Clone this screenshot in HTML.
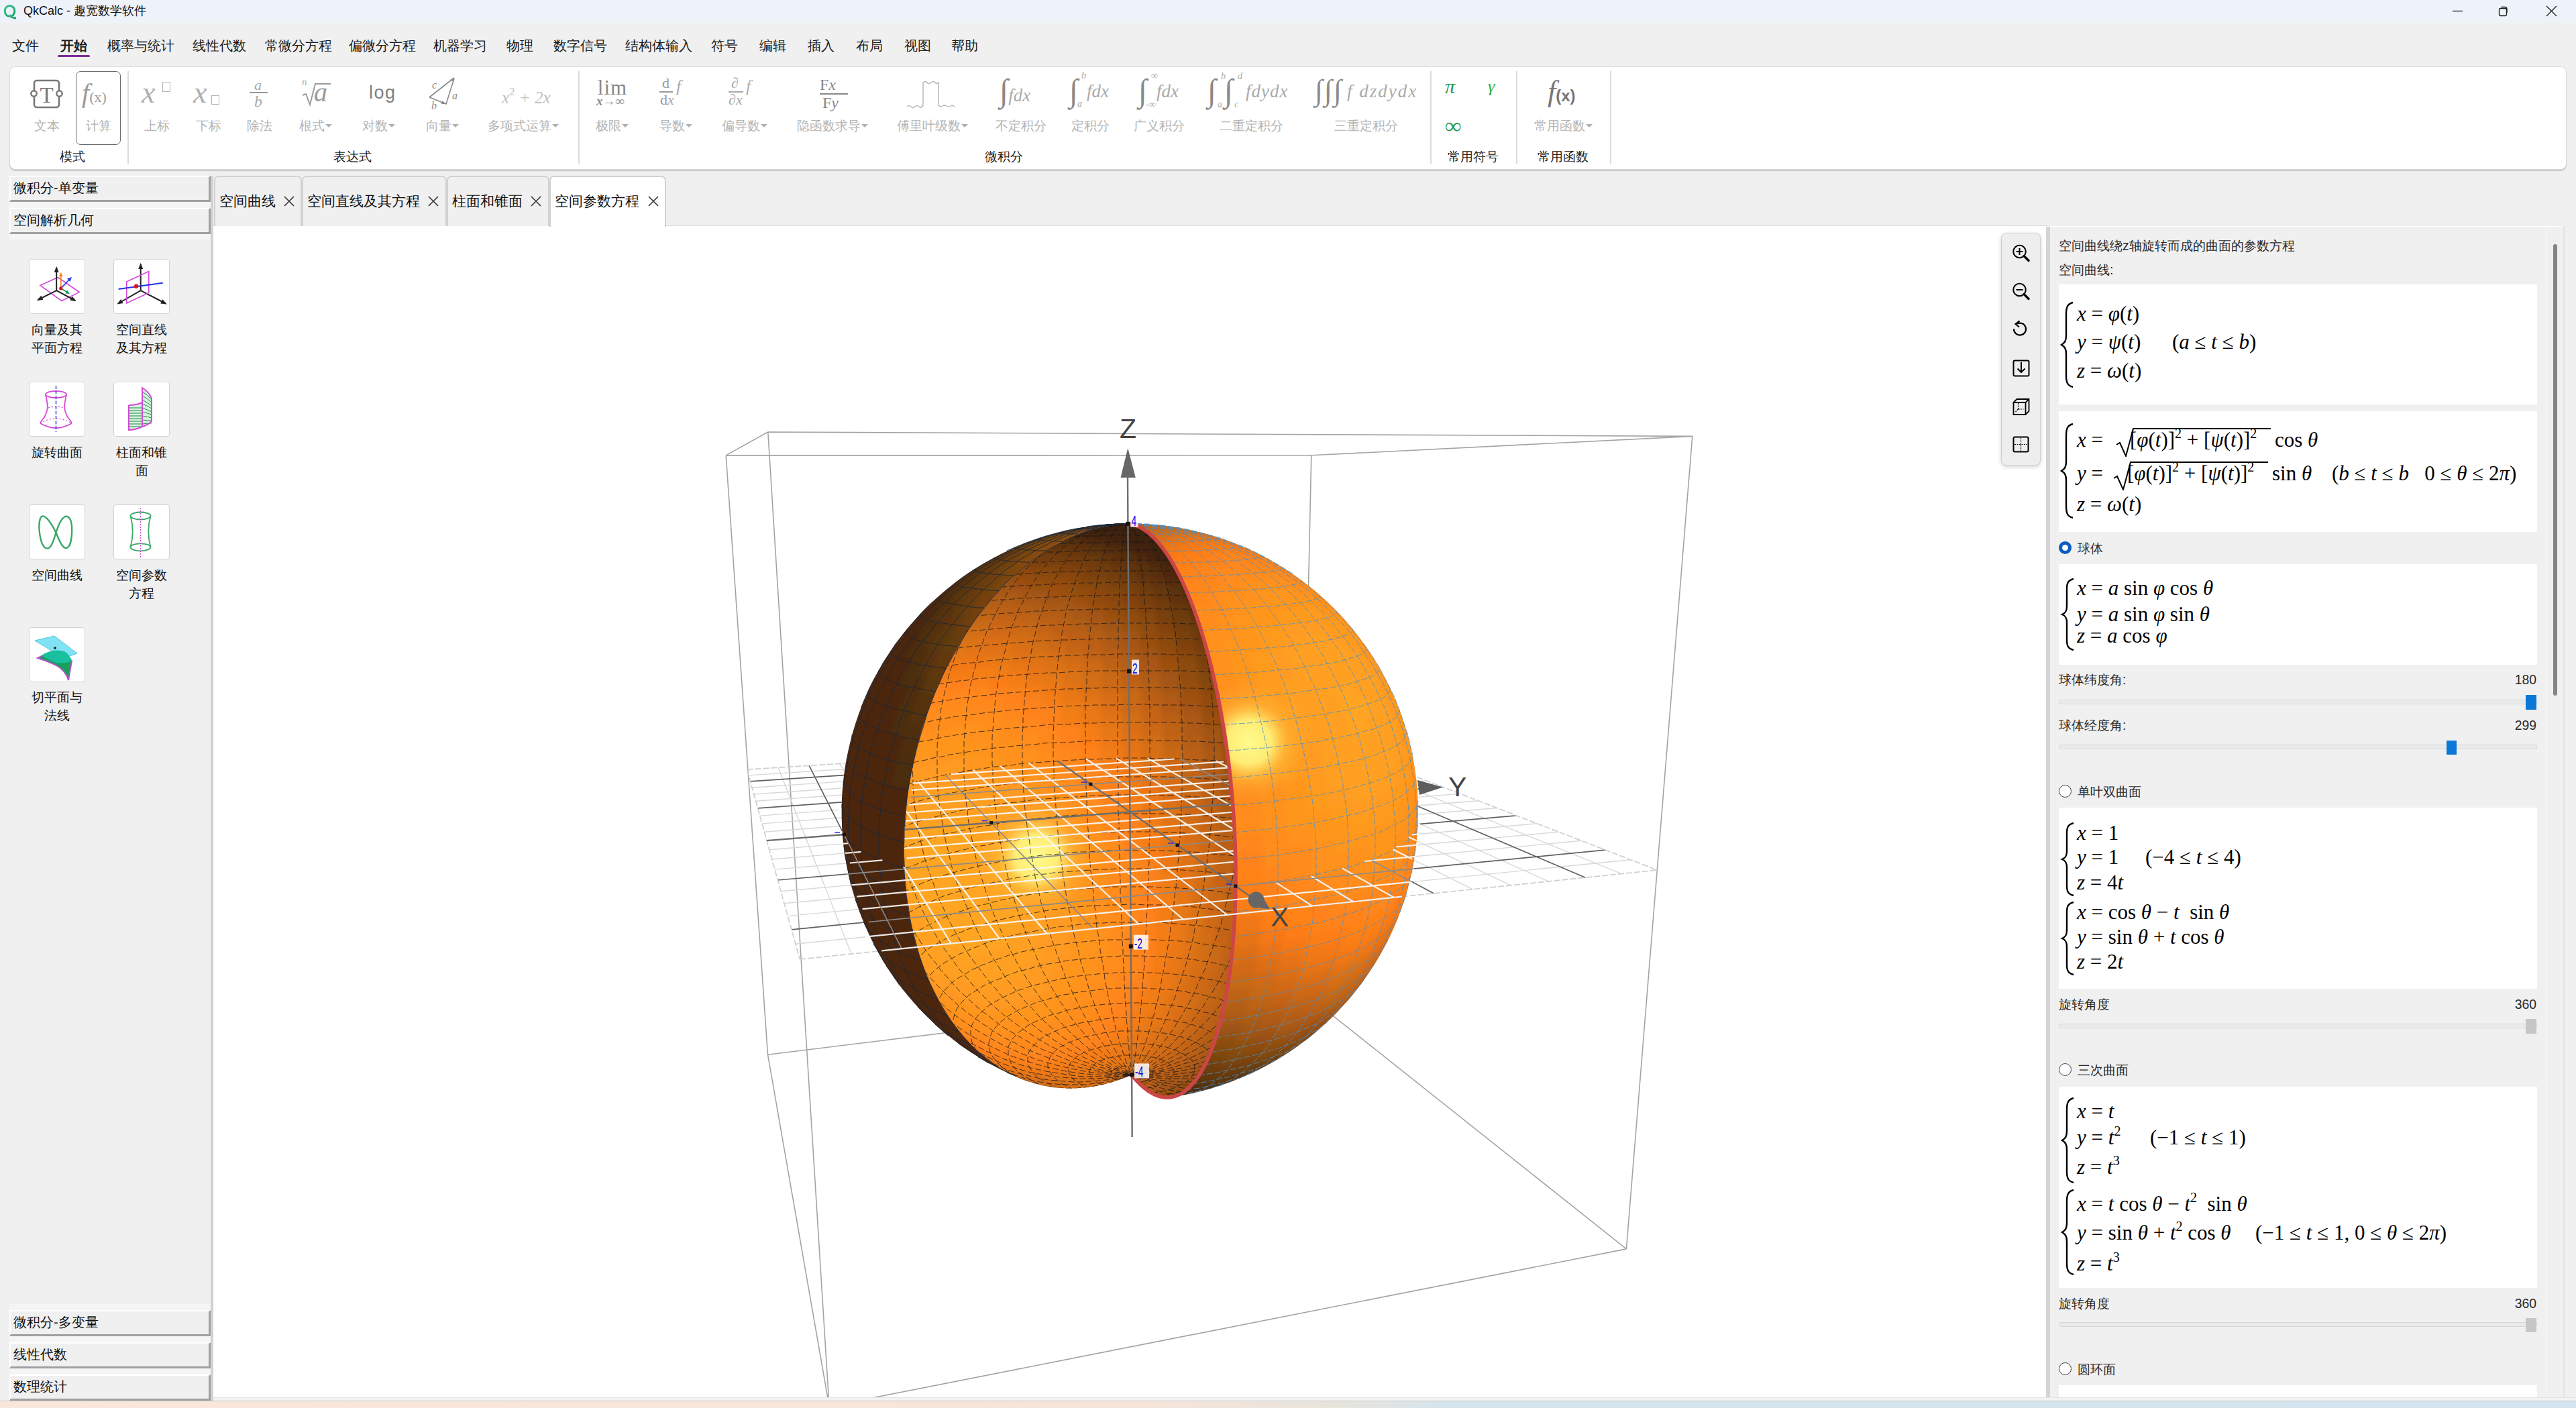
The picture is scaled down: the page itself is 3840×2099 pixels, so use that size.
<!DOCTYPE html>
<html><head><meta charset="utf-8"><title>QkCalc</title>
<style>
*{box-sizing:border-box}
html,body{margin:0;padding:0}
body{width:3840px;height:2099px;position:relative;overflow:hidden;background:#f0f0f0;font-family:"Liberation Sans",sans-serif;color:#1a1a1a}
.a{position:absolute;white-space:nowrap}
#title{left:0;top:0;width:3840px;height:34px;background:#eef3f9}
.menu{top:55px;font-size:20px;line-height:26px;color:#1a1a1a}
#ribbon{left:14px;top:99px;width:3812px;height:154px;background:#fff;border:1px solid #dadada;border-radius:9px;box-shadow:0 2px 1px #c8c8c8}
.sep{top:106px;width:2px;height:139px;background:#dcdcdc}
.rl{top:175px;font-size:19px;line-height:26px;color:#b4b4b4;text-align:center}
.gl{top:221px;font-size:19px;line-height:26px;color:#1e1e1e;text-align:center}
.ic{color:#a8a8a8;font-family:"Liberation Serif",serif;font-style:italic;text-align:center}
.dd{display:inline-block;width:0;height:0;border-left:5px solid transparent;border-right:5px solid transparent;border-top:5px solid #b0b0b0;vertical-align:middle;margin-left:1px;position:relative;top:-1px}
.shdr{left:14px;width:300px;height:39px;background:#f0f0f0;border-top:2px solid #fff;border-left:2px solid #fff;border-bottom:3px solid #a0a0a0;border-right:3px solid #a0a0a0;font-size:20px;line-height:33px;padding-left:4px;color:#111}
.tile{width:84px;height:82px;background:#fff;border:1px solid #d4d4d4;border-radius:4px}
.tl{font-size:19px;line-height:27px;color:#111;text-align:center;width:120px}
.tab{top:262px;height:75px;background:#f0f0f0;border:2px solid #d2d2d2;border-bottom:none;border-radius:7px 7px 0 0;font-size:21px;line-height:72px;color:#111;padding-left:6px}
.tx{position:absolute;top:27px;width:18px;height:18px}
.rp{font-size:19.4px;line-height:24px;color:#2a2a2a}
.mb{background:#fff}
.m{font-family:"Liberation Serif",serif;font-size:31px;color:#000;line-height:34px}
.m i{font-style:italic}
.m sup{line-height:0;vertical-align:0;position:relative;top:-13px}
.m .sp{letter-spacing:2px;word-spacing:1px}
.sl{height:7px;background:#e8eaec;border:1px solid #d6d8da;border-radius:3px}
.radio{width:19px;height:19px;border-radius:50%;border:1.6px solid #444;background:#fff}
</style></head><body>
<!-- TITLE BAR -->
<div id="title" class="a"></div>
<svg class="a" style="left:4px;top:6px" width="22" height="24" viewBox="0 0 22 24"><defs><linearGradient id="qg" x1="0" y1="0" x2="1" y2="1"><stop offset="0" stop-color="#38c38a"/><stop offset="1" stop-color="#17a06a"/></linearGradient></defs><ellipse cx="10.5" cy="10.5" rx="7.3" ry="8" fill="none" stroke="url(#qg)" stroke-width="3"/><path d="M10 16 Q13 21 20 21" stroke="url(#qg)" stroke-width="3" fill="none"/></svg>
<div class="a" style="left:35px;top:4px;font-size:18px;line-height:25px;color:#111">QkCalc - 趣宽数学软件</div>
<svg class="a" style="left:3650px;top:4px" width="180" height="26"><path d="M6 12.5h15" stroke="#1a1a1a" stroke-width="1.3"/><rect x="75.5" y="8.5" width="11" height="11" rx="1.8" fill="none" stroke="#1a1a1a" stroke-width="1.3"/><path d="M78.5 6.5h5.5a3 3 0 0 1 3 3v5.5" fill="none" stroke="#1a1a1a" stroke-width="1.3"/><path d="M146 5l15 15M161 5l-15 15" stroke="#1a1a1a" stroke-width="1.3"/></svg>
<!-- MENU -->
<div class="a menu" style="left:18px">文件</div>
<div class="a menu" style="left:90px;font-weight:bold">开始</div>
<div class="a" style="left:86px;top:82px;width:48px;height:3px;background:#7b2c9b;border-radius:2px"></div>
<div class="a menu" style="left:160px">概率与统计</div>
<div class="a menu" style="left:287px">线性代数</div>
<div class="a menu" style="left:395px">常微分方程</div>
<div class="a menu" style="left:520px">偏微分方程</div>
<div class="a menu" style="left:646px">机器学习</div>
<div class="a menu" style="left:755px">物理</div>
<div class="a menu" style="left:825px">数字信号</div>
<div class="a menu" style="left:932px">结构体输入</div>
<div class="a menu" style="left:1060px">符号</div>
<div class="a menu" style="left:1132px">编辑</div>
<div class="a menu" style="left:1204px">插入</div>
<div class="a menu" style="left:1276px">布局</div>
<div class="a menu" style="left:1348px">视图</div>
<div class="a menu" style="left:1418px">帮助</div>
<!-- RIBBON -->
<div id="ribbon" class="a"></div>
<div class="a sep" style="left:190px"></div>
<div class="a sep" style="left:862px"></div>
<div class="a sep" style="left:2132px"></div>
<div class="a sep" style="left:2260px"></div>
<div class="a sep" style="left:2400px"></div>
<!-- group labels -->
<div class="a gl" style="left:58px;width:100px">模式</div>
<div class="a gl" style="left:475px;width:100px">表达式</div>
<div class="a gl" style="left:1446px;width:100px">微积分</div>
<div class="a gl" style="left:2146px;width:100px">常用符号</div>
<div class="a gl" style="left:2280px;width:100px">常用函数</div>
<!-- mode -->
<svg class="a" style="left:44px;top:115px" width="52" height="50"><rect x="7" y="5" width="37" height="40" rx="4" fill="none" stroke="#787878" stroke-width="2.6"/><circle cx="6.5" cy="24.5" r="4.2" fill="#fff" stroke="#787878" stroke-width="2.4"/><circle cx="44.5" cy="24.5" r="4.2" fill="#fff" stroke="#787878" stroke-width="2.4"/><text x="25.5" y="38" text-anchor="middle" font-family="Liberation Serif" font-size="33" fill="#787878">T</text></svg>
<div class="a" style="left:113px;top:106px;width:67px;height:110px;border:1.6px solid #6a6a6a;border-radius:7px"></div>
<div class="a ic" style="left:122px;top:114px;font-size:40px;line-height:50px;color:#9a9a9a">f<span style="font-style:normal;font-size:22px">(x)</span></div>
<div class="a rl" style="left:30px;width:80px">文本</div>
<div class="a rl" style="left:107px;width:80px">计算</div>
<!-- expression -->
<div class="a ic" style="left:211px;top:108px;font-size:46px;line-height:60px;color:#b0b0b0">x</div>
<div class="a" style="left:242px;top:122px;width:12px;height:15px;border:1.5px solid #b4b4b4"></div>
<div class="a ic" style="left:288px;top:108px;font-size:46px;line-height:60px;color:#b0b0b0">x</div>
<div class="a" style="left:315px;top:142px;width:12px;height:14px;border:1.5px solid #b4b4b4"></div>
<div class="a ic" style="left:379px;top:116px;font-size:22px;line-height:22px;color:#aaa">a</div>
<div class="a" style="left:372px;top:137px;width:27px;height:2px;background:#999"></div>
<div class="a ic" style="left:379px;top:139px;font-size:24px;line-height:24px;color:#aaa">b</div>
<div class="a ic" style="left:450px;top:115px;font-size:15px;line-height:15px;color:#aaa">n</div>
<svg class="a" style="left:449px;top:124px" width="46" height="36"><path d="M2 18l5 -2l6 16l8 -31h23" fill="none" stroke="#9a9a9a" stroke-width="2"/></svg>
<div class="a ic" style="left:468px;top:117px;font-size:40px;line-height:42px;color:#9a9a9a">a</div>
<div class="a" style="left:550px;top:122px;font-size:27px;line-height:32px;color:#808080;letter-spacing:1.5px">log</div>
<svg class="a" style="left:632px;top:108px" width="56" height="56"><path d="M8 37L45 8M8 37l25 10l12 -38" fill="none" stroke="#8a8a8a" stroke-width="1.6"/><path d="M45 8l-6 3l5 3z M33 47l-6 -5l-1 5z" fill="#8a8a8a"/><text x="12" y="24" font-family="Liberation Serif" font-style="italic" font-size="16" fill="#8a8a8a">c</text><text x="42" y="40" font-family="Liberation Serif" font-style="italic" font-size="16" fill="#8a8a8a">a</text><text x="11" y="55" font-family="Liberation Serif" font-style="italic" font-size="16" fill="#8a8a8a">b</text></svg>
<div class="a ic" style="left:748px;top:121px;font-size:25px;line-height:32px;color:#c0c0c0">x<sup style="font-size:17px;font-style:normal;vertical-align:12px">2</sup> + 2x</div>
<div class="a rl" style="left:194px;width:80px">上标</div>
<div class="a rl" style="left:271px;width:80px">下标</div>
<div class="a rl" style="left:347px;width:80px">除法</div>
<div class="a rl" style="left:420px;width:100px">根式<i class="dd"></i></div>
<div class="a rl" style="left:514px;width:100px">对数<i class="dd"></i></div>
<div class="a rl" style="left:609px;width:100px">向量<i class="dd"></i></div>
<div class="a rl" style="left:710px;width:140px">多项式运算<i class="dd"></i></div>
<!-- calculus -->
<div class="a" style="left:888px;top:118px;width:50px;text-align:center;font-family:'Liberation Serif',serif;font-size:31px;line-height:26px;color:#888;letter-spacing:1px">lim</div>
<div class="a ic" style="left:889px;top:142px;font-size:19px;line-height:18px;color:#888;font-weight:bold">x<span style="font-style:normal">→∞</span></div>
<div class="a" style="left:987px;top:114px;font-family:'Liberation Serif',serif;font-size:22px;line-height:20px;color:#999">d</div>
<div class="a" style="left:983px;top:136px;width:20px;height:2px;background:#999"></div>
<div class="a" style="left:984px;top:138px;font-family:'Liberation Serif',serif;font-size:22px;line-height:22px;color:#999">d<i style="color:#aaa">x</i></div>
<div class="a ic" style="left:1008px;top:114px;font-size:26px;line-height:30px;color:#aaa">f</div>
<div class="a" style="left:1090px;top:114px;font-family:'Liberation Serif',serif;font-size:22px;line-height:20px;color:#aaa">∂</div>
<div class="a" style="left:1086px;top:136px;width:22px;height:2px;background:#aaa"></div>
<div class="a" style="left:1086px;top:138px;font-family:'Liberation Serif',serif;font-size:22px;line-height:22px;color:#aaa">∂<i>x</i></div>
<div class="a ic" style="left:1112px;top:114px;font-size:26px;line-height:30px;color:#b0b0b0">f</div>
<div class="a" style="left:1222px;top:115px;font-family:'Liberation Serif',serif;font-size:24px;line-height:22px;color:#888">F<i>x</i></div>
<div class="a" style="left:1222px;top:139px;width:42px;height:2px;background:#888"></div>
<div class="a" style="left:1226px;top:141px;font-family:'Liberation Serif',serif;font-size:24px;line-height:24px;color:#888">F<i>y</i></div>
<svg class="a" style="left:1350px;top:115px" width="82" height="50"><path d="M2 44q3 -3 6 0t6 0t6 0t6 -2v-34q4 -3 6 0t6 0t6 0t5 0v34q3 3 6 1t6 0t6 0t6 1" fill="none" stroke="#b8b8b8" stroke-width="1.5"/></svg>
<div class="a ic" style="left:1490px;top:107px;font-size:48px;line-height:56px;color:#8a8a8a">∫<span style="font-size:27px;color:#aaa">fdx</span></div>
<div class="a ic" style="left:1594px;top:107px;font-size:48px;line-height:56px;color:#8a8a8a">∫</div>
<div class="a ic" style="left:1612px;top:106px;font-size:14px;line-height:14px;color:#aaa">b</div>
<div class="a ic" style="left:1606px;top:148px;font-size:14px;line-height:14px;color:#aaa">a</div>
<div class="a ic" style="left:1620px;top:119px;font-size:27px;line-height:34px;color:#aaa">fdx</div>
<div class="a ic" style="left:1697px;top:107px;font-size:48px;line-height:56px;color:#8a8a8a">∫</div>
<div class="a ic" style="left:1716px;top:106px;font-size:14px;line-height:14px;color:#aaa">∞</div>
<div class="a ic" style="left:1708px;top:149px;font-size:14px;line-height:14px;color:#aaa">-∞</div>
<div class="a ic" style="left:1724px;top:119px;font-size:27px;line-height:34px;color:#aaa">fdx</div>
<div class="a ic" style="left:1800px;top:107px;font-size:48px;line-height:56px;color:#8a8a8a">∫</div>
<div class="a ic" style="left:1820px;top:107px;font-size:14px;line-height:14px;color:#aaa">b</div>
<div class="a ic" style="left:1815px;top:149px;font-size:14px;line-height:14px;color:#aaa">a</div>
<div class="a ic" style="left:1825px;top:107px;font-size:48px;line-height:56px;color:#8a8a8a">∫</div>
<div class="a ic" style="left:1845px;top:107px;font-size:14px;line-height:14px;color:#aaa">d</div>
<div class="a ic" style="left:1840px;top:149px;font-size:14px;line-height:14px;color:#aaa">c</div>
<div class="a ic" style="left:1857px;top:119px;font-size:27px;line-height:34px;color:#aaa;letter-spacing:1px">fdydx</div>
<div class="a ic" style="left:1960px;top:107px;font-size:44px;line-height:56px;color:#8a8a8a">∫</div><div class="a ic" style="left:1974px;top:107px;font-size:44px;line-height:56px;color:#8a8a8a">∫</div><div class="a ic" style="left:1988px;top:107px;font-size:44px;line-height:56px;color:#8a8a8a">∫</div>
<div class="a ic" style="left:2008px;top:119px;font-size:27px;line-height:34px;color:#aaa;letter-spacing:2px">f dzdydx</div>
<div class="a rl" style="left:872px;width:80px">极限<i class="dd"></i></div>
<div class="a rl" style="left:957px;width:100px">导数<i class="dd"></i></div>
<div class="a rl" style="left:1050px;width:120px">偏导数<i class="dd"></i></div>
<div class="a rl" style="left:1171px;width:140px">隐函数求导<i class="dd"></i></div>
<div class="a rl" style="left:1320px;width:140px">傅里叶级数<i class="dd"></i></div>
<div class="a rl" style="left:1472px;width:100px">不定积分</div>
<div class="a rl" style="left:1585px;width:80px">定积分</div>
<div class="a rl" style="left:1678px;width:100px">广义积分</div>
<div class="a rl" style="left:1805px;width:120px">二重定积分</div>
<div class="a rl" style="left:1976px;width:120px">三重定积分</div>
<!-- symbols -->
<div class="a ic" style="left:2154px;top:112px;font-size:30px;line-height:34px;color:#1f9b52">π</div>
<div class="a ic" style="left:2218px;top:112px;font-size:26px;line-height:34px;color:#27b427">γ</div>
<div class="a" style="left:2154px;top:170px;font-family:'Liberation Serif',serif;font-size:34px;line-height:36px;color:#1f9b52;font-weight:bold">∞</div>
<div class="a ic" style="left:2307px;top:112px;font-size:44px;line-height:50px;color:#777">f<span style="font-style:normal;font-family:'Liberation Sans';font-size:24px;font-weight:bold;color:#777">(x)</span></div>
<div class="a rl" style="left:2270px;width:120px">常用函数<i class="dd"></i></div>

<!-- SIDEBAR -->
<div class="a" style="left:314px;top:262px;width:4px;height:1826px;background:#d2d2d2"></div>
<div class="a" style="left:14px;top:301px;width:300px;height:9px;background:#f5f5f5"></div>
<div class="a" style="left:14px;top:349px;width:300px;height:9px;background:#f5f5f5"></div>
<div class="a shdr" style="top:262px">微积分-单变量</div>
<div class="a shdr" style="top:310px">空间解析几何</div>
<div class="a" style="left:14px;top:1944px;width:300px;height:144px;background:#f5f5f5"></div>
<div class="a shdr" style="top:1953px">微积分-多变量</div>
<div class="a shdr" style="top:2001px">线性代数</div>
<div class="a shdr" style="top:2049px">数理统计</div>
<!-- tiles -->
<div class="a tile" style="left:43px;top:386px"><svg width="84" height="82" style="position:absolute;left:0;top:0">
<defs><marker id="ak" markerUnits="userSpaceOnUse" markerWidth="9" markerHeight="8" refX="7" refY="4" orient="auto"><path d="M0 0.5L9 4L0 7.5z" fill="#222"/></marker></defs>
<path d="M15.9 38.5L42.4 26.5L74.3 48.5L47.9 61.5Z" fill="none" stroke="#d24bd8" stroke-width="1.6"/>
<path d="M40.2 46.2V12" stroke="#222" stroke-width="2" fill="none" marker-end="url(#ak)"/><path d="M40.2 46.2L12.5 60" stroke="#222" stroke-width="2" fill="none" marker-end="url(#ak)"/><path d="M40.2 46.2L68 61" stroke="#222" stroke-width="2" fill="none" marker-end="url(#ak)"/>
<path d="M46.8 42.9V22" stroke="#f08a1c" stroke-width="1.8"/><path d="M46.8 19l-3 6h6z" fill="#f08a1c"/>
<path d="M46.8 42.9L61 28" stroke="#2a3ae0" stroke-width="1.8"/><path d="M63 26l-7 2.5 4.5 4.5z" fill="#2a3ae0"/>
<path d="M46.8 42.9L57 49" stroke="#1a9b5a" stroke-width="1.8"/><path d="M60 51l-6.5-0.5 2.5-5z" fill="#1a9b5a"/>
<circle cx="46.8" cy="42.9" r="2.6" fill="#e01010"/></svg></div>
<div class="a tile" style="left:169px;top:386px"><svg width="84" height="82" style="position:absolute;left:0;top:0">
<path d="M39.7 46.2V7" stroke="#222" stroke-width="2" fill="none" marker-end="url(#ak)"/><path d="M39.7 46.2L6 65.5" stroke="#222" stroke-width="2" fill="none" marker-end="url(#ak)"/><path d="M39.7 46.2L77 65.5" stroke="#222" stroke-width="2" fill="none" marker-end="url(#ak)"/>
<path d="M18.7 33L51.8 17.5V49.5L18.7 65Z" fill="none" stroke="#d24bd8" stroke-width="1.6"/>
<path d="M6.6 44L72.7 34.8" stroke="#2330e8" stroke-width="2"/>
<circle cx="33.1" cy="39.8" r="3.2" fill="#e81010"/></svg></div>
<div class="a tile" style="left:43px;top:569px"><svg width="84" height="82" style="position:absolute;left:0;top:0">
<ellipse cx="39.5" cy="18" rx="15.5" ry="5" fill="none" stroke="#d64ad6" stroke-width="1.8"/>
<path d="M24 18C26 30 30 38 22 52Q17 58 16 61M55 18C53 30 49 38 57 52Q62 58 63 61" fill="none" stroke="#d64ad6" stroke-width="1.8"/>
<path d="M16 61Q39.5 75 63 61" fill="none" stroke="#d64ad6" stroke-width="1.8"/>
<path d="M16 61Q39.5 47 63 61M28 38Q39.5 34 51 38" fill="none" stroke="#d64ad6" stroke-width="1.2" stroke-dasharray="2 3"/>
<path d="M39.5 5V74" stroke="#3a4ee0" stroke-width="1.6" stroke-dasharray="5 2.5"/></svg></div>
<div class="a tile" style="left:169px;top:569px"><svg width="84" height="82" style="position:absolute;left:0;top:0">
<path d="M22 34Q34 34 42 30V66Q32 71 22 71Z" fill="#d6f0de"/>
<path d="M42 8Q52 14 56 24V58Q50 64 42 66Z" fill="#d6f0de"/>
<path d="M22 38h20M22 42h20M22 46h20M22 50h20M22 54h20M22 58h20M22 62h20M22 66h20M42 14q8 4 14 12M42 20q8 4 14 10M42 26q8 4 14 9M42 32q8 3 14 7M42 38q8 3 14 6M42 44q8 2 14 4M42 50q8 1 14 3M42 56q8 1 14 1M42 62q8 -1 14 -1" stroke="#1f8f4a" stroke-width="1" fill="none"/>
<path d="M22 34Q34 34 42 30M22 34V71Q32 71 42 66Q50 64 56 58V24Q52 14 42 8V66" fill="none" stroke="#d64ad6" stroke-width="2"/></svg></div>
<div class="a tile" style="left:43px;top:752px"><svg width="84" height="82" style="position:absolute;left:0;top:0">
<path d="M39.5 41C30 22 20 10 16 20C12 32 16 60 24 64C32 68 36 52 39.5 41C43 30 50 12 58 18C66 24 64 58 57 63C50 68 44 52 39.5 41Z" fill="none" stroke="#3aa86a" stroke-width="2.4"/></svg></div>
<div class="a tile" style="left:169px;top:752px"><svg width="84" height="82" style="position:absolute;left:0;top:0">
<ellipse cx="39.5" cy="16" rx="15" ry="5.5" fill="none" stroke="#3aa86a" stroke-width="1.8"/>
<ellipse cx="39.5" cy="62.8" rx="15" ry="5.5" fill="none" stroke="#3aa86a" stroke-width="1.8"/>
<path d="M24.5 16Q31 39 24.5 62.8M54.5 16Q48 39 54.5 62.8" fill="none" stroke="#3aa86a" stroke-width="1.8"/>
<path d="M39.5 4V78" stroke="#d64ad6" stroke-width="1.4" stroke-dasharray="2 2"/></svg></div>
<div class="a tile" style="left:43px;top:935px"><svg width="84" height="82" style="position:absolute;left:0;top:0">
<path d="M12 45Q22 40 32 36Q52 38 63 49L58 78Q54 64 40 56Q28 50 12 45Z" fill="#16a058" stroke="#b355c8" stroke-width="2"/>
<path d="M8 19L37 12L71 38L51 45Z" fill="#72e0f2" opacity="0.9" stroke="#3cc0e0" stroke-width="1"/>
<path d="M18 41Q34 30 52 35Q60 40 63 49Q54 54 40 52Q28 48 18 41Z" fill="#18c0a0"/>
<circle cx="38" cy="30" r="1.8" fill="#111"/></svg></div>
<!-- tile labels -->
<div class="a tl" style="left:25px;top:478px">向量及其</div>
<div class="a tl" style="left:25px;top:505px">平面方程</div>
<div class="a tl" style="left:151px;top:478px">空间直线</div>
<div class="a tl" style="left:151px;top:505px">及其方程</div>
<div class="a tl" style="left:25px;top:661px">旋转曲面</div>
<div class="a tl" style="left:151px;top:661px">柱面和锥</div>
<div class="a tl" style="left:151px;top:688px">面</div>
<div class="a tl" style="left:25px;top:844px">空间曲线</div>
<div class="a tl" style="left:151px;top:844px">空间参数</div>
<div class="a tl" style="left:151px;top:871px">方程</div>
<div class="a tl" style="left:25px;top:1026px">切平面与</div>
<div class="a tl" style="left:25px;top:1053px">法线</div>

<!-- MAIN VIEW BG -->
<div class="a" style="left:318px;top:336px;width:2734px;height:1749px;background:#fff;border-top:1px solid #dcdcdc"></div>
<div class="a tab" style="left:319px;width:131px">空间曲线<svg class="tx" style="left:101px"><path d="M2 2l14 14M16 2L2 16" stroke="#3a3a3a" stroke-width="1.7"/></svg></div>
<div class="a tab" style="left:450px;width:216px">空间直线及其方程<svg class="tx" style="left:185px"><path d="M2 2l14 14M16 2L2 16" stroke="#3a3a3a" stroke-width="1.7"/></svg></div>
<div class="a tab" style="left:666px;width:153px">柱面和锥面<svg class="tx" style="left:122px"><path d="M2 2l14 14M16 2L2 16" stroke="#3a3a3a" stroke-width="1.7"/></svg></div>
<div class="a tab" style="left:819px;width:174px;background:#fff;height:76px">空间参数方程<svg class="tx" style="left:144px"><path d="M2 2l14 14M16 2L2 16" stroke="#3a3a3a" stroke-width="1.7"/></svg></div>
<!-- window bottom -->
<div class="a" style="left:318px;top:2083px;width:3522px;height:5px;background:#f3f3f3;border-top:1px solid #e4e4e4"></div>
<div class="a" style="left:0;top:2088px;width:3840px;height:11px;background:linear-gradient(90deg,#fbe6dc 0%,#f6e4da 45%,#e7e4dc 52%,#d6e4ee 56%,#d4e3ee 100%);border-top:1px solid #c4c4c4"></div>

<svg width="2731" height="1746" viewBox="319 337 2731 1746" style="position:absolute;left:319px;top:337px"><defs><clipPath id="cw"><path d="M1681.4 780.8L1683.2 780.9L1685.0 781.2L1686.8 781.5L1688.6 781.9L1690.3 782.4L1692.2 783.0L1694.0 783.7L1695.8 784.4L1697.6 785.2L1699.5 786.2L1701.3 787.1L1703.1 788.2L1705.0 789.4L1706.9 790.6L1708.7 792.0L1710.6 793.4L1712.5 794.9L1714.3 796.5L1716.2 798.1L1718.1 799.9L1720.0 801.7L1721.9 803.7L1723.8 805.7L1725.7 807.8L1727.6 810.0L1729.4 812.3L1731.3 814.7L1733.2 817.1L1735.1 819.7L1737.0 822.3L1738.9 825.0L1740.8 827.8L1742.7 830.7L1744.6 833.7L1746.5 836.8L1748.3 840.0L1750.2 843.2L1752.1 846.6L1753.9 850.0L1755.8 853.5L1757.6 857.1L1759.5 860.8L1761.3 864.5L1763.1 868.4L1764.9 872.3L1766.8 876.3L1768.6 880.4L1770.3 884.6L1772.1 888.9L1773.9 893.2L1775.6 897.7L1777.4 902.2L1779.1 906.8L1780.8 911.4L1782.5 916.2L1784.2 921.0L1785.9 925.9L1787.6 930.9L1789.2 935.9L1790.8 941.0L1792.4 946.2L1794.0 951.5L1795.6 956.8L1797.2 962.2L1798.7 967.7L1800.2 973.2L1801.7 978.8L1803.2 984.5L1804.6 990.2L1806.1 996.0L1807.5 1001.8L1808.9 1007.7L1810.2 1013.7L1811.6 1019.7L1812.9 1025.7L1814.2 1031.8L1815.5 1038.0L1816.7 1044.2L1817.9 1050.5L1819.1 1056.8L1820.3 1063.1L1821.4 1069.5L1822.5 1076.0L1823.6 1082.4L1824.7 1088.9L1825.7 1095.5L1826.7 1102.0L1827.7 1108.6L1828.6 1115.3L1829.5 1121.9L1830.4 1128.6L1831.3 1135.3L1832.1 1142.0L1832.9 1148.8L1833.6 1155.5L1834.4 1162.3L1835.0 1169.1L1835.7 1175.9L1836.3 1182.7L1836.9 1189.5L1837.5 1196.4L1838.0 1203.2L1838.5 1210.0L1839.0 1216.8L1839.4 1223.7L1839.8 1230.5L1840.2 1237.3L1840.5 1244.1L1840.8 1250.9L1841.1 1257.7L1841.3 1264.4L1841.5 1271.2L1841.7 1277.9L1841.8 1284.6L1841.9 1291.3L1842.0 1297.9L1842.0 1304.6L1842.0 1311.2L1842.0 1317.8L1841.9 1324.3L1841.8 1330.8L1841.7 1337.3L1841.5 1343.7L1841.3 1350.1L1841.0 1356.5L1840.8 1362.8L1840.5 1369.0L1840.1 1375.3L1839.8 1381.4L1839.4 1387.5L1839.0 1393.6L1838.5 1399.6L1838.0 1405.6L1837.5 1411.5L1836.9 1417.4L1836.3 1423.2L1835.7 1428.9L1835.1 1434.6L1834.4 1440.2L1833.7 1445.7L1833.0 1451.2L1832.2 1456.6L1831.4 1462.0L1830.6 1467.2L1829.8 1472.4L1828.9 1477.6L1828.0 1482.6L1827.1 1487.6L1826.1 1492.6L1825.2 1497.4L1824.2 1502.2L1823.1 1506.9L1822.1 1511.5L1821.0 1516.0L1819.9 1520.5L1818.8 1524.8L1817.7 1529.1L1816.5 1533.3L1815.3 1537.5L1814.1 1541.5L1812.9 1545.5L1811.6 1549.4L1810.3 1553.2L1809.1 1556.9L1807.7 1560.5L1806.4 1564.1L1805.1 1567.6L1803.7 1570.9L1802.3 1574.2L1800.9 1577.4L1799.5 1580.5L1798.1 1583.6L1796.6 1586.5L1795.2 1589.4L1793.7 1592.2L1792.2 1594.9L1790.7 1597.5L1789.2 1600.0L1787.7 1602.4L1786.1 1604.7L1784.6 1607.0L1783.0 1609.2L1781.4 1611.2L1779.8 1613.2L1778.2 1615.1L1776.6 1617.0L1775.0 1618.7L1773.4 1620.3L1771.7 1621.9L1770.1 1623.4L1768.4 1624.8L1766.8 1626.1L1765.1 1627.3L1763.4 1628.5L1761.8 1629.5L1760.1 1630.5L1758.4 1631.4L1756.7 1632.2L1755.0 1633.0L1753.3 1633.6L1751.6 1634.2L1749.9 1634.7L1748.2 1635.1L1746.4 1635.5L1744.7 1635.7L1743.0 1635.9L1741.3 1636.0L1739.6 1636.0L1737.8 1636.0L1736.1 1635.8L1734.4 1635.6L1732.6 1635.4L1730.9 1635.0L1729.2 1634.6L1727.5 1634.1L1725.8 1633.6L1724.0 1632.9L1722.3 1632.2L1720.6 1631.4L1718.9 1630.6L1717.2 1629.7L1715.5 1628.7L1713.7 1627.7L1712.0 1626.6L1710.3 1625.4L1708.7 1624.1L1707.0 1622.8L1705.3 1621.5L1703.6 1620.0L1701.9 1618.5L1700.2 1617.0L1698.6 1615.3L1696.9 1613.7L1695.3 1611.9L1693.6 1610.1L1692.0 1608.3L1690.3 1606.4L1688.7 1604.4L1687.1 1602.4L1687.1 1602.4L1683.5 1603.9L1679.8 1605.5L1676.2 1606.9L1672.5 1608.3L1668.8 1609.6L1665.1 1610.9L1661.4 1612.1L1657.7 1613.2L1654.0 1614.3L1650.3 1615.3L1646.5 1616.3L1642.8 1617.2L1639.1 1618.0L1635.3 1618.7L1631.5 1619.4L1627.8 1620.0L1624.0 1620.6L1620.2 1621.1L1616.4 1621.5L1612.6 1621.8L1608.9 1622.1L1605.1 1622.3L1601.3 1622.5L1597.5 1622.5L1593.7 1622.5L1589.9 1622.4L1586.1 1622.3L1582.3 1622.1L1578.5 1621.8L1574.8 1621.4L1571.0 1621.0L1567.2 1620.5L1563.4 1619.9L1559.7 1619.2L1555.9 1618.5L1552.2 1617.7L1548.5 1616.8L1544.7 1615.8L1541.0 1614.8L1537.3 1613.6L1533.6 1612.4L1529.9 1611.2L1526.3 1609.8L1522.6 1608.4L1519.0 1606.9L1515.3 1605.3L1511.7 1603.7L1508.1 1601.9L1504.6 1600.1L1501.0 1598.2L1497.5 1596.2L1494.0 1594.2L1490.5 1592.1L1487.0 1589.9L1483.6 1587.6L1480.1 1585.2L1476.7 1582.8L1473.4 1580.3L1470.0 1577.7L1466.7 1575.0L1463.4 1572.3L1460.1 1569.4L1456.9 1566.5L1453.7 1563.5L1450.5 1560.5L1447.4 1557.3L1444.3 1554.1L1441.2 1550.8L1438.2 1547.5L1435.2 1544.0L1432.2 1540.5L1429.3 1536.9L1426.4 1533.2L1423.5 1529.5L1420.7 1525.7L1418.0 1521.8L1415.2 1517.8L1412.5 1513.8L1409.9 1509.7L1407.3 1505.5L1404.7 1501.3L1402.2 1497.0L1399.8 1492.6L1397.4 1488.1L1395.0 1483.6L1392.7 1479.0L1390.4 1474.4L1388.2 1469.6L1386.0 1464.9L1383.9 1460.0L1381.9 1455.1L1379.9 1450.1L1377.9 1445.1L1376.0 1440.0L1374.2 1434.9L1372.4 1429.7L1370.6 1424.4L1369.0 1419.1L1367.4 1413.7L1365.8 1408.3L1364.3 1402.8L1362.9 1397.3L1361.5 1391.7L1360.2 1386.0L1358.9 1380.4L1357.7 1374.6L1356.6 1368.9L1355.5 1363.1L1354.5 1357.2L1353.6 1351.3L1352.7 1345.4L1351.9 1339.4L1351.2 1333.4L1350.5 1327.4L1349.9 1321.3L1349.3 1315.2L1348.9 1309.0L1348.5 1302.8L1348.1 1296.6L1347.8 1290.4L1347.6 1284.2L1347.5 1277.9L1347.4 1271.6L1347.4 1265.3L1347.5 1259.0L1347.6 1252.6L1347.8 1246.2L1348.0 1239.9L1348.4 1233.5L1348.8 1227.1L1349.3 1220.7L1349.8 1214.3L1350.4 1207.8L1351.1 1201.4L1351.8 1195.0L1352.6 1188.6L1353.5 1182.1L1354.5 1175.7L1355.5 1169.3L1356.6 1162.9L1357.7 1156.5L1358.9 1150.1L1360.2 1143.7L1361.5 1137.4L1363.0 1131.0L1364.4 1124.7L1366.0 1118.4L1367.6 1112.1L1369.2 1105.8L1371.0 1099.5L1372.8 1093.3L1374.6 1087.1L1376.6 1081.0L1378.5 1074.8L1380.6 1068.7L1382.7 1062.6L1384.8 1056.6L1387.1 1050.6L1389.3 1044.6L1391.7 1038.7L1394.1 1032.8L1396.5 1027.0L1399.0 1021.2L1401.6 1015.4L1404.2 1009.7L1406.9 1004.0L1409.6 998.4L1412.4 992.9L1415.2 987.4L1418.1 981.9L1421.0 976.5L1423.9 971.2L1427.0 965.9L1430.0 960.6L1433.1 955.5L1436.3 950.4L1439.5 945.3L1442.7 940.3L1446.0 935.4L1449.3 930.6L1452.7 925.8L1456.1 921.0L1459.5 916.4L1463.0 911.8L1466.5 907.3L1470.0 902.8L1473.6 898.5L1477.2 894.2L1480.8 889.9L1484.5 885.8L1488.2 881.7L1492.0 877.7L1495.7 873.7L1499.5 869.9L1503.3 866.1L1507.1 862.4L1511.0 858.8L1514.9 855.2L1518.8 851.8L1522.7 848.4L1526.7 845.1L1530.6 841.9L1534.6 838.7L1538.6 835.7L1542.6 832.7L1546.6 829.8L1550.7 827.0L1554.7 824.3L1558.8 821.6L1562.9 819.0L1566.9 816.6L1571.0 814.2L1575.1 811.8L1579.2 809.6L1583.4 807.5L1587.5 805.4L1591.6 803.4L1595.7 801.5L1599.8 799.7L1604.0 798.0L1608.1 796.3L1612.2 794.8L1616.4 793.3L1620.5 791.9L1624.6 790.6L1628.7 789.3L1632.8 788.2L1636.9 787.1L1641.0 786.1L1645.1 785.2L1649.2 784.4L1653.3 783.7L1657.3 783.0L1661.4 782.4L1665.4 781.9L1669.4 781.5L1673.5 781.2L1677.5 780.9L1681.4 780.8Z"/></clipPath><clipPath id="co"><path clip-rule="evenodd" d="M1254.6 1213.2L1254.7 1220.7L1255.0 1228.2L1255.3 1235.7L1255.9 1243.2L1256.5 1250.7L1257.3 1258.1L1258.2 1265.6L1259.2 1273.0L1260.4 1280.4L1261.6 1287.8L1263.1 1295.2L1264.6 1302.5L1266.3 1309.8L1268.1 1317.1L1270.0 1324.4L1272.1 1331.6L1274.3 1338.8L1276.6 1345.9L1279.0 1353.0L1281.5 1360.1L1284.2 1367.1L1287.0 1374.0L1289.9 1380.9L1293.0 1387.8L1296.1 1394.6L1299.4 1401.3L1302.8 1408.0L1306.3 1414.7L1309.9 1421.2L1313.7 1427.7L1317.5 1434.2L1321.5 1440.5L1325.6 1446.8L1329.7 1453.1L1334.0 1459.2L1338.4 1465.3L1342.9 1471.3L1347.6 1477.2L1352.3 1483.0L1357.1 1488.8L1362.0 1494.5L1367.0 1500.0L1372.1 1505.5L1377.3 1510.9L1382.6 1516.3L1388.0 1521.5L1393.5 1526.6L1399.0 1531.6L1404.7 1536.6L1410.4 1541.4L1416.2 1546.1L1422.1 1550.8L1428.1 1555.3L1434.2 1559.7L1440.3 1564.0L1446.5 1568.2L1452.8 1572.3L1459.2 1576.3L1465.6 1580.2L1472.1 1583.9L1478.6 1587.6L1485.3 1591.1L1491.9 1594.5L1498.7 1597.8L1505.5 1601.0L1512.3 1604.1L1519.2 1607.0L1526.2 1609.8L1533.2 1612.5L1540.2 1615.1L1547.3 1617.6L1554.4 1619.9L1561.6 1622.1L1568.8 1624.2L1576.0 1626.1L1583.3 1627.9L1590.6 1629.6L1597.9 1631.2L1605.3 1632.7L1612.7 1634.0L1620.1 1635.2L1627.5 1636.2L1635.0 1637.1L1642.4 1637.9L1649.9 1638.6L1657.4 1639.1L1664.9 1639.5L1672.4 1639.8L1679.9 1640.0L1687.4 1640.0L1694.9 1639.9L1702.3 1639.6L1709.8 1639.2L1717.3 1638.7L1724.8 1638.1L1732.3 1637.3L1739.7 1636.4L1747.1 1635.4L1754.5 1634.2L1761.9 1632.9L1769.3 1631.5L1776.6 1629.9L1783.9 1628.3L1791.2 1626.5L1798.5 1624.5L1805.7 1622.5L1812.8 1620.3L1820.0 1618.0L1827.1 1615.6L1834.1 1613.0L1841.1 1610.3L1848.1 1607.5L1855.0 1604.6L1861.9 1601.6L1868.7 1598.4L1875.4 1595.1L1882.1 1591.8L1888.7 1588.2L1895.3 1584.6L1901.8 1580.9L1908.2 1577.0L1914.6 1573.1L1920.9 1569.0L1927.1 1564.8L1933.2 1560.5L1939.3 1556.1L1945.3 1551.6L1951.2 1547.0L1957.1 1542.3L1962.8 1537.5L1968.5 1532.6L1974.1 1527.6L1979.6 1522.5L1985.0 1517.3L1990.3 1512.0L1995.5 1506.6L2000.6 1501.1L2005.6 1495.6L2010.6 1489.9L2015.4 1484.2L2020.1 1478.3L2024.8 1472.4L2029.3 1466.5L2033.7 1460.4L2038.0 1454.3L2042.2 1448.1L2046.3 1441.8L2050.3 1435.4L2054.2 1429.0L2057.9 1422.5L2061.6 1416.0L2065.1 1409.4L2068.5 1402.7L2071.8 1395.9L2075.0 1389.2L2078.1 1382.3L2081.0 1375.4L2083.8 1368.5L2086.5 1361.5L2089.1 1354.4L2091.5 1347.3L2093.9 1340.2L2096.1 1333.1L2098.2 1325.9L2100.1 1318.6L2101.9 1311.3L2103.6 1304.0L2105.2 1296.7L2106.7 1289.3L2108.0 1282.0L2109.2 1274.6L2110.2 1267.1L2111.1 1259.7L2111.9 1252.2L2112.6 1244.8L2113.1 1237.3L2113.5 1229.8L2113.8 1222.3L2114.0 1214.8L2114.0 1207.3L2113.9 1199.8L2113.6 1192.3L2113.2 1184.8L2112.7 1177.4L2112.1 1169.9L2111.3 1162.4L2110.4 1155.0L2109.4 1147.6L2108.2 1140.2L2106.9 1132.8L2105.5 1125.4L2104.0 1118.1L2102.3 1110.8L2100.5 1103.5L2098.6 1096.2L2096.5 1089.0L2094.4 1081.9L2092.0 1074.7L2089.6 1067.6L2087.1 1060.6L2084.4 1053.6L2081.6 1046.6L2078.7 1039.7L2075.6 1032.9L2072.5 1026.0L2069.2 1019.3L2065.8 1012.6L2062.3 1006.0L2058.7 999.4L2055.0 992.9L2051.1 986.5L2047.2 980.1L2043.1 973.8L2038.9 967.6L2034.6 961.5L2030.2 955.4L2025.7 949.4L2021.1 943.5L2016.4 937.6L2011.6 931.9L2006.7 926.2L2001.7 920.6L1996.6 915.1L1991.4 909.7L1986.1 904.4L1980.7 899.2L1975.2 894.1L1969.7 889.0L1964.0 884.1L1958.3 879.3L1952.5 874.5L1946.6 869.9L1940.6 865.4L1934.5 861.0L1928.4 856.7L1922.2 852.5L1915.9 848.4L1909.6 844.4L1903.1 840.5L1896.7 836.7L1890.1 833.1L1883.5 829.5L1876.8 826.1L1870.1 822.8L1863.3 819.6L1856.5 816.6L1849.6 813.6L1842.6 810.8L1835.6 808.1L1828.6 805.5L1821.5 803.1L1814.4 800.7L1807.2 798.5L1800.0 796.5L1792.7 794.5L1785.5 792.7L1778.2 791.0L1770.8 789.4L1763.5 787.9L1756.1 786.6L1748.7 785.4L1741.3 784.4L1733.8 783.4L1726.4 782.6L1718.9 782.0L1711.4 781.4L1703.9 781.0L1696.4 780.8L1688.9 780.6L1681.4 780.6L1673.9 780.7L1666.5 781.0L1659.0 781.3L1651.5 781.8L1644.0 782.5L1636.5 783.2L1629.1 784.1L1621.7 785.2L1614.3 786.3L1606.9 787.6L1599.5 789.0L1592.2 790.6L1584.9 792.2L1577.6 794.0L1570.3 796.0L1563.1 798.0L1555.9 800.2L1548.8 802.5L1541.7 804.9L1534.6 807.5L1527.6 810.2L1520.7 813.0L1513.8 815.9L1506.9 818.9L1500.1 822.1L1493.4 825.3L1486.7 828.7L1480.0 832.2L1473.5 835.9L1467.0 839.6L1460.5 843.4L1454.2 847.4L1447.9 851.5L1441.6 855.7L1435.5 859.9L1429.4 864.3L1423.4 868.8L1417.5 873.4L1411.6 878.2L1405.9 883.0L1400.2 887.9L1394.6 892.9L1389.1 898.0L1383.7 903.2L1378.4 908.5L1373.2 913.9L1368.1 919.3L1363.0 924.9L1358.1 930.6L1353.3 936.3L1348.5 942.1L1343.9 948.0L1339.4 954.0L1335.0 960.1L1330.7 966.2L1326.4 972.4L1322.3 978.7L1318.4 985.0L1314.5 991.5L1310.7 997.9L1307.1 1004.5L1303.5 1011.1L1300.1 1017.8L1296.8 1024.5L1293.6 1031.3L1290.6 1038.2L1287.6 1045.1L1284.8 1052.0L1282.1 1059.0L1279.5 1066.1L1277.1 1073.1L1274.7 1080.3L1272.5 1087.4L1270.4 1094.7L1268.5 1101.9L1266.7 1109.2L1265.0 1116.5L1263.4 1123.8L1261.9 1131.2L1260.6 1138.6L1259.4 1146.0L1258.4 1153.4L1257.4 1160.8L1256.6 1168.3L1256.0 1175.8L1255.4 1183.2L1255.0 1190.7L1254.8 1198.2L1254.6 1205.7ZM1681.4 780.8L1683.2 780.9L1685.0 781.2L1686.8 781.5L1688.6 781.9L1690.3 782.4L1692.2 783.0L1694.0 783.7L1695.8 784.4L1697.6 785.2L1699.5 786.2L1701.3 787.1L1703.1 788.2L1705.0 789.4L1706.9 790.6L1708.7 792.0L1710.6 793.4L1712.5 794.9L1714.3 796.5L1716.2 798.1L1718.1 799.9L1720.0 801.7L1721.9 803.7L1723.8 805.7L1725.7 807.8L1727.6 810.0L1729.4 812.3L1731.3 814.7L1733.2 817.1L1735.1 819.7L1737.0 822.3L1738.9 825.0L1740.8 827.8L1742.7 830.7L1744.6 833.7L1746.5 836.8L1748.3 840.0L1750.2 843.2L1752.1 846.6L1753.9 850.0L1755.8 853.5L1757.6 857.1L1759.5 860.8L1761.3 864.5L1763.1 868.4L1764.9 872.3L1766.8 876.3L1768.6 880.4L1770.3 884.6L1772.1 888.9L1773.9 893.2L1775.6 897.7L1777.4 902.2L1779.1 906.8L1780.8 911.4L1782.5 916.2L1784.2 921.0L1785.9 925.9L1787.6 930.9L1789.2 935.9L1790.8 941.0L1792.4 946.2L1794.0 951.5L1795.6 956.8L1797.2 962.2L1798.7 967.7L1800.2 973.2L1801.7 978.8L1803.2 984.5L1804.6 990.2L1806.1 996.0L1807.5 1001.8L1808.9 1007.7L1810.2 1013.7L1811.6 1019.7L1812.9 1025.7L1814.2 1031.8L1815.5 1038.0L1816.7 1044.2L1817.9 1050.5L1819.1 1056.8L1820.3 1063.1L1821.4 1069.5L1822.5 1076.0L1823.6 1082.4L1824.7 1088.9L1825.7 1095.5L1826.7 1102.0L1827.7 1108.6L1828.6 1115.3L1829.5 1121.9L1830.4 1128.6L1831.3 1135.3L1832.1 1142.0L1832.9 1148.8L1833.6 1155.5L1834.4 1162.3L1835.0 1169.1L1835.7 1175.9L1836.3 1182.7L1836.9 1189.5L1837.5 1196.4L1838.0 1203.2L1838.5 1210.0L1839.0 1216.8L1839.4 1223.7L1839.8 1230.5L1840.2 1237.3L1840.5 1244.1L1840.8 1250.9L1841.1 1257.7L1841.3 1264.4L1841.5 1271.2L1841.7 1277.9L1841.8 1284.6L1841.9 1291.3L1842.0 1297.9L1842.0 1304.6L1842.0 1311.2L1842.0 1317.8L1841.9 1324.3L1841.8 1330.8L1841.7 1337.3L1841.5 1343.7L1841.3 1350.1L1841.0 1356.5L1840.8 1362.8L1840.5 1369.0L1840.1 1375.3L1839.8 1381.4L1839.4 1387.5L1839.0 1393.6L1838.5 1399.6L1838.0 1405.6L1837.5 1411.5L1836.9 1417.4L1836.3 1423.2L1835.7 1428.9L1835.1 1434.6L1834.4 1440.2L1833.7 1445.7L1833.0 1451.2L1832.2 1456.6L1831.4 1462.0L1830.6 1467.2L1829.8 1472.4L1828.9 1477.6L1828.0 1482.6L1827.1 1487.6L1826.1 1492.6L1825.2 1497.4L1824.2 1502.2L1823.1 1506.9L1822.1 1511.5L1821.0 1516.0L1819.9 1520.5L1818.8 1524.8L1817.7 1529.1L1816.5 1533.3L1815.3 1537.5L1814.1 1541.5L1812.9 1545.5L1811.6 1549.4L1810.3 1553.2L1809.1 1556.9L1807.7 1560.5L1806.4 1564.1L1805.1 1567.6L1803.7 1570.9L1802.3 1574.2L1800.9 1577.4L1799.5 1580.5L1798.1 1583.6L1796.6 1586.5L1795.2 1589.4L1793.7 1592.2L1792.2 1594.9L1790.7 1597.5L1789.2 1600.0L1787.7 1602.4L1786.1 1604.7L1784.6 1607.0L1783.0 1609.2L1781.4 1611.2L1779.8 1613.2L1778.2 1615.1L1776.6 1617.0L1775.0 1618.7L1773.4 1620.3L1771.7 1621.9L1770.1 1623.4L1768.4 1624.8L1766.8 1626.1L1765.1 1627.3L1763.4 1628.5L1761.8 1629.5L1760.1 1630.5L1758.4 1631.4L1756.7 1632.2L1755.0 1633.0L1753.3 1633.6L1751.6 1634.2L1749.9 1634.7L1748.2 1635.1L1746.4 1635.5L1744.7 1635.7L1743.0 1635.9L1741.3 1636.0L1739.6 1636.0L1737.8 1636.0L1736.1 1635.8L1734.4 1635.6L1732.6 1635.4L1730.9 1635.0L1729.2 1634.6L1727.5 1634.1L1725.8 1633.6L1724.0 1632.9L1722.3 1632.2L1720.6 1631.4L1718.9 1630.6L1717.2 1629.7L1715.5 1628.7L1713.7 1627.7L1712.0 1626.6L1710.3 1625.4L1708.7 1624.1L1707.0 1622.8L1705.3 1621.5L1703.6 1620.0L1701.9 1618.5L1700.2 1617.0L1698.6 1615.3L1696.9 1613.7L1695.3 1611.9L1693.6 1610.1L1692.0 1608.3L1690.3 1606.4L1688.7 1604.4L1687.1 1602.4L1687.1 1602.4L1683.5 1603.9L1679.8 1605.5L1676.2 1606.9L1672.5 1608.3L1668.8 1609.6L1665.1 1610.9L1661.4 1612.1L1657.7 1613.2L1654.0 1614.3L1650.3 1615.3L1646.5 1616.3L1642.8 1617.2L1639.1 1618.0L1635.3 1618.7L1631.5 1619.4L1627.8 1620.0L1624.0 1620.6L1620.2 1621.1L1616.4 1621.5L1612.6 1621.8L1608.9 1622.1L1605.1 1622.3L1601.3 1622.5L1597.5 1622.5L1593.7 1622.5L1589.9 1622.4L1586.1 1622.3L1582.3 1622.1L1578.5 1621.8L1574.8 1621.4L1571.0 1621.0L1567.2 1620.5L1563.4 1619.9L1559.7 1619.2L1555.9 1618.5L1552.2 1617.7L1548.5 1616.8L1544.7 1615.8L1541.0 1614.8L1537.3 1613.6L1533.6 1612.4L1529.9 1611.2L1526.3 1609.8L1522.6 1608.4L1519.0 1606.9L1515.3 1605.3L1511.7 1603.7L1508.1 1601.9L1504.6 1600.1L1501.0 1598.2L1497.5 1596.2L1494.0 1594.2L1490.5 1592.1L1487.0 1589.9L1483.6 1587.6L1480.1 1585.2L1476.7 1582.8L1473.4 1580.3L1470.0 1577.7L1466.7 1575.0L1463.4 1572.3L1460.1 1569.4L1456.9 1566.5L1453.7 1563.5L1450.5 1560.5L1447.4 1557.3L1444.3 1554.1L1441.2 1550.8L1438.2 1547.5L1435.2 1544.0L1432.2 1540.5L1429.3 1536.9L1426.4 1533.2L1423.5 1529.5L1420.7 1525.7L1418.0 1521.8L1415.2 1517.8L1412.5 1513.8L1409.9 1509.7L1407.3 1505.5L1404.7 1501.3L1402.2 1497.0L1399.8 1492.6L1397.4 1488.1L1395.0 1483.6L1392.7 1479.0L1390.4 1474.4L1388.2 1469.6L1386.0 1464.9L1383.9 1460.0L1381.9 1455.1L1379.9 1450.1L1377.9 1445.1L1376.0 1440.0L1374.2 1434.9L1372.4 1429.7L1370.6 1424.4L1369.0 1419.1L1367.4 1413.7L1365.8 1408.3L1364.3 1402.8L1362.9 1397.3L1361.5 1391.7L1360.2 1386.0L1358.9 1380.4L1357.7 1374.6L1356.6 1368.9L1355.5 1363.1L1354.5 1357.2L1353.6 1351.3L1352.7 1345.4L1351.9 1339.4L1351.2 1333.4L1350.5 1327.4L1349.9 1321.3L1349.3 1315.2L1348.9 1309.0L1348.5 1302.8L1348.1 1296.6L1347.8 1290.4L1347.6 1284.2L1347.5 1277.9L1347.4 1271.6L1347.4 1265.3L1347.5 1259.0L1347.6 1252.6L1347.8 1246.2L1348.0 1239.9L1348.4 1233.5L1348.8 1227.1L1349.3 1220.7L1349.8 1214.3L1350.4 1207.8L1351.1 1201.4L1351.8 1195.0L1352.6 1188.6L1353.5 1182.1L1354.5 1175.7L1355.5 1169.3L1356.6 1162.9L1357.7 1156.5L1358.9 1150.1L1360.2 1143.7L1361.5 1137.4L1363.0 1131.0L1364.4 1124.7L1366.0 1118.4L1367.6 1112.1L1369.2 1105.8L1371.0 1099.5L1372.8 1093.3L1374.6 1087.1L1376.6 1081.0L1378.5 1074.8L1380.6 1068.7L1382.7 1062.6L1384.8 1056.6L1387.1 1050.6L1389.3 1044.6L1391.7 1038.7L1394.1 1032.8L1396.5 1027.0L1399.0 1021.2L1401.6 1015.4L1404.2 1009.7L1406.9 1004.0L1409.6 998.4L1412.4 992.9L1415.2 987.4L1418.1 981.9L1421.0 976.5L1423.9 971.2L1427.0 965.9L1430.0 960.6L1433.1 955.5L1436.3 950.4L1439.5 945.3L1442.7 940.3L1446.0 935.4L1449.3 930.6L1452.7 925.8L1456.1 921.0L1459.5 916.4L1463.0 911.8L1466.5 907.3L1470.0 902.8L1473.6 898.5L1477.2 894.2L1480.8 889.9L1484.5 885.8L1488.2 881.7L1492.0 877.7L1495.7 873.7L1499.5 869.9L1503.3 866.1L1507.1 862.4L1511.0 858.8L1514.9 855.2L1518.8 851.8L1522.7 848.4L1526.7 845.1L1530.6 841.9L1534.6 838.7L1538.6 835.7L1542.6 832.7L1546.6 829.8L1550.7 827.0L1554.7 824.3L1558.8 821.6L1562.9 819.0L1566.9 816.6L1571.0 814.2L1575.1 811.8L1579.2 809.6L1583.4 807.5L1587.5 805.4L1591.6 803.4L1595.7 801.5L1599.8 799.7L1604.0 798.0L1608.1 796.3L1612.2 794.8L1616.4 793.3L1620.5 791.9L1624.6 790.6L1628.7 789.3L1632.8 788.2L1636.9 787.1L1641.0 786.1L1645.1 785.2L1649.2 784.4L1653.3 783.7L1657.3 783.0L1661.4 782.4L1665.4 781.9L1669.4 781.5L1673.5 781.2L1677.5 780.9L1681.4 780.8Z"/></clipPath><radialGradient id="hl"><stop offset="0" stop-color="#fffb8c"/><stop offset="0.35" stop-color="#fff27a" stop-opacity="0.94"/><stop offset="0.62" stop-color="#ffc445" stop-opacity="0.42"/><stop offset="1" stop-color="#ffa030" stop-opacity="0"/></radialGradient><filter id="bl" x="-3%" y="-3%" width="106%" height="106%"><feGaussianBlur stdDeviation="4"/><feComponentTransfer><feFuncA type="linear" slope="30"/></feComponentTransfer></filter></defs><path d="M1144.5 1572.2L1082.2 678.9M1144.5 1572.2L1937.4 1474.8M1144.5 1572.2L1236.1 2096.6M1082.2 678.9L1954.8 678.8M1082.2 678.9L1144.8 644.0M1937.4 1474.8L1954.8 678.8M1937.4 1474.8L2424.4 1861.9M1954.8 678.8L2522.8 650.4M1236.1 2096.6L1144.8 644.0M1236.1 2096.6L2424.4 1861.9M1144.8 644.0L2522.8 650.4M2424.4 1861.9L2522.8 650.4" stroke="#a4a4a4" stroke-width="1.6" fill="none"/><path d="M1115.9 1155.9L1256.8 1146.7M1160.1 1144.3L1269.0 1422.1M1121.0 1174.2L1258.1 1164.9M1408.5 1154.7L1417.7 1154.1M1750.1 1131.5L1758.4 1130.9M1251.6 1138.4L1258.9 1150.1M1123.7 1184.0L1253.9 1175.0M1824.0 1135.5L1832.3 1134.9M1126.6 1194.2L1259.5 1184.8M1132.7 1216.1L1250.6 1207.4M1135.9 1227.9L1256.5 1218.7M1139.3 1240.2L1251.8 1231.5M2109.3 1165.3L2126.4 1163.9M1146.7 1266.7L1253.1 1258.1M2114.0 1188.4L2176.5 1183.3M1150.7 1281.0L1259.8 1271.9M2111.9 1201.2L2203.2 1193.7M1154.9 1296.1L1266.8 1286.5M2109.6 1214.8L2231.2 1204.5M1164.0 1328.8L1269.2 1319.4M2114.9 1243.5L2291.2 1227.7M1809.2 1132.8L1812.4 1134.4M2105.3 1280.8L2195.2 1325.7M1169.0 1346.7L1277.2 1336.7M2112.6 1259.7L2323.5 1240.2M2111.5 1253.3L2252.3 1319.8M1174.2 1365.6L1285.6 1355.1M2110.1 1276.8L2357.4 1253.3M2111.7 1225.9L2308.3 1313.9M1185.8 1407.2L1289.5 1396.7M2104.7 1314.6L2430.7 1281.7M2112.0 1178.8L2417.3 1302.6" stroke="#d8d8d8" stroke-width="1.4" fill="none"/><path d="M1118.4 1164.9L1262.1 1155.3M1541.8 1136.6L1610.5 1132.0M1206.2 1141.3L1255.5 1238.9M1129.6 1204.9L1255.1 1195.9M1159.3 1312.0L1261.7 1303.1M2117.1 1228.4L2260.5 1215.8M2104.7 1314.6L2137.1 1331.8M1179.8 1385.8L1294.6 1374.5M2107.5 1295.1L2393.1 1267.1M2111.9 1201.2L2363.3 1308.2" stroke="#606060" stroke-width="1.7" fill="none"/><path d="M1113.5 1147.2L1260.7 1137.8M1113.5 1147.2L1192.2 1430.1M1192.2 1430.1L1314.3 1417.4M2089.8 1336.7L2470.4 1297.1M2112.2 1158.4L2470.4 1297.1" stroke="#cfcfcf" stroke-width="1.7" fill="none" stroke-dasharray="9 3"/><path d="M1575.8 1133.9L1576.5 1134.4M1142.9 1253.1L1255.8 1244.2M2113.4 1176.4L2133.5 1174.8M1687.7 1695.1L1687.1 1603.0M1681.4 780.6L1681.0 711.6" stroke="#6e6e6e" stroke-width="2.4" fill="none"/><g clip-path="url(#cw)"><g filter="url(#bl)"><path fill="#3c230a" stroke="#3c230a" stroke-width="1" d="M1701 781l0 0 19 1 1 0zM1701 781l-1 0 18 1 2 0zM1700 781l-1 0 16 1 3 0zM1699 781l-2 0 16 1 2 0zM1697 781l-1 0 14 1 3 0zM1696 781l-1 0 13 1 2 0zM1695 781l-2 0 11 1 4 0zM1693 781l-2 0 10 1 3 0zM1691 781l-1 0 8 1 3 0zM1690 781l-2 0 6 1 4 0zM1688 781l-2 0 5 1 3 0zM1686 781l-2 0 3 1 4 0zM1684 781l-1 0 1 1 3 0zM1683 781l-2 0 -1 1 4 0zM1681 781l-2 0 -3 1 4 0zM1679 781l-2 0 -4 1 3 0zM1677 781l-2 0 -6 1 4 0zM1675 781l-2 0 -7 1 3 0zM1673 781l-1 0 -10 1 4 0zM1672 781l-2 0 -11 1 3 0zM1670 781l-1 0 -13 1 3 0zM1669 781l-2 0 -14 1 3 0zM1667 781l-1 0 -16 1 3 0zM1666 781l-1 0 -17 1 2 0zM1665 781l-2 0 -17 1 2 0zM1663 781l-1 0 -18 2 2 -1zM1662 781l0 0 -20 2 2 0zM1713 782l-3 0 14 2 4 0zM1710 782l-2 0 12 2 4 0zM1708 782l-4 0 12 2 4 0zM1704 782l-3 0 10 2 5 0zM1701 782l-3 0 8 2 5 0zM1698 782l-4 0 7 2 5 0zM1694 782l-3 0 4 2 6 0zM1691 782l-4 0 3 2 5 0zM1687 782l-3 0 1 2 5 0zM1684 782l-4 0 -1 2 6 0zM1680 782l-4 0 -2 2 5 0zM1676 782l-3 0 -5 2 6 0zM1673 782l-4 0 -6 2 5 0zM1669 782l-3 0 -8 2 5 0zM1666 782l-4 0 -9 2 5 0zM1662 782l-3 0 -11 2 5 0zM1659 782l-3 0 -13 2 5 0zM1656 782l-3 0 -14 3 4 -1zM1653 782l-3 0 -15 3 4 0zM1650 782l-2 0 -17 3 4 0zM1648 782l-2 0 -18 3 3 0zM1646 782l-2 1 -19 2 3 0zM1644 783l-2 0 -19 2 2 0zM1642 783l-1 0 -20 2 2 0zM1641 783l-1 0 -21 3 2 -1zM1720 784l-4 0 11 3 6 0zM1716 784l-5 0 9 3 7 0zM1711 784l-5 0 8 3 6 0zM1706 784l-5 0 6 3 7 0zM1701 784l-6 0 5 3 7 0zM1695 784l-5 0 3 3 7 0zM1690 784l-5 0 1 3 7 0zM1685 784l-6 0 -1 3 8 0zM1679 784l-5 0 -3 3 7 0zM1674 784l-6 0 -4 3 7 0zM1668 784l-5 0 -6 3 7 0zM1663 784l-5 0 -8 3 7 0zM1658 784l-5 0 -9 3 6 0zM1653 784l-5 0 -11 3 7 0zM1648 784l-5 0 -12 4 6 -1zM1643 784l-4 1 -13 3 5 0zM1639 785l-4 0 -15 3 6 0zM1635 785l-4 0 -16 3 5 0zM1631 785l-3 0 -17 3 4 0zM1628 785l-3 0 -18 4 4 -1zM1625 785l-2 0 -19 4 3 0zM1623 785l-2 0 -20 4 3 0zM1621 785l-2 1 -20 3 2 0zM1619 786l-1 0 -21 4 2 -1zM1720 787l-6 0 7 4 8 0zM1714 787l-7 0 6 4 8 0zM1707 787l-7 0 4 4 9 0zM1700 787l-7 0 2 4 9 0zM1693 787l-7 0 1 4 8 0zM1686 787l-8 0 0 4 9 0zM1678 787l-7 0 -2 4 9 0zM1671 787l-7 0 -4 4 9 0zM1664 787l-7 0 -5 4 8 0zM1657 787l-7 0 -7 4 9 0zM1650 787l-6 0 -9 4 8 0zM1644 787l-7 0 -10 5 8 -1zM1637 787l-6 1 -11 4 7 0zM1631 788l-5 0 -13 4 7 0zM1626 788l-6 0 -14 4 7 0zM1620 788l-5 0 -15 5 6 -1zM1615 788l-4 0 -17 5 6 0zM1611 788l-4 1 -18 4 5 0zM1607 789l-3 0 -19 4 4 0zM1604 789l-3 0 -20 5 4 -1zM1601 789l-2 0 -21 5 3 0zM1599 789l-2 1 -21 4 2 0zM1597 790l-1 0 -21 5 1 -1zM1729 791l-8 0 8 5 9 0zM1721 791l-8 0 6 5 10 0zM1713 791l-9 0 4 5 11 0zM1704 791l-9 0 3 5 10 0zM1695 791l-8 0 1 5 10 0zM1687 791l-9 0 -1 5 11 0zM1678 791l-9 0 -2 5 10 0zM1669 791l-9 0 -4 5 11 0zM1660 791l-8 0 -6 5 10 0zM1652 791l-9 0 -7 5 10 0zM1643 791l-8 0 -9 6 10 -1zM1635 791l-8 1 -10 5 9 0zM1585 793l-4 1 -19 5 5 0zM1738 796l-9 0 7 6 11 0zM1729 796l-10 0 5 5 12 1zM1719 796l-11 0 4 5 12 0zM1708 796l-10 0 3 5 11 0zM1698 796l-10 0 1 5 12 0zM1688 796l-11 0 0 6 12 -1zM1677 796l-10 0 -2 6 12 0zM1667 796l-11 0 -3 6 12 0zM1736 802l-12 -1 6 7 12 0zM1724 801l-12 0 4 7 14 0zM1712 801l-11 0 2 7 13 0zM1701 801l-12 0 1 7 13 0zM1689 801l-12 1 -1 6 14 0zM1742 808l-12 0 5 8 14 0zM1730 808l-14 0 4 8 15 0zM1716 808l-13 0 2 8 15 0zM1703 808l-13 0 0 8 15 0zM1749 816l-14 0 5 8 15 0zM1735 816l-15 0 4 8 16 0zM1720 816l-15 0 3 8 16 0zM1755 824l-15 0 5 9 16 0zM1740 824l-16 0 3 9 18 0zM1761 833l-16 0 4 10 18 0z"/><path fill="#41230a" stroke="#41230a" stroke-width="1" d="M1627 792l-7 0 -12 5 9 0zM1620 792l-7 0 -13 5 8 0zM1613 792l-7 0 -14 6 8 -1zM1606 792l-6 1 -15 5 7 0zM1600 793l-6 0 -16 5 7 0zM1594 793l-5 0 -17 6 6 -1zM1589 793l-4 0 -18 6 5 0zM1656 796l-10 0 -5 6 12 0zM1646 796l-10 0 -7 6 12 0zM1677 802l-12 0 -3 6 14 0zM1690 808l-14 0 -1 8 15 0zM1745 833l-18 0 4 9 18 1zM1767 843l-18 0 4 10 20 0z"/><path fill="#46280a" stroke="#46280a" stroke-width="1" d="M1636 796l-10 1 -8 6 11 -1zM1626 797l-9 0 -10 6 11 0zM1676 808l-14 0 -2 8 15 0z"/><path fill="#4b280a" stroke="#4b280a" stroke-width="1" d="M1617 797l-9 0 -11 6 10 0zM1608 797l-8 0 -13 6 10 0zM1600 797l-8 1 -14 6 9 -1zM1592 798l-7 0 -15 6 8 0zM1585 798l-7 0 -16 7 8 -1zM1578 798l-6 1 -17 6 7 0zM1653 802l-12 0 -5 7 13 0zM1641 802l-12 0 -6 7 13 0zM1662 808l-13 1 -3 7 14 0zM1690 816l-15 0 0 8 16 0zM1708 824l-17 0 1 9 18 0zM1727 833l-17 0 2 9 19 0zM1749 843l-18 -1 3 11 19 0zM1778 864l-20 0 3 11 22 1z"/><path fill="#46230a" stroke="#46230a" stroke-width="1" d="M1665 802l-12 0 -4 7 13 -1zM1705 816l-15 0 1 8 17 0zM1724 824l-16 0 2 9 17 0zM1773 853l-20 0 5 11 20 0z"/><path fill="#50280a" stroke="#50280a" stroke-width="1" d="M1629 802l-11 1 -8 6 13 0zM1753 853l-19 0 3 11 21 0z"/><path fill="#502d0a" stroke="#502d0a" stroke-width="1" d="M1618 803l-11 0 -9 7 12 -1zM1649 809l-13 0 -5 7 15 0zM1675 816l-15 0 -1 8 16 0zM1691 824l-16 0 -1 9 18 0zM1731 842l-19 0 2 11 20 0zM1783 876l-22 -1 4 13 23 0z"/><path fill="#552d0a" stroke="#552d0a" stroke-width="1" d="M1607 803l-10 0 -11 7 12 0zM1597 803l-10 0 -12 8 11 -1zM1587 803l-9 1 -13 7 10 0zM1578 804l-8 0 -15 7 10 0zM1570 804l-8 1 -15 7 8 -1zM1636 809l-13 0 -6 8 14 -1zM1660 816l-14 0 -4 8 17 0zM1710 833l-18 0 1 9 19 0zM1758 864l-21 0 3 11 21 0zM1788 888l-23 0 4 12 23 1z"/><path fill="#5a2d0a" stroke="#5a2d0a" stroke-width="1" d="M1623 809l-13 0 -7 8 14 0zM1675 824l-16 0 -2 9 17 0zM1734 853l-20 0 2 11 21 0z"/><path fill="#5a320a" stroke="#5a320a" stroke-width="1" d="M1610 809l-12 1 -9 7 14 0zM1646 816l-15 0 -5 9 16 -1zM1692 833l-18 0 0 9 19 0zM1712 842l-19 0 1 11 20 0zM1761 875l-21 0 2 12 23 1zM1792 901l-23 -1 3 13 24 1z"/><path fill="#5f320a" stroke="#5f320a" stroke-width="1" d="M1598 810l-12 0 -10 8 13 -1zM1586 810l-11 1 -11 7 12 0zM1575 811l-10 0 -13 8 12 -1zM1565 811l-10 0 -14 9 11 -1zM1555 811l-8 1 -15 8 9 0zM1631 816l-14 1 -6 8 15 0zM1659 824l-17 0 -3 9 18 0zM1674 833l-17 0 -2 10 19 -1zM1714 853l-20 0 0 11 22 0zM1737 864l-21 0 1 11 23 0zM1765 888l-23 -1 3 13 24 0zM1796 914l-24 -1 3 14 25 1z"/><path fill="#64320a" stroke="#64320a" stroke-width="1" d="M1617 817l-14 0 -8 8 16 0zM1693 842l-19 0 -1 11 21 0z"/><path fill="#64370a" stroke="#64370a" stroke-width="1" d="M1603 817l-14 0 -9 9 15 -1zM1642 824l-16 1 -4 9 17 -1zM1740 875l-23 0 2 12 23 0z"/><path fill="#69370a" stroke="#69370a" stroke-width="1" d="M1589 817l-13 1 -10 8 14 0zM1576 818l-12 0 -11 9 13 -1zM1564 818l-12 1 -12 9 13 -1zM1626 825l-15 0 -6 9 17 0zM1657 833l-18 0 -3 10 19 0zM1674 842l-19 1 -2 10 20 0zM1694 853l-21 0 0 11 21 0zM1716 864l-22 0 1 11 22 0zM1769 900l-24 0 2 13 25 0zM1800 928l-25 -1 2 14 26 1z"/><path fill="#6e370a" stroke="#6e370a" stroke-width="1" d="M1552 819l-11 1 -13 8 12 0zM1541 820l-9 0 -15 9 11 -1zM1611 825l-16 0 -7 10 17 -1zM1742 887l-23 0 2 13 24 0zM1803 942l-26 -1 3 15 26 0z"/><path fill="#6e3c0a" stroke="#6e3c0a" stroke-width="1" d="M1595 825l-15 1 -8 9 16 0zM1639 833l-17 1 -4 9 18 0zM1655 843l-19 0 -3 10 20 0zM1717 875l-22 0 1 12 23 0zM1772 913l-25 0 2 14 26 0z"/><path fill="#733c0f" stroke="#733c0f" stroke-width="1" d="M1580 826l-14 0 -9 10 15 -1zM1566 826l-13 1 -11 9 15 0zM1622 834l-17 0 -6 10 19 -1zM1673 853l-20 0 -1 11 21 0zM1694 864l-21 0 0 11 22 0zM1745 900l-24 0 1 13 25 0zM1775 927l-26 0 2 14 26 0zM1806 956l-26 0 2 14 27 1zM1767 1632l16 -4 -9 2 -15 3zM1783 1628l15 -3 -11 2 -13 3z"/><path fill="#783c0f" stroke="#783c0f" stroke-width="1" d="M1553 827l-13 1 -12 9 14 -1zM1540 828l-12 0 -13 10 13 -1zM1605 834l-17 1 -6 9 17 0zM1636 843l-18 0 -4 11 19 -1zM1719 887l-23 0 0 13 25 0z"/><path fill="#78410f" stroke="#78410f" stroke-width="1" d="M1588 835l-16 0 -8 10 18 -1zM1653 853l-20 0 -2 11 21 0zM1673 864l-21 0 -2 11 23 0zM1695 875l-22 0 -1 12 24 0zM1747 913l-25 0 2 13 25 1zM1777 941l-26 0 2 14 27 1zM1809 971l-27 -1 2 16 28 1zM1787 1627l13 -4 -13 1 -11 4z"/><path fill="#7d410f" stroke="#7d410f" stroke-width="1" d="M1572 835l-15 1 -9 10 16 -1zM1557 836l-15 0 -10 11 16 -1zM1618 843l-19 1 -5 10 20 0zM1633 853l-19 1 -4 11 21 -1zM1721 900l-25 0 1 13 25 0zM1812 987l-28 -1 2 15 28 1zM1759 1633l15 -3 -10 1 -13 3zM1774 1630l13 -3 -11 1 -12 3z"/><path fill="#82410f" stroke="#82410f" stroke-width="1" d="M1542 836l-14 1 -11 11 15 -1zM1599 844l-17 0 -7 11 19 -1zM1696 887l-24 0 0 13 24 0zM1749 927l-25 -1 1 14 26 1zM1780 956l-27 -1 2 15 27 0z"/><path fill="#82460f" stroke="#82460f" stroke-width="1" d="M1528 837l-13 1 -12 10 14 0zM1582 844l-18 1 -7 11 18 -1zM1652 864l-21 0 -3 12 22 -1zM1673 875l-23 0 -1 13 23 -1zM1814 1002l-28 -1 2 16 28 1zM1848 1052l-29 -2 2 17 28 2zM1744 1636l15 -3 -8 1 -13 2zM1776 1628l11 -4 -12 1 -10 3zM1787 1624l11 -3 -14 1 -9 3z"/><path fill="#87460f" stroke="#87460f" stroke-width="1" d="M1564 845l-16 1 -9 11 18 -1zM1614 854l-20 0 -5 11 21 0zM1631 864l-21 1 -4 11 22 0zM1696 900l-24 0 0 13 25 0zM1722 913l-25 0 1 13 26 0zM1751 941l-26 -1 1 15 27 0zM1782 970l-27 0 1 15 28 1zM1816 1018l-28 -1 1 16 29 1zM1751 1634l13 -3 -10 0 -11 2zM1764 1631l12 -3 -11 0 -11 3z"/><path fill="#8c460f" stroke="#8c460f" stroke-width="1" d="M1548 846l-16 1 -10 10 17 0zM1594 854l-19 1 -6 11 20 -1zM1650 875l-22 1 -2 12 23 0zM1672 887l-23 1 -1 12 24 0zM1849 1069l-28 -2 0 17 29 2z"/><path fill="#8c4b0f" stroke="#8c4b0f" stroke-width="1" d="M1532 847l-15 1 -11 11 16 -2zM1517 848l-14 0 -12 12 15 -1zM1575 855l-18 1 -7 11 19 -1zM1724 926l-26 0 0 14 27 0zM1753 955l-27 0 1 14 28 1zM1784 986l-28 -1 2 15 28 1zM1738 1636l13 -2 -8 -1 -12 2zM1775 1625l9 -3 -14 0 -8 3zM1784 1622l8 -4 -15 1 -7 3zM1792 1618l7 -4 -16 1 -6 4zM1799 1614l7 -4 -17 1 -6 4zM1806 1610l5 -5 -17 3 -5 3z"/><path fill="#914b0f" stroke="#914b0f" stroke-width="1" d="M1557 856l-18 1 -8 11 19 -1zM1610 865l-21 0 -4 12 21 -1zM1628 876l-22 0 -3 13 23 -1zM1649 888l-23 0 -2 13 24 -1zM1672 900l-24 0 -1 13 25 0zM1697 913l-25 0 0 13 26 0zM1725 940l-27 0 1 14 27 1zM1786 1001l-28 -1 1 16 29 1zM1818 1034l-29 -1 1 16 29 1zM1850 1086l-29 -2 1 17 29 2zM1743 1633l11 -2 -10 -1 -9 2zM1754 1631l11 -3 -12 -1 -9 3zM1765 1628l10 -3 -13 0 -9 2z"/><path fill="#964b0f" stroke="#964b0f" stroke-width="1" d="M1539 857l-17 0 -9 12 18 -1zM1589 865l-20 1 -5 12 21 -1zM1755 970l-28 -1 1 15 28 1zM1819 1050l-29 -1 1 16 30 2zM1851 1103l-29 -2 0 17 29 2z"/><path fill="#96500f" stroke="#96500f" stroke-width="1" d="M1522 857l-16 2 -10 11 17 -1zM1506 859l-15 1 -11 11 16 -1zM1569 866l-19 1 -7 12 21 -1zM1606 876l-21 1 -5 12 23 0zM1698 926l-26 0 -1 14 27 0zM1788 1017l-29 -1 1 16 29 1zM1731 1635l12 -2 -8 -1 -10 1zM1762 1625l8 -3 -14 -1 -7 2zM1770 1622l7 -3 -15 -1 -6 3zM1777 1619l6 -4 -16 0 -5 3zM1783 1615l6 -4 -17 1 -5 3zM1789 1611l5 -3 -18 1 -4 3z"/><path fill="#9b500f" stroke="#9b500f" stroke-width="1" d="M1550 867l-19 1 -8 12 20 -1zM1626 888l-23 1 -3 12 24 0zM1648 900l-24 1 -2 13 25 -1zM1672 913l-25 0 -1 14 26 -1zM1726 955l-27 -1 0 15 28 0zM1756 985l-28 -1 1 16 29 0zM1821 1067l-30 -2 1 17 29 2zM1851 1120l-29 -2 0 17 29 2zM1823 1582l-1 -5 -18 6 0 5zM1735 1632l9 -2 -9 -3 -8 2zM1744 1630l9 -3 -11 -2 -7 2zM1753 1627l9 -2 -13 -2 -7 2zM1794 1608l4 -4 -19 2 -3 3zM1798 1604l3 -4 -19 3 -3 3zM1801 1600l2 -4 -19 3 -2 4z"/><path fill="#a05014" stroke="#a05014" stroke-width="1" d="M1531 868l-18 1 -9 12 19 -1zM1725 1633l10 -1 -8 -3 -9 1z"/><path fill="#a05514" stroke="#a05514" stroke-width="1" d="M1513 869l-17 1 -9 12 17 -1zM1496 870l-16 1 -10 13 17 -2zM1564 878l-21 1 -6 12 21 -1zM1603 889l-23 0 -4 13 24 -1zM1672 926l-26 1 -1 14 26 -1zM1698 940l-27 0 0 15 28 -1zM1727 969l-28 0 0 15 29 0zM1758 1000l-29 0 1 15 29 1zM1821 1084l-29 -2 0 17 30 2zM1851 1154l-29 -2 -1 17 29 3zM1821 1573l-3 -5 -18 7 2 4zM1804 1592l0 -4 -19 4 0 4zM1749 1623l7 -2 -14 -2 -5 2zM1756 1621l6 -3 -15 -1 -5 2zM1762 1618l5 -3 -16 0 -4 2zM1767 1615l5 -3 -17 0 -4 3zM1772 1612l4 -3 -18 1 -3 2z"/><path fill="#a0500f" stroke="#a0500f" stroke-width="1" d="M1585 877l-21 1 -6 12 22 -1zM1789 1033l-29 -1 1 16 29 1zM1851 1137l-29 -2 0 17 29 2zM1822 1577l-1 -4 -19 6 2 4zM1803 1596l1 -4 -19 4 -1 3z"/><path fill="#a55514" stroke="#a55514" stroke-width="1" d="M1543 879l-20 1 -7 13 21 -2zM1580 889l-22 1 -5 13 23 -1zM1624 901l-24 0 -3 13 25 0zM1647 913l-25 1 -2 13 26 0zM1699 954l-28 1 0 14 28 0zM1759 1016l-29 -1 0 16 30 1zM1790 1049l-29 -1 0 16 30 1zM1822 1101l-30 -2 1 17 29 2zM1850 1172l-29 -3 0 18 28 2zM1831 1555l-5 -5 -16 9 4 5zM1818 1568l-4 -4 -17 8 3 3zM1804 1588l0 -5 -19 6 0 3zM1804 1583l-2 -4 -18 6 1 4zM1727 1629l8 -2 -10 -3 -6 1zM1735 1627l7 -2 -11 -2 -6 1zM1742 1625l7 -2 -12 -2 -6 2zM1776 1609l3 -3 -18 1 -3 3zM1779 1606l3 -3 -19 1 -2 3zM1782 1603l2 -4 -20 3 -1 2zM1784 1599l1 -3 -20 3 -1 3z"/><path fill="#aa5a14" stroke="#aa5a14" stroke-width="1" d="M1523 880l-19 1 -8 13 20 -1zM1504 881l-17 1 -10 13 19 -1zM1487 882l-17 2 -10 13 17 -2zM1558 890l-21 1 -6 13 22 -1zM1600 901l-24 1 -3 13 24 -1zM1622 914l-25 0 -3 14 26 -1zM1646 927l-26 0 -2 14 27 0zM1671 940l-26 1 -1 14 27 0zM1791 1065l-30 -1 1 17 30 1zM1822 1118l-29 -2 0 17 29 2zM1849 1189l-28 -2 -2 17 29 3zM1868 1262l-26 -3 -3 17 26 4zM1840 1519l-9 -5 -13 12 9 5zM1835 1535l-8 -4 -14 10 7 5zM1826 1550l-6 -4 -16 9 6 4zM1814 1564l-4 -5 -17 9 4 4zM1802 1579l-2 -4 -18 7 2 3zM1785 1596l0 -4 -19 4 -1 3zM1785 1592l0 -3 -20 4 1 3zM1742 1619l5 -2 -15 -2 -4 1zM1747 1617l4 -2 -16 -2 -3 2zM1751 1615l4 -3 -17 -1 -3 2z"/><path fill="#af5a14" stroke="#af5a14" stroke-width="1" d="M1537 891l-21 2 -7 13 22 -2zM1576 902l-23 1 -4 14 24 -2zM1671 955l-27 0 -1 15 28 -1zM1699 969l-28 0 0 15 28 0zM1729 1000l-29 0 0 15 30 0zM1760 1032l-30 -1 1 16 30 1zM1792 1082l-30 -1 0 17 30 1zM1822 1135l-29 -2 -1 17 30 2zM1848 1207l-29 -3 -1 17 28 3zM1865 1280l-26 -4 -3 17 25 4zM1864 1421l-18 -5 -8 16 18 4zM1853 1470l-15 -5 -10 14 14 5zM1843 1502l-12 -5 -11 13 11 4zM1827 1531l-9 -5 -13 11 8 4zM1820 1546l-7 -5 -15 11 6 3zM1810 1559l-6 -4 -16 9 5 4zM1800 1575l-3 -3 -18 7 3 3zM1797 1572l-4 -4 -17 8 3 3zM1785 1589l-1 -4 -19 6 0 2zM1784 1585l-2 -3 -19 6 2 3zM1712 1626l7 -1 -8 -4 -5 1zM1719 1625l6 -1 -10 -4 -4 1zM1725 1624l6 -1 -11 -4 -5 1zM1731 1623l6 -2 -13 -3 -4 1zM1737 1621l5 -2 -14 -3 -4 2zM1755 1612l3 -2 -18 -1 -2 2zM1758 1610l3 -3 -19 0 -2 2zM1761 1607l2 -3 -19 1 -2 2zM1763 1604l1 -2 -19 1 -1 2zM1764 1602l1 -3 -19 2 -1 2z"/><path fill="#b45f14" stroke="#b45f14" stroke-width="1" d="M1516 893l-20 1 -7 13 20 -1zM1496 894l-19 1 -8 14 20 -2zM1477 895l-17 2 -10 14 19 -2zM1553 903l-22 1 -5 14 23 -1zM1597 914l-24 1 -4 14 25 -1zM1620 927l-26 1 -2 14 26 -1zM1645 941l-27 0 -1 15 27 -1zM1699 984l-28 0 0 16 29 0zM1730 1015l-30 0 0 16 30 0zM1792 1099l-30 -1 0 17 31 1zM1846 1224l-28 -3 -2 18 28 3zM1861 1297l-25 -4 -3 17 24 4zM1865 1368l-22 -4 -5 17 21 4zM1856 1436l-18 -4 -8 15 17 4zM1842 1484l-14 -5 -10 14 13 4zM1831 1514l-11 -4 -12 12 10 4zM1813 1541l-8 -4 -14 11 7 4zM1804 1555l-6 -3 -15 9 5 3zM1793 1568l-5 -4 -16 9 4 3zM1782 1582l-3 -3 -18 6 2 3zM1766 1596l-1 -3 -19 4 0 2zM1765 1593l0 -2 -20 4 1 2zM1728 1616l4 -1 -15 -4 -3 1zM1732 1615l3 -2 -16 -3 -2 1zM1735 1613l3 -2 -17 -2 -2 1z"/><path fill="#b95f14" stroke="#b95f14" stroke-width="1" d="M1531 904l-22 2 -6 13 23 -1zM1573 915l-24 2 -4 13 24 -1zM1671 969l-28 1 -1 15 29 -1zM1700 1000l-29 0 0 15 29 0zM1730 1031l-30 0 1 16 30 0zM1761 1064l-30 0 1 16 30 1zM1793 1116l-31 -1 1 17 30 1zM1821 1169l-29 -2 -1 18 30 2zM1844 1242l-28 -3 -2 17 28 3zM1857 1314l-24 -4 -4 17 24 4zM1853 1331l-24 -4 -4 17 23 4zM1859 1385l-21 -4 -6 16 21 4zM1853 1401l-21 -4 -6 15 20 4zM1847 1451l-17 -4 -8 14 16 4zM1838 1465l-16 -4 -8 14 14 4zM1831 1497l-13 -4 -10 13 12 4zM1820 1510l-12 -4 -11 12 11 4zM1818 1526l-10 -4 -12 12 9 3zM1805 1537l-9 -3 -13 11 8 3zM1798 1552l-7 -4 -14 10 6 3zM1788 1564l-5 -3 -15 9 4 3zM1779 1579l-3 -3 -17 7 2 2zM1776 1576l-4 -3 -16 7 3 3zM1765 1591l-2 -3 -19 5 1 2zM1763 1588l-2 -3 -18 6 1 2zM1706 1622l5 -1 -8 -5 -4 0zM1711 1621l4 -1 -9 -5 -3 1zM1715 1620l5 -1 -11 -5 -3 1zM1720 1619l4 -1 -12 -5 -3 1zM1724 1618l4 -2 -14 -4 -2 1zM1738 1611l2 -2 -18 -1 -1 1zM1740 1609l2 -2 -18 0 -2 1zM1742 1607l2 -2 -19 0 -1 2zM1744 1605l1 -2 -19 1 -1 1zM1745 1603l1 -2 -20 1 0 2zM1746 1601l0 -2 -19 2 -1 1z"/><path fill="#be6414" stroke="#be6414" stroke-width="1" d="M1509 906l-20 1 -7 14 21 -2zM1489 907l-20 2 -8 14 21 -2zM1469 909l-19 2 -8 14 19 -2zM1549 917l-23 1 -5 14 24 -2zM1671 984l-29 1 0 15 29 0zM1762 1081l-30 -1 0 17 30 1zM1793 1133l-30 -1 -1 17 30 1zM1819 1204l-28 -2 -2 17 29 2zM1839 1276l-27 -3 -2 17 26 3zM1848 1348l-23 -4 -4 17 22 3zM1846 1416l-20 -4 -6 16 18 4zM1838 1432l-18 -4 -7 15 17 4zM1828 1479l-14 -4 -9 14 13 4zM1808 1522l-11 -4 -11 12 10 4zM1791 1548l-8 -3 -13 10 7 3zM1783 1561l-6 -3 -14 9 5 3zM1772 1573l-4 -3 -16 8 4 2zM1759 1583l-3 -3 -17 7 2 2zM1746 1597l-1 -2 -19 3 0 2zM1745 1595l-1 -2 -19 4 1 1zM1744 1593l-1 -2 -18 5 0 1zM1714 1612l3 -1 -15 -4 -1 1zM1717 1611l2 -1 -16 -3 -1 0zM1719 1610l2 -1 -17 -3 -1 1z"/><path fill="#c36414" stroke="#c36414" stroke-width="1" d="M1526 918l-23 1 -6 14 24 -1zM1569 929l-24 1 -4 15 25 -2zM1592 942l-26 1 -3 15 27 -1zM1617 956l-27 1 -2 15 27 -1zM1643 970l-28 1 -1 15 28 -1zM1700 1015l-29 0 0 16 29 0zM1731 1047l-30 0 0 16 30 1zM1762 1098l-30 -1 0 17 30 1zM1792 1150l-30 -1 0 17 30 1zM1818 1221l-29 -2 -1 17 28 3zM1836 1293l-26 -3 -3 17 26 3zM1843 1364l-22 -3 -5 16 22 4zM1838 1381l-22 -4 -5 16 21 4zM1830 1447l-17 -4 -7 15 16 3zM1822 1461l-16 -3 -8 14 16 3zM1818 1493l-13 -4 -9 13 12 4zM1808 1506l-12 -4 -10 13 11 3zM1797 1518l-11 -3 -10 12 10 3zM1796 1534l-10 -4 -11 12 8 3zM1783 1545l-8 -3 -12 10 7 3zM1777 1558l-7 -3 -13 10 6 2zM1768 1570l-5 -3 -15 9 4 2zM1763 1567l-6 -2 -13 9 4 2zM1756 1580l-4 -2 -16 7 3 2zM1752 1578l-4 -2 -15 8 3 1zM1743 1591l-2 -2 -18 5 2 2zM1741 1589l-2 -2 -17 6 1 1zM1699 1616l4 0 -8 -7 -2 1zM1703 1616l3 -1 -10 -6 -1 0zM1706 1615l3 -1 -11 -5 -2 0zM1709 1614l3 -1 -13 -5 -1 1zM1712 1613l2 -1 -13 -4 -2 0zM1721 1609l1 -1 -17 -2 -1 0zM1722 1608l2 -1 -19 -2 0 1zM1724 1607l1 -2 -19 -1 -1 1zM1725 1605l1 -1 -20 0 0 0zM1726 1604l0 -2 -19 1 -1 1zM1726 1602l1 -1 -20 1 0 1zM1727 1601l-1 -1 -19 1 0 1zM1726 1600l0 -2 -19 3 0 0zM1726 1598l-1 -1 -19 3 1 1z"/><path fill="#c86414" stroke="#c86414" stroke-width="1" d="M1503 919l-21 2 -7 14 22 -2zM1731 1064l-30 -1 0 17 31 0zM1833 1310l-26 -3 -3 17 25 3zM1832 1397l-21 -4 -5 16 20 3zM1770 1555l-7 -3 -12 11 6 2zM1739 1587l-3 -2 -16 7 2 1zM1725 1597l0 -1 -19 3 0 1z"/><path fill="#c86914" stroke="#c86914" stroke-width="1" d="M1482 921l-21 2 -7 14 21 -2zM1461 923l-19 2 -8 14 20 -2zM1545 930l-24 2 -5 14 25 -1zM1671 1000l-29 0 -1 16 30 -1zM1700 1031l-29 0 0 16 30 0zM1762 1115l-30 -1 0 17 31 1zM1792 1167l-30 -1 0 17 29 2zM1816 1239l-28 -3 -1 18 27 2zM1829 1327l-25 -3 -3 17 24 3zM1826 1412l-20 -3 -5 15 19 4zM1814 1475l-16 -3 -7 14 14 3zM1805 1489l-14 -3 -8 13 13 3zM1786 1530l-10 -3 -10 12 9 3zM1775 1542l-9 -3 -10 11 7 2zM1757 1565l-6 -2 -12 9 5 2zM1748 1576l-4 -2 -14 8 3 2zM1744 1574l-5 -2 -13 9 4 1zM1736 1585l-3 -1 -15 7 2 1zM1733 1584l-3 -2 -14 8 2 1zM1725 1596l-2 -2 -18 5 1 0zM1723 1594l-1 -1 -17 5 0 1zM1722 1593l-2 -1 -16 6 1 0zM1698 1609l1 -1 -12 -6 0 0zM1699 1608l2 0 -14 -6 0 0zM1701 1608l1 -1 -15 -5 0 0zM1702 1607l1 0 -16 -5 0 0zM1703 1607l1 -1 -17 -4 0 0zM1704 1606l1 0 -18 -4 0 0zM1705 1606l0 -1 -18 -3 0 0z"/><path fill="#be5f14" stroke="#be5f14" stroke-width="1" d="M1594 928l-25 1 -3 14 26 -1zM1618 941l-26 1 -2 15 27 -1zM1644 955l-27 1 -2 15 28 -1zM1821 1187l-30 -2 0 17 28 2zM1842 1259l-28 -3 -2 17 27 3zM1761 1585l-2 -2 -18 6 2 2zM1746 1599l0 -2 -20 3 1 1z"/><path fill="#cd6919" stroke="#cd6919" stroke-width="1" d="M1521 932l-24 1 -5 15 24 -2zM1590 957l-27 1 -3 15 28 -1zM1615 971l-27 1 -2 15 28 -1zM1671 1015l-30 1 0 16 30 -1zM1701 1047l-30 0 0 17 30 -1zM1732 1080l-31 0 0 17 31 0zM1763 1132l-31 -1 0 17 30 1zM1791 1202l-30 -2 -1 18 29 1zM1812 1273l-27 -2 -2 17 27 2zM1821 1361l-24 -3 -3 16 22 3zM1813 1443l-18 -3 -6 14 17 4zM1806 1458l-17 -4 -7 15 16 3zM1521 1607l12 5 14 4 -11 -5zM1536 1611l11 5 14 3 -10 -4zM1776 1527l-10 -2 -9 12 9 2zM1766 1539l-9 -2 -10 11 9 2zM1756 1550l-9 -2 -9 11 7 2zM1739 1572l-5 -2 -12 9 4 2zM1726 1581l-4 -2 -11 9 2 1zM1716 1590l-3 -1 -13 7 2 0zM1713 1589l-2 -1 -12 8 1 0zM1706 1600l0 -1 -19 3 0 0zM1706 1599l-1 0 -18 3 0 0zM1705 1599l0 -1 -18 4 0 0zM1705 1598l-1 0 -17 4 0 0zM1704 1598l-1 -1 -16 5 0 0zM1703 1597l-1 -1 -15 6 0 0zM1702 1596l-2 0 -13 6 0 0zM1700 1596l-1 0 -12 6 0 0zM1699 1596l-1 -1 -11 7 0 0z"/><path fill="#d26919" stroke="#d26919" stroke-width="1" d="M1497 933l-22 2 -6 15 23 -2zM1816 1377l-22 -3 -4 16 21 3zM1798 1472l-16 -3 -6 14 15 3zM1551 1615l10 4 14 2 -9 -4zM1566 1617l9 4 14 1 -8 -3zM1745 1561l-7 -2 -10 10 6 1zM1734 1570l-6 -1 -10 9 4 1zM1722 1579l-4 -1 -10 9 3 1zM1711 1588l-3 -1 -10 8 1 1zM1657 1612l3 1 13 -5 -1 -1zM1698 1595l-2 0 -9 7 0 0zM1696 1595l-1 -1 -8 8 0 0zM1695 1594l-2 0 -6 8 0 0zM1669 1606l1 0 17 -4 0 0zM1670 1606l1 1 16 -5 0 0zM1671 1607l1 0 15 -5 0 0zM1672 1607l1 1 14 -6 0 0z"/><path fill="#d26e19" stroke="#d26e19" stroke-width="1" d="M1475 935l-21 2 -7 15 22 -2zM1454 937l-20 2 -8 16 21 -3zM1434 939l-19 3 -8 15 19 -2zM1541 945l-25 1 -4 15 25 -2zM1563 958l-26 1 -3 15 26 -1zM1642 1000l-29 1 -1 16 29 -1zM1701 1063l-30 1 0 16 30 0zM1732 1097l-31 0 1 16 30 1zM1762 1149l-30 -1 0 17 30 1zM1789 1219l-29 -1 0 17 28 1zM1810 1290l-27 -2 -2 17 26 2zM1807 1307l-26 -2 -2 17 25 2zM1811 1393l-21 -3 -5 16 21 3zM1806 1409l-21 -3 -4 15 20 3zM1464 1579l14 8 14 7 -13 -7zM1479 1587l13 7 14 7 -12 -6zM1791 1486l-15 -3 -7 14 14 2zM1783 1499l-14 -2 -7 13 12 2zM1774 1512l-12 -2 -8 12 12 3zM1766 1525l-12 -3 -7 13 10 2zM1757 1537l-10 -2 -8 11 8 2zM1581 1619l8 3 15 0 -8 -3zM1747 1548l-8 -2 -8 11 7 2zM1596 1619l8 3 14 -1 -6 -2zM1738 1559l-7 -2 -9 11 6 1zM1612 1619l6 2 14 -2 -5 -2zM1728 1569l-6 -1 -8 9 4 1zM1623 1615l4 2 15 -2 -3 -2zM1627 1617l5 2 14 -3 -4 -1zM1718 1578l-4 -1 -9 9 3 1zM1714 1577l-5 0 -7 9 3 0zM1639 1613l3 2 15 -3 -2 -1zM1642 1615l4 1 14 -3 -3 -1zM1708 1587l-3 -1 -9 9 2 0zM1705 1586l-3 0 -7 8 1 1zM1702 1586l-3 -1 -6 9 2 0zM1652 1608l1 1 17 -3 -1 0zM1653 1609l2 2 16 -4 -1 -1zM1655 1611l2 1 15 -5 -1 0zM1693 1594l-2 0 -4 8 0 0zM1691 1594l-1 0 -3 8 0 0zM1690 1594l-2 0 -1 8 0 0zM1688 1594l-2 0 1 8 0 0zM1686 1594l-1 0 2 8 0 0zM1685 1594l-2 0 4 8 0 0zM1683 1594l-2 0 6 8 0 0zM1681 1594l-1 1 7 7 0 0zM1680 1595l-2 0 9 7 0 0zM1678 1595l-1 0 10 7 0 0zM1677 1595l-2 1 12 6 0 0zM1675 1596l-1 0 13 6 0 0zM1674 1596l-1 1 14 5 0 0zM1673 1597l-1 0 15 5 0 0zM1672 1597l-1 1 16 4 0 0zM1671 1598l-1 0 17 4 0 0zM1670 1598l-1 1 18 3 0 0zM1669 1599l-1 1 19 2 0 0zM1668 1600l0 0 19 2 0 0zM1668 1600l0 1 19 1 0 0zM1668 1601l-1 1 20 0 0 0zM1667 1602l0 0 20 0 0 0zM1667 1602l0 1 20 -1 0 0zM1667 1603l1 1 19 -2 0 0zM1668 1604l0 0 19 -2 0 0zM1668 1604l1 1 18 -3 0 0zM1669 1605l0 1 18 -4 0 0z"/><path fill="#cd6914" stroke="#cd6914" stroke-width="1" d="M1566 943l-25 2 -4 14 26 -1zM1642 985l-28 1 -1 15 29 -1zM1791 1185l-29 -2 -1 17 30 2zM1814 1256l-27 -2 -2 17 27 2zM1825 1344l-24 -3 -4 17 24 3zM1820 1428l-19 -4 -6 16 18 3zM1506 1601l14 6 13 5 -12 -5zM1796 1502l-13 -3 -9 13 12 3zM1786 1515l-12 -3 -8 13 10 2zM1763 1552l-7 -2 -11 11 6 2zM1751 1563l-6 -2 -11 9 5 2zM1730 1582l-4 -1 -13 8 3 1zM1720 1592l-2 -1 -15 6 1 1zM1718 1591l-2 -1 -14 6 1 1zM1693 1610l2 -1 -8 -7 0 0zM1695 1609l1 0 -9 -7 0 0zM1696 1609l2 0 -11 -7 0 0zM1705 1605l1 -1 -19 -2 0 0zM1706 1604l0 0 -19 -2 0 0zM1706 1604l1 -1 -20 -1 0 0zM1707 1603l0 -1 -20 0 0 0zM1707 1602l0 -1 -20 1 0 0zM1707 1601l0 0 -20 1 0 0zM1707 1601l-1 -1 -19 2 0 0z"/><path fill="#d76e19" stroke="#d76e19" stroke-width="1" d="M1516 946l-24 2 -5 15 25 -2zM1588 972l-28 1 -2 15 28 -1zM1614 986l-28 1 -2 15 29 -1zM1641 1016l-29 1 -1 16 30 -1zM1671 1031l-30 1 0 16 30 -1zM1732 1114l-30 -1 0 17 30 1zM1762 1166l-30 -1 0 17 30 1zM1788 1236l-28 -1 -1 17 28 2zM1804 1324l-25 -2 -3 17 25 2zM1801 1341l-25 -2 -3 16 24 3zM1801 1424l-20 -3 -5 16 19 3zM1795 1440l-19 -3 -5 15 18 2zM1789 1454l-18 -2 -5 14 16 3zM1782 1469l-16 -3 -6 14 16 3zM1494 1595l12 6 15 6 -11 -6zM1510 1601l11 6 15 4 -10 -5zM1526 1606l10 5 15 4 -9 -5zM1542 1610l9 5 15 2 -8 -4zM1558 1613l8 4 15 2 -7 -4zM1747 1535l-11 -2 -6 12 9 1zM1574 1615l7 4 15 0 -6 -3zM1739 1546l-9 -1 -7 11 8 1zM1590 1616l6 3 16 0 -6 -3zM1731 1557l-8 -1 -7 11 6 1zM1602 1613l4 3 17 -1 -4 -2zM1606 1616l6 3 15 -2 -4 -2zM1722 1568l-6 -1 -7 10 5 0zM1716 1567l-6 -1 -5 10 4 1zM1619 1613l4 2 16 -2 -3 -1zM1709 1577l-4 -1 -6 9 3 1zM1705 1576l-5 -1 -4 10 3 0zM1632 1608l2 2 18 -2 -2 -1zM1634 1610l2 2 17 -3 -1 -1zM1636 1612l3 1 16 -2 -2 -2zM1699 1585l-3 0 -5 9 2 0zM1696 1585l-4 0 -2 9 1 0zM1692 1585l-3 0 -1 9 2 0zM1689 1585l-3 0 0 9 2 0zM1686 1585l-4 0 3 9 1 0zM1648 1601l0 2 19 0 0 -1zM1648 1603l0 1 20 0 -1 -1zM1648 1604l1 2 19 -2 0 0zM1649 1606l1 1 19 -2 -1 -1zM1650 1607l2 1 17 -2 0 -1z"/><path fill="#dc6e19" stroke="#dc6e19" stroke-width="1" d="M1492 948l-23 2 -5 15 23 -2zM1537 959l-25 2 -4 15 26 -2zM1671 1047l-30 1 -1 16 31 0zM1701 1080l-30 0 0 17 30 0zM1762 1183l-30 -1 0 17 29 1zM1787 1254l-28 -2 -2 17 28 2zM1776 1483l-16 -3 -5 14 14 3zM1769 1497l-14 -3 -6 14 13 2zM1762 1510l-13 -2 -6 12 11 2zM1754 1522l-11 -2 -7 13 11 2zM1585 1612l5 4 16 0 -4 -3zM1723 1556l-7 -1 -6 11 6 1zM1616 1610l3 3 17 -1 -2 -2zM1700 1575l-5 0 -3 10 4 0zM1630 1606l2 2 18 -1 -1 -1zM1682 1585l-3 0 4 9 2 0zM1679 1585l-3 1 5 8 2 0zM1648 1599l0 1 19 2 1 -1zM1648 1600l0 1 19 1 0 0z"/><path fill="#dc7319" stroke="#dc7319" stroke-width="1" d="M1469 950l-22 2 -6 16 23 -3zM1447 952l-21 3 -6 15 21 -2zM1426 955l-19 2 -7 16 20 -3zM1560 973l-26 1 -3 16 27 -2zM1586 987l-28 1 -2 16 28 -2zM1613 1001l-29 1 -1 16 29 -1zM1732 1131l-30 -1 0 17 30 1zM1761 1200l-29 -1 -1 18 29 1zM1785 1271l-28 -2 -1 17 27 2zM1797 1358l-24 -3 -2 17 23 2zM1794 1374l-23 -2 -4 16 23 2zM1790 1390l-23 -2 -3 16 21 2zM1437 1562l12 8 15 9 -11 -8zM1453 1571l11 8 15 8 -11 -7zM1468 1580l11 7 15 8 -10 -7zM1484 1588l10 7 16 6 -10 -7zM1500 1594l10 7 16 5 -9 -6zM1517 1600l9 6 16 4 -8 -6zM1534 1604l8 6 16 3 -8 -5zM1550 1608l8 5 16 2 -7 -4zM1736 1533l-10 -2 -5 12 9 2zM1567 1611l7 4 16 1 -5 -4zM1730 1545l-9 -2 -5 12 7 1zM1716 1555l-8 -1 -4 11 6 1zM1598 1610l4 3 17 0 -3 -3zM1710 1566l-6 -1 -4 10 5 1zM1704 1565l-7 0 -2 10 5 0zM1613 1608l3 2 18 0 -2 -2zM1695 1575l-5 0 -1 10 3 0zM1690 1575l-5 0 1 10 3 0zM1628 1602l1 2 19 0 0 -1zM1629 1604l1 2 19 0 -1 -2zM1676 1586l-4 0 8 9 1 -1zM1672 1586l-3 1 9 8 2 0zM1669 1587l-3 0 11 8 1 0zM1666 1587l-2 1 11 8 2 -1zM1664 1588l-3 1 13 7 1 0zM1661 1589l-2 1 14 7 1 -1zM1659 1590l-3 1 16 6 1 0zM1656 1591l-2 1 17 6 1 -1zM1654 1592l-1 1 17 5 1 0zM1653 1593l-2 2 18 4 1 -1zM1651 1595l-1 1 18 4 1 -1zM1650 1596l-1 1 19 3 0 0zM1649 1597l-1 2 20 2 0 -1z"/><path fill="#e17319" stroke="#e17319" stroke-width="1" d="M1512 961l-25 2 -4 15 25 -2zM1487 963l-23 2 -5 16 24 -3zM1534 974l-26 2 -3 16 26 -2zM1612 1017l-29 1 -1 16 29 -1zM1641 1032l-30 1 0 16 30 -1zM1671 1064l-31 0 0 17 31 -1zM1701 1097l-30 0 0 17 31 -1zM1732 1148l-30 -1 0 18 30 0zM1760 1218l-29 -1 0 17 29 1zM1783 1288l-27 -2 -2 17 27 2zM1781 1305l-27 -2 -1 17 26 2zM1785 1406l-21 -2 -3 15 20 2zM1781 1421l-20 -2 -4 16 19 2zM1776 1437l-19 -2 -4 15 18 2zM1771 1452l-18 -2 -4 14 17 2zM1766 1466l-17 -2 -4 15 15 1zM1760 1480l-15 -1 -5 13 15 2zM1755 1494l-15 -2 -4 14 13 2zM1749 1508l-13 -2 -5 13 12 1zM1743 1520l-12 -1 -5 12 10 2zM1544 1603l6 5 17 3 -5 -5zM1726 1531l-11 -1 -4 12 10 1zM1562 1606l5 5 18 1 -5 -3zM1721 1543l-10 -1 -3 12 8 1zM1576 1605l4 4 18 1 -3 -3zM1580 1609l5 3 17 1 -4 -3zM1708 1554l-8 0 -3 11 7 0zM1592 1603l3 4 18 1 -2 -3zM1595 1607l3 3 18 0 -3 -2zM1697 1565l-6 -1 -1 11 5 0zM1691 1564l-7 0 1 11 5 0zM1610 1602l1 3 19 1 -1 -2zM1611 1605l2 3 19 0 -2 -2zM1685 1575l-5 0 2 10 4 0zM1680 1575l-5 0 4 10 3 0zM1675 1575l-5 1 6 10 3 -1zM1670 1576l-5 1 7 9 4 0zM1629 1595l-1 2 20 3 0 -1zM1628 1597l0 2 20 2 0 -1zM1628 1599l0 3 20 1 0 -2z"/><path fill="#e67319" stroke="#e67319" stroke-width="1" d="M1464 965l-23 3 -6 15 24 -2zM1558 988l-27 2 -2 15 27 -1zM1702 1113l-31 1 0 17 31 -1zM1732 1165l-30 0 0 17 30 0zM1779 1322l-26 -2 -2 17 25 2zM1527 1599l7 5 16 4 -6 -5zM1711 1542l-9 0 -2 12 8 0zM1700 1554l-9 -1 0 11 6 1zM1684 1564l-7 1 3 10 5 0zM1609 1600l1 2 19 2 -1 -2zM1665 1577l-4 1 8 9 3 -1zM1661 1578l-5 1 10 8 3 0zM1631 1591l-1 2 19 4 1 -1zM1630 1593l-1 2 19 4 1 -2z"/><path fill="#e67819" stroke="#e67819" stroke-width="1" d="M1441 968l-21 2 -7 16 22 -3zM1420 970l-20 3 -7 16 20 -3zM1508 976l-25 2 -4 16 26 -2zM1584 1002l-28 2 -2 15 29 -1zM1641 1048l-30 1 -1 16 30 -1zM1671 1080l-31 1 0 16 31 0zM1760 1235l-29 -1 -1 17 29 1zM1759 1252l-29 -1 -1 17 28 1zM1776 1339l-25 -2 -2 16 24 2zM1773 1355l-24 -2 -2 17 24 2zM1413 1542l10 9 14 11 -9 -9zM1428 1553l9 9 16 9 -10 -8zM1443 1563l10 8 15 9 -9 -8zM1459 1572l9 8 16 8 -8 -7zM1476 1581l8 7 16 6 -8 -6zM1492 1588l8 6 17 6 -7 -6zM1740 1492l-15 -1 -3 14 14 1zM1510 1594l7 6 17 4 -7 -5zM1736 1506l-14 -1 -3 13 12 1zM1731 1519l-12 -1 -4 12 11 1zM1540 1598l4 5 18 3 -4 -4zM1715 1530l-11 0 -2 12 9 0zM1558 1602l4 4 18 3 -4 -4zM1573 1601l3 4 19 2 -3 -4zM1691 1553l-8 0 1 11 7 0zM1590 1600l2 3 19 2 -1 -3zM1677 1565l-6 0 4 10 5 0zM1609 1594l-1 3 20 2 0 -2zM1608 1597l1 3 19 2 0 -3zM1656 1579l-4 1 12 8 2 -1zM1652 1580l-4 1 13 8 3 -1zM1648 1581l-3 1 14 8 2 -1zM1645 1582l-4 2 15 7 3 -1zM1641 1584l-3 2 16 6 2 -1zM1638 1586l-2 1 17 6 1 -1zM1636 1587l-3 2 18 6 2 -2zM1633 1589l-2 2 19 5 1 -1z"/><path fill="#eb7819" stroke="#eb7819" stroke-width="1" d="M1483 978l-24 3 -5 15 25 -2zM1531 990l-26 2 -3 16 27 -3zM1556 1004l-27 1 -3 16 28 -2zM1583 1018l-29 1 -1 17 29 -2zM1611 1033l-29 1 -1 16 30 -1zM1640 1064l-30 1 0 17 30 -1zM1671 1097l-31 0 0 17 31 0zM1702 1130l-31 1 0 17 31 -1zM1732 1182l-30 0 0 17 30 0zM1732 1199l-30 0 0 17 29 1zM1757 1269l-28 -1 0 17 27 1zM1756 1286l-27 -1 -1 17 26 1zM1771 1372l-24 -2 -2 16 22 2zM1767 1388l-22 -2 -3 16 22 2zM1764 1404l-22 -2 -2 16 21 1zM1761 1419l-21 -1 -3 15 20 2zM1757 1435l-20 -2 -2 15 18 2zM1753 1450l-18 -2 -3 15 17 1zM1749 1464l-17 -1 -3 14 16 2zM1745 1479l-16 -2 -4 14 15 1zM1504 1588l6 6 17 5 -5 -6zM1722 1505l-14 -1 -2 13 13 1zM1522 1593l5 6 17 4 -4 -5zM1719 1518l-13 -1 -2 13 11 0zM1536 1593l4 5 18 4 -4 -5zM1704 1530l-11 -1 -1 13 10 0zM1554 1597l4 5 18 3 -3 -4zM1702 1542l-10 0 -1 11 9 1zM1692 1542l-9 0 0 11 8 0zM1571 1597l2 4 19 2 -2 -3zM1683 1553l-8 1 2 11 7 -1zM1675 1554l-8 0 4 11 6 0zM1589 1593l0 4 20 3 -1 -3zM1589 1597l1 3 20 2 -1 -2zM1671 1565l-6 1 5 10 5 -1zM1665 1566l-7 1 7 10 5 -1zM1658 1567l-6 1 9 10 4 -1zM1652 1568l-6 1 10 10 5 -1zM1616 1583l-3 3 18 5 2 -2zM1613 1586l-2 3 19 4 1 -2zM1611 1589l-1 2 19 4 1 -2zM1610 1591l-1 3 19 3 1 -2z"/><path fill="#f07819" stroke="#f07819" stroke-width="1" d="M1459 981l-24 2 -5 16 24 -3zM1435 983l-22 3 -5 16 22 -3zM1413 986l-20 3 -6 17 21 -4zM1702 1147l-31 1 0 17 31 0zM1469 1573l7 8 16 7 -6 -7zM1486 1581l6 7 18 6 -6 -6zM1552 1593l2 4 19 4 -2 -4zM1570 1593l1 4 19 3 -1 -3zM1589 1590l0 3 19 4 1 -3zM1646 1569l-5 2 11 9 4 -1zM1641 1571l-5 1 12 9 4 -1zM1622 1579l-3 2 17 6 2 -1zM1619 1581l-3 2 17 6 3 -2z"/><path fill="#aa5514" stroke="#aa5514" stroke-width="1" d="M1728 984l-29 0 1 16 29 0zM1718 1630l9 -1 -8 -4 -7 1z"/><path fill="#f07d19" stroke="#f07d19" stroke-width="1" d="M1505 992l-26 2 -4 16 27 -2zM1611 1049l-30 1 -1 17 30 -2zM1671 1114l-31 0 0 17 31 0zM1702 1165l-31 0 1 17 30 0zM1731 1217l-29 -1 0 17 29 1zM1754 1303l-26 -1 -1 17 26 1zM1753 1320l-26 -1 -1 17 25 1zM1405 1533l8 9 15 11 -8 -8zM1420 1545l8 8 15 10 -7 -8zM1436 1555l7 8 16 9 -7 -7zM1452 1565l7 7 17 9 -7 -8zM1732 1463l-18 -1 -2 14 17 1zM1729 1477l-17 -1 -2 14 15 1zM1725 1491l-15 -1 -2 14 14 1zM1518 1587l4 6 18 5 -4 -5zM1706 1517l-12 0 -1 12 11 1zM1693 1529l-11 0 1 13 9 0zM1683 1542l-10 0 2 12 8 -1zM1570 1589l0 4 19 4 0 -4zM1667 1554l-8 1 6 11 6 -1zM1659 1555l-7 1 6 11 7 -1zM1591 1586l-2 4 20 4 1 -3zM1636 1572l-5 2 14 8 3 -1zM1631 1574l-5 2 15 8 4 -2zM1626 1576l-4 3 16 7 3 -2z"/><path fill="#f57d19" stroke="#f57d19" stroke-width="1" d="M1479 994l-25 2 -4 17 25 -3zM1454 996l-24 3 -4 17 24 -3zM1430 999l-22 3 -5 17 23 -3zM1408 1002l-21 4 -5 17 21 -4zM1529 1005l-27 3 -3 16 27 -3zM1554 1019l-28 2 -1 17 28 -2zM1582 1034l-29 2 -1 16 29 -2zM1610 1065l-30 2 0 16 30 -1zM1640 1081l-30 1 0 17 30 -2zM1671 1131l-31 0 1 17 30 0zM1702 1182l-30 0 0 17 30 0zM1731 1234l-29 -1 -1 17 29 1zM1730 1251l-29 -1 0 18 28 0zM1751 1337l-25 -1 -1 16 24 1zM1749 1353l-24 -1 -2 17 24 1zM1747 1370l-24 -1 -1 16 23 1zM1745 1386l-23 -1 -1 16 21 1zM1742 1402l-21 -1 -2 15 21 2zM1740 1418l-21 -2 -1 16 19 1zM1737 1433l-19 -1 -2 15 19 1zM1735 1448l-19 -1 -2 15 18 1zM1464 1566l5 7 17 8 -4 -7zM1482 1574l4 7 18 7 -5 -7zM1710 1490l-15 0 -1 13 14 1zM1499 1581l5 7 18 5 -4 -6zM1708 1504l-14 -1 0 14 12 0zM1515 1581l3 6 18 6 -3 -6zM1694 1517l-13 0 1 12 11 0zM1532 1582l1 5 19 6 -1 -5zM1533 1587l3 6 18 4 -2 -4zM1682 1529l-11 1 2 12 10 0zM1551 1583l0 5 19 5 0 -4zM1551 1588l1 5 19 4 -1 -4zM1673 1542l-10 1 4 11 8 0zM1663 1543l-9 1 5 11 8 -1zM1572 1580l-2 4 19 6 2 -4zM1570 1584l0 5 19 4 0 -3zM1652 1556l-8 2 8 10 6 -1zM1644 1558l-7 1 9 10 6 -1zM1637 1559l-7 2 11 10 5 -2zM1630 1561l-7 2 13 9 5 -1zM1623 1563l-6 2 14 9 5 -2zM1607 1571l-5 2 17 8 3 -2zM1602 1573l-4 3 18 7 3 -2zM1598 1576l-3 4 18 6 3 -3zM1595 1580l-2 3 18 6 2 -3zM1593 1583l-2 3 19 5 1 -2z"/><path fill="#fa7d19" stroke="#fa7d19" stroke-width="1" d="M1502 1008l-27 2 -3 16 27 -2zM1640 1097l-30 2 0 16 30 -1zM1729 1268l-28 0 0 17 28 0zM1447 1557l5 8 17 8 -5 -7zM1712 1476l-16 0 -1 14 15 0zM1694 1503l-13 1 0 13 13 0zM1671 1530l-11 1 3 12 10 -1zM1654 1544l-9 1 7 11 7 -1zM1617 1565l-5 3 14 8 5 -2zM1612 1568l-5 3 15 8 4 -3z"/><path fill="#fa821e" stroke="#fa821e" stroke-width="1" d="M1475 1010l-25 3 -3 16 25 -3zM1526 1021l-27 3 -2 16 28 -2zM1553 1036l-28 2 -2 16 29 -2zM1581 1050l-29 2 -1 17 29 -2zM1671 1148l-30 0 0 17 30 0zM1729 1285l-28 0 0 17 27 0zM1728 1302l-27 0 -1 16 27 1zM1399 1524l6 9 15 12 -5 -9zM1415 1536l5 9 16 10 -5 -8zM1716 1447l-19 0 -1 14 18 1zM1714 1462l-18 -1 0 15 16 0zM1479 1567l3 7 17 7 -2 -6zM1695 1490l-15 0 1 14 13 -1zM1514 1576l1 5 18 6 -1 -5zM1532 1577l0 5 19 6 0 -5zM1660 1531l-11 1 5 12 9 -1zM1552 1578l-1 5 19 6 0 -5zM1645 1545l-9 2 8 11 8 -2zM1636 1547l-9 2 10 10 7 -1zM1577 1573l-3 3 19 7 2 -3z"/><path fill="#ff821e" stroke="#ff821e" stroke-width="1" d="M1450 1013l-24 3 -4 16 25 -3zM1426 1016l-23 3 -4 17 23 -4zM1403 1019l-21 4 -5 17 22 -4zM1499 1024l-27 2 -2 17 27 -3zM1525 1038l-28 2 -2 17 28 -3zM1552 1052l-29 2 -1 17 29 -2zM1580 1067l-29 2 -1 16 30 -2zM1610 1082l-30 1 0 17 30 -1zM1610 1099l-30 1 0 17 30 -2zM1640 1114l-30 1 0 17 30 -1zM1640 1131l-30 1 0 17 31 -1zM1671 1165l-30 0 0 18 31 -1zM1672 1182l-31 1 1 17 30 -1zM1702 1216l-30 0 0 17 30 0zM1702 1233l-30 0 1 18 28 -1zM1701 1250l-28 1 0 17 28 0zM1727 1319l-27 -1 0 17 26 1zM1726 1336l-26 -1 0 17 25 0zM1725 1352l-25 0 -1 16 24 1zM1723 1369l-24 -1 0 16 23 1zM1722 1385l-23 -1 0 16 22 1zM1721 1401l-22 -1 -1 16 21 0zM1719 1416l-21 0 0 15 20 1zM1718 1432l-20 -1 -1 16 19 0zM1428 1538l3 9 16 10 -3 -8zM1444 1549l3 8 17 9 -3 -8zM1696 1461l-17 0 0 15 17 0zM1461 1558l3 8 18 8 -3 -7zM1696 1476l-17 0 1 14 15 0zM1478 1560l1 7 18 8 -2 -7zM1680 1490l-15 0 2 14 14 0zM1495 1568l2 7 18 6 -1 -5zM1681 1504l-14 0 2 13 12 0zM1667 1504l-14 1 3 13 13 -1zM1514 1570l0 6 18 6 0 -5zM1669 1517l-13 1 4 13 11 -1zM1656 1518l-12 1 5 13 11 -1zM1533 1571l-1 6 19 6 1 -5zM1649 1532l-11 1 7 12 9 -1zM1638 1533l-10 2 8 12 9 -2zM1560 1565l-4 4 18 7 3 -3zM1556 1569l-3 5 19 6 2 -4zM1553 1574l-1 4 18 6 2 -4zM1627 1549l-8 2 11 10 7 -2zM1619 1551l-7 2 11 10 7 -2zM1612 1553l-8 3 13 9 6 -2zM1604 1556l-6 3 14 9 5 -3zM1598 1559l-6 3 15 9 5 -3zM1592 1562l-6 3 16 8 5 -2zM1586 1565l-5 4 17 7 4 -3zM1581 1569l-4 4 18 7 3 -4z"/><path fill="#ff871e" stroke="#ff871e" stroke-width="1" d="M1472 1026l-25 3 -3 17 26 -3zM1447 1029l-25 3 -3 17 25 -3zM1422 1032l-23 4 -3 17 23 -4zM1399 1036l-22 4 -4 17 23 -4zM1497 1040l-27 3 -2 17 27 -3zM1470 1043l-26 3 -2 17 26 -3zM1523 1054l-28 3 -1 16 28 -2zM1551 1069l-29 2 -1 17 29 -3zM1580 1083l-30 2 0 17 30 -2zM1580 1100l-30 2 0 17 30 -2zM1610 1115l-30 2 0 17 30 -2zM1610 1132l-30 2 0 17 30 -2zM1641 1148l-31 1 1 18 30 -2zM1641 1165l-30 2 0 17 30 -1zM1672 1199l-30 1 1 17 29 -1zM1672 1216l-29 1 0 17 29 -1zM1672 1233l-29 1 1 17 29 0zM1701 1268l-28 0 0 17 28 0zM1701 1285l-28 0 1 17 27 0zM1701 1302l-27 0 0 17 26 -1zM1700 1318l-26 1 1 16 25 0zM1700 1335l-25 0 0 17 25 0zM1700 1352l-25 0 0 16 24 0zM1699 1368l-24 0 1 16 23 0zM1699 1384l-23 0 0 16 23 0zM1699 1400l-23 0 1 16 21 0zM1396 1515l3 9 16 12 -3 -9zM1698 1416l-21 0 1 15 20 0zM1411 1518l1 9 16 11 -1 -8zM1412 1527l3 9 16 11 -3 -9zM1698 1431l-20 0 0 16 19 0zM1427 1530l1 8 16 11 -1 -9zM1697 1447l-19 0 1 14 17 0zM1678 1447l-19 0 2 15 18 -1zM1443 1540l1 9 17 9 -1 -7zM1679 1461l-18 1 2 14 16 0zM1461 1543l-1 8 18 9 0 -7zM1460 1551l1 7 18 9 -1 -7zM1679 1476l-16 0 2 14 15 0zM1663 1476l-17 2 4 13 15 -1zM1478 1553l0 7 17 8 1 -6zM1665 1490l-15 1 3 14 14 -1zM1650 1491l-15 2 4 13 14 -1zM1497 1555l-1 7 18 8 1 -6zM1496 1562l-1 6 19 8 0 -6zM1653 1505l-14 1 5 13 12 -1zM1639 1506l-13 2 6 13 12 -2zM1521 1552l-3 6 17 8 4 -5zM1518 1558l-3 6 18 7 2 -5zM1515 1564l-1 6 18 7 1 -6zM1644 1519l-12 2 6 12 11 -1zM1632 1521l-11 2 7 12 10 -2zM1621 1523l-12 2 9 12 10 -2zM1609 1525l-10 3 10 12 9 -3zM1548 1551l-5 5 17 9 5 -5zM1543 1556l-4 5 17 8 4 -4zM1539 1561l-4 5 18 8 3 -5zM1535 1566l-2 5 19 7 1 -4zM1628 1535l-10 2 9 12 9 -2zM1618 1537l-9 3 10 11 8 -2zM1609 1540l-9 2 12 11 7 -2zM1600 1542l-9 4 13 10 8 -3zM1591 1546l-7 3 14 10 6 -3zM1584 1549l-7 4 15 9 6 -3zM1577 1553l-7 3 16 9 6 -3zM1570 1556l-5 4 16 9 5 -4zM1565 1560l-5 5 17 8 4 -4z"/><path fill="#ff8c1e" stroke="#ff8c1e" stroke-width="1" d="M1444 1046l-25 3 -2 17 25 -3zM1419 1049l-23 4 -3 18 24 -5zM1396 1053l-23 4 -3 18 23 -4zM1495 1057l-27 3 -2 16 28 -3zM1468 1060l-26 3 -2 17 26 -4zM1442 1063l-25 3 -2 18 25 -4zM1417 1066l-24 5 -2 17 24 -4zM1393 1071l-23 4 -2 18 23 -5zM1522 1071l-28 2 -1 17 28 -2zM1494 1073l-28 3 -1 18 28 -4zM1550 1085l-29 3 0 17 29 -3zM1521 1088l-28 2 -1 18 29 -3zM1550 1102l-29 3 0 17 29 -3zM1580 1117l-30 2 0 17 30 -2zM1580 1134l-30 2 1 17 29 -2zM1610 1149l-30 2 1 17 30 -1zM1611 1167l-30 1 1 18 29 -2zM1641 1183l-30 1 1 17 30 -1zM1642 1200l-30 1 1 17 30 -1zM1643 1217l-30 1 1 18 29 -2zM1673 1251l-29 0 1 18 28 -1zM1673 1268l-28 1 1 17 27 -1zM1673 1285l-27 1 1 17 27 -1zM1674 1302l-27 1 1 16 26 0zM1674 1319l-26 0 1 17 26 -1zM1675 1335l-26 1 1 17 25 -1zM1675 1352l-25 1 2 16 23 -1zM1675 1368l-23 1 1 16 23 -1zM1676 1384l-23 1 1 16 22 -1zM1676 1400l-22 1 2 16 21 -1zM1397 1496l-2 10 16 12 1 -9zM1395 1506l1 9 16 12 -1 -9zM1677 1416l-21 1 2 15 20 -1zM1412 1509l-1 9 16 12 1 -9zM1678 1431l-20 1 1 15 19 0zM1658 1432l-20 1 3 15 18 -1zM1428 1521l-1 9 16 10 1 -8zM1659 1447l-18 1 2 15 18 -1zM1446 1525l-2 7 17 11 2 -7zM1444 1532l-1 8 17 11 1 -8zM1661 1462l-18 1 3 15 17 -2zM1643 1463l-17 2 4 14 16 -1zM1463 1536l-2 7 17 10 2 -7zM1646 1478l-16 1 5 14 15 -2zM1630 1479l-15 2 5 14 15 -2zM1483 1539l-3 7 17 9 3 -6zM1480 1546l-2 7 18 9 1 -7zM1635 1493l-15 2 6 13 13 -2zM1620 1495l-14 2 7 13 13 -2zM1606 1497l-14 3 9 13 12 -3zM1510 1537l-5 6 16 9 5 -5zM1505 1543l-5 6 18 9 3 -6zM1500 1549l-3 6 18 9 3 -6zM1626 1508l-13 2 8 13 11 -2zM1613 1510l-12 3 8 12 12 -2zM1601 1513l-12 3 10 12 10 -3zM1589 1516l-12 3 11 12 11 -3zM1577 1519l-10 4 12 12 9 -4zM1567 1523l-10 4 13 11 9 -3zM1557 1527l-9 5 14 10 8 -4zM1548 1532l-8 4 15 11 7 -5zM1540 1536l-7 5 15 10 7 -4zM1533 1541l-7 6 17 9 5 -5zM1526 1547l-5 5 18 9 4 -5zM1599 1528l-11 3 12 11 9 -2zM1588 1531l-9 4 12 11 9 -4zM1579 1535l-9 3 14 11 7 -3zM1570 1538l-8 4 15 11 7 -4zM1562 1542l-7 5 15 9 7 -3zM1555 1547l-7 4 17 9 5 -4z"/><path fill="#b45a14" stroke="#b45a14" stroke-width="1" d="M1761 1048l-30 -1 0 17 30 0zM1822 1152l-30 -2 0 17 29 2zM1765 1599l1 -3 -20 3 0 2z"/><path fill="#ff911e" stroke="#ff911e" stroke-width="1" d="M1466 1076l-26 4 -1 17 26 -3zM1440 1080l-25 4 -2 17 26 -4zM1415 1084l-24 4 -2 18 24 -5zM1391 1088l-23 5 -2 18 23 -5zM1368 1093l-21 5 -2 18 21 -5zM1493 1090l-28 4 0 17 27 -3zM1465 1094l-26 3 -1 18 27 -4zM1366 1111l-21 5 -1 18 21 -5zM1521 1105l-29 3 0 17 29 -3zM1492 1108l-27 3 0 17 27 -3zM1550 1119l-29 3 0 17 29 -3zM1521 1122l-29 3 1 17 28 -3zM1550 1136l-29 3 1 17 29 -3zM1580 1151l-29 2 1 18 29 -3zM1581 1168l-29 3 1 17 29 -2zM1611 1184l-29 2 1 17 29 -2zM1612 1201l-29 2 1 17 29 -2zM1613 1218l-29 2 2 18 28 -2zM1643 1234l-29 2 1 17 29 -2zM1644 1251l-29 2 2 17 28 -1zM1645 1269l-28 1 1 17 28 -1zM1646 1286l-28 1 2 17 27 -1zM1647 1303l-27 1 2 17 26 -2zM1648 1319l-26 2 2 16 25 -1zM1649 1336l-25 1 2 17 24 -1zM1650 1353l-24 1 2 16 24 -1zM1652 1369l-24 1 2 16 23 -1zM1653 1385l-23 1 2 16 22 -1zM1386 1474l-4 9 15 13 3 -9zM1382 1483l-1 9 14 14 2 -10zM1654 1401l-22 1 3 16 21 -1zM1400 1487l-3 9 15 13 3 -8zM1656 1417l-21 1 3 15 20 -1zM1635 1418l-21 2 4 15 20 -2zM1415 1501l-3 8 16 12 3 -8zM1638 1433l-20 2 4 15 19 -2zM1435 1505l-4 8 15 12 5 -8zM1431 1513l-3 8 16 11 2 -7zM1641 1448l-19 2 4 15 17 -2zM1622 1450l-18 2 5 15 17 -2zM1457 1509l-6 8 16 11 5 -7zM1451 1517l-5 8 17 11 4 -8zM1626 1465l-17 2 6 14 15 -2zM1609 1467l-16 3 6 14 16 -3zM1479 1514l-7 7 16 11 6 -6zM1472 1521l-5 7 16 11 5 -7zM1467 1528l-4 8 17 10 3 -7zM1615 1481l-16 3 7 13 14 -2zM1599 1484l-15 3 8 13 14 -3zM1584 1487l-14 3 9 13 13 -3zM1511 1514l-9 6 15 11 8 -6zM1502 1520l-8 6 16 11 7 -6zM1494 1526l-6 6 17 11 5 -6zM1488 1532l-5 7 17 10 5 -6zM1592 1500l-13 3 10 13 12 -3zM1579 1503l-12 4 10 12 12 -3zM1567 1507l-12 4 12 12 10 -4zM1555 1511l-11 5 13 11 10 -4zM1544 1516l-10 4 14 12 9 -5zM1534 1520l-9 5 15 11 8 -4zM1525 1525l-8 6 16 10 7 -5zM1517 1531l-7 6 16 10 7 -6z"/><path fill="#ff961e" stroke="#ff961e" stroke-width="1" d="M1439 1097l-26 4 -1 18 26 -4zM1413 1101l-24 5 -1 18 24 -5zM1389 1106l-23 5 -1 18 23 -5zM1465 1111l-27 4 0 17 27 -4zM1438 1115l-26 4 0 18 26 -5zM1365 1129l-21 5 0 19 21 -6zM1492 1125l-27 3 0 18 28 -4zM1521 1139l-28 3 0 18 29 -4zM1551 1153l-29 3 1 18 29 -3zM1552 1171l-29 3 1 17 29 -3zM1582 1186l-29 2 1 17 29 -2zM1583 1203l-29 2 1 18 29 -3zM1614 1236l-28 2 1 17 28 -2zM1615 1253l-28 2 2 17 28 -2zM1617 1270l-28 2 2 17 27 -2zM1618 1287l-27 2 2 17 27 -2zM1620 1304l-27 2 3 17 26 -2zM1622 1321l-26 2 2 16 26 -2zM1624 1337l-26 2 3 17 25 -2zM1626 1354l-25 2 3 16 24 -2zM1628 1370l-24 2 3 16 23 -2zM1373 1459l-4 10 13 14 4 -9zM1630 1386l-23 2 4 16 21 -2zM1392 1465l-6 9 14 13 6 -8zM1632 1402l-21 2 3 16 21 -2zM1611 1404l-21 3 4 15 20 -2zM1406 1479l-6 8 15 14 5 -9zM1614 1420l-20 2 5 16 19 -3zM1427 1484l-7 8 15 13 7 -8zM1420 1492l-5 9 16 12 4 -8zM1618 1435l-19 3 5 14 18 -2zM1599 1438l-19 3 6 14 18 -3zM1442 1497l-7 8 16 12 6 -8zM1604 1452l-18 3 7 15 16 -3zM1586 1455l-17 4 8 14 16 -3zM1464 1502l-7 7 15 12 7 -7zM1593 1470l-16 3 7 14 15 -3zM1577 1473l-16 4 9 13 14 -3zM1561 1477l-15 4 10 13 14 -4zM1508 1496l-11 6 14 12 10 -6zM1497 1502l-10 6 15 12 9 -6zM1487 1508l-8 6 15 12 8 -6zM1570 1490l-14 4 11 13 12 -4zM1556 1494l-12 4 11 13 12 -4zM1544 1498l-12 5 12 13 11 -5zM1532 1503l-11 5 13 12 10 -4zM1521 1508l-10 6 14 11 9 -5z"/><path fill="#ff9623" stroke="#ff9623" stroke-width="1" d="M1412 1119l-24 5 0 18 24 -5zM1388 1124l-23 5 0 18 23 -5zM1465 1128l-27 4 0 18 27 -4zM1493 1142l-28 4 1 17 27 -3zM1522 1156l-29 4 1 17 29 -3zM1553 1188l-29 3 1 17 29 -3zM1584 1220l-29 3 2 17 29 -2zM1586 1238l-29 2 2 17 28 -2zM1355 1419l-7 10 12 15 7 -9zM1367 1435l-7 9 13 15 6 -9zM1379 1450l-6 9 13 15 6 -9zM1607 1388l-22 3 5 16 21 -3zM1414 1470l-8 9 14 13 7 -8zM1594 1422l-20 3 6 16 19 -3zM1580 1441l-18 3 7 15 17 -4zM1450 1489l-8 8 15 12 7 -7zM1569 1459l-16 3 8 15 16 -4zM1484 1489l-11 6 14 13 10 -6zM1473 1495l-9 7 15 12 8 -6zM1546 1481l-13 4 11 13 12 -4zM1533 1485l-13 5 12 13 12 -5zM1520 1490l-12 6 13 12 11 -5z"/><path fill="#ff9b23" stroke="#ff9b23" stroke-width="1" d="M1438 1132l-26 5 1 18 25 -5zM1412 1137l-24 5 0 18 25 -5zM1388 1142l-23 5 0 18 23 -5zM1365 1147l-21 6 0 18 21 -6zM1465 1146l-27 4 1 18 27 -5zM1438 1150l-25 5 1 18 25 -5zM1413 1155l-25 5 1 18 25 -5zM1388 1160l-23 5 2 19 22 -6zM1365 1165l-21 6 1 19 22 -6zM1493 1160l-27 3 1 18 27 -4zM1466 1163l-27 5 1 17 27 -4zM1367 1184l-22 6 2 18 21 -6zM1345 1190l-19 7 2 18 19 -7zM1523 1174l-29 3 2 18 28 -4zM1494 1177l-27 4 2 18 27 -4zM1524 1191l-28 4 2 17 27 -4zM1554 1205l-29 3 2 18 28 -3zM1525 1208l-27 4 2 18 27 -4zM1555 1223l-28 3 3 17 27 -3zM1557 1240l-27 3 2 18 27 -4zM1587 1255l-28 2 3 18 27 -3zM1559 1257l-27 4 3 17 27 -3zM1589 1272l-27 3 2 17 27 -3zM1591 1289l-27 3 3 17 26 -3zM1593 1306l-26 3 3 16 26 -2zM1596 1323l-26 2 4 17 24 -3zM1354 1394l-10 9 11 16 10 -9zM1598 1339l-24 3 3 17 24 -3zM1365 1410l-10 9 12 16 9 -9zM1601 1356l-24 3 4 16 23 -3zM1577 1359l-23 3 5 16 22 -3zM1376 1426l-9 9 12 15 9 -9zM1604 1372l-23 3 4 16 22 -3zM1581 1375l-22 3 5 16 21 -3zM1388 1441l-9 9 13 15 8 -9zM1585 1391l-21 3 5 16 21 -3zM1564 1394l-22 4 7 16 20 -4zM1410 1448l-10 8 14 14 9 -8zM1400 1456l-8 9 14 14 8 -9zM1590 1407l-21 3 5 15 20 -3zM1569 1410l-20 4 6 15 19 -4zM1434 1454l-11 8 13 14 11 -7zM1423 1462l-9 8 13 14 9 -8zM1574 1425l-19 4 7 15 18 -3zM1555 1429l-18 4 7 15 18 -4zM1537 1433l-18 5 9 15 16 -5zM1459 1462l-12 7 13 13 11 -7zM1447 1469l-11 7 14 13 10 -7zM1436 1476l-9 8 15 13 8 -8zM1562 1444l-18 4 9 14 16 -3zM1544 1448l-16 5 9 14 16 -5zM1528 1453l-16 5 10 14 15 -5zM1512 1458l-15 5 11 14 14 -5zM1497 1463l-14 6 12 14 13 -6zM1483 1469l-12 6 13 14 11 -6zM1471 1475l-11 7 13 13 11 -6zM1460 1482l-10 7 14 13 9 -7zM1553 1462l-16 5 9 14 15 -4zM1537 1467l-15 5 11 13 13 -4zM1522 1472l-14 5 12 13 13 -5zM1508 1477l-13 6 13 13 12 -6zM1495 1483l-11 6 13 13 11 -6z"/><path fill="#ffa023" stroke="#ffa023" stroke-width="1" d="M1439 1168l-25 5 1 17 25 -5zM1414 1173l-25 5 2 18 24 -6zM1389 1178l-22 6 1 18 23 -6zM1467 1181l-27 4 2 18 27 -4zM1440 1185l-25 5 2 18 25 -5zM1415 1190l-24 6 2 18 24 -6zM1391 1196l-23 6 3 18 22 -6zM1368 1202l-21 6 3 19 21 -7zM1347 1208l-19 7 3 19 19 -7zM1496 1195l-27 4 2 17 27 -4zM1469 1199l-27 4 3 18 26 -5zM1442 1203l-25 5 3 18 25 -5zM1417 1208l-24 6 3 18 24 -6zM1393 1214l-22 6 3 18 22 -6zM1371 1220l-21 7 3 18 21 -7zM1350 1227l-19 7 3 19 19 -8zM1498 1212l-27 4 2 18 27 -4zM1471 1216l-26 5 3 18 25 -5zM1353 1245l-19 8 5 18 18 -8zM1527 1226l-27 4 3 17 27 -4zM1500 1230l-27 4 3 17 27 -4zM1357 1263l-18 8 5 18 18 -8zM1339 1271l-17 8 6 18 16 -8zM1530 1243l-27 4 3 17 26 -3zM1503 1247l-27 4 4 18 26 -5zM1344 1289l-16 8 6 18 16 -8zM1532 1261l-26 3 3 18 26 -4zM1350 1307l-16 8 7 18 16 -8zM1562 1275l-27 3 3 17 26 -3zM1535 1278l-26 4 4 17 25 -4zM1357 1325l-16 8 8 18 15 -9zM1341 1333l-14 9 9 18 13 -9zM1564 1292l-26 3 4 17 25 -3zM1538 1295l-25 4 4 17 25 -4zM1364 1342l-15 9 8 17 15 -8zM1349 1351l-13 9 9 17 12 -9zM1567 1309l-25 3 3 17 25 -4zM1542 1312l-25 4 4 17 24 -4zM1372 1360l-15 8 10 17 14 -9zM1357 1368l-12 9 9 17 13 -9zM1570 1325l-25 4 5 16 24 -3zM1545 1329l-24 4 5 16 24 -4zM1381 1376l-14 9 10 16 13 -8zM1367 1385l-13 9 11 16 12 -9zM1574 1342l-24 3 4 17 23 -3zM1550 1345l-24 4 5 17 23 -4zM1390 1393l-13 8 10 16 13 -8zM1377 1401l-12 9 11 16 11 -9zM1554 1362l-23 4 6 16 22 -4zM1531 1366l-22 4 6 16 22 -4zM1400 1409l-13 8 12 16 12 -8zM1387 1417l-11 9 12 15 11 -8zM1559 1378l-22 4 5 16 22 -4zM1537 1382l-22 4 7 16 20 -4zM1515 1386l-20 5 8 16 19 -5zM1425 1417l-14 8 11 15 14 -8zM1411 1425l-12 8 11 15 12 -8zM1399 1433l-11 8 12 15 10 -8zM1542 1398l-20 4 7 16 20 -4zM1522 1402l-19 5 8 16 18 -5zM1503 1407l-19 6 9 15 18 -5zM1484 1413l-17 6 9 15 17 -6zM1467 1419l-17 6 11 15 15 -6zM1450 1425l-14 7 11 15 14 -7zM1436 1432l-14 8 12 14 13 -7zM1422 1440l-12 8 13 14 11 -8zM1549 1414l-20 4 8 15 18 -4zM1529 1418l-18 5 8 15 18 -5zM1511 1423l-18 5 9 15 17 -5zM1493 1428l-17 6 10 15 16 -6zM1476 1434l-15 6 11 15 14 -6zM1461 1440l-14 7 12 15 13 -7zM1447 1447l-13 7 13 15 12 -7zM1519 1438l-17 5 10 15 16 -5zM1502 1443l-16 6 11 14 15 -5zM1486 1449l-14 6 11 14 14 -6zM1472 1455l-13 7 12 13 12 -6z"/><path fill="#fa8219" stroke="#fa8219" stroke-width="1" d="M1702 1199l-30 0 0 17 30 0zM1431 1547l5 8 16 10 -5 -8zM1497 1575l2 6 19 6 -3 -6zM1681 1517l-12 0 2 13 11 -1zM1574 1576l-2 4 19 6 2 -3z"/><path fill="#ffa523" stroke="#ffa523" stroke-width="1" d="M1445 1221l-25 5 3 18 25 -5zM1420 1226l-24 6 4 18 23 -6zM1396 1232l-22 6 4 18 22 -6zM1374 1238l-21 7 4 18 21 -7zM1473 1234l-25 5 3 17 25 -5zM1448 1239l-25 5 4 18 24 -6zM1423 1244l-23 6 4 18 23 -6zM1400 1250l-22 6 4 18 22 -6zM1378 1256l-21 7 5 18 20 -7zM1476 1251l-25 5 4 18 25 -5zM1451 1256l-24 6 4 17 24 -5zM1427 1262l-23 6 5 17 22 -6zM1404 1268l-22 6 5 18 22 -7zM1382 1274l-20 7 6 18 19 -7zM1362 1281l-18 8 6 18 18 -8zM1506 1264l-26 5 4 17 25 -4zM1480 1269l-25 5 4 17 25 -5zM1455 1274l-24 5 5 18 23 -6zM1431 1279l-22 6 5 18 22 -6zM1409 1285l-22 7 6 18 21 -7zM1387 1292l-19 7 6 18 19 -7zM1368 1299l-18 8 7 18 17 -8zM1509 1282l-25 4 4 17 25 -4zM1484 1286l-25 5 5 17 24 -5zM1459 1291l-23 6 5 17 23 -6zM1436 1297l-22 6 6 17 21 -6zM1414 1303l-21 7 7 17 20 -7zM1393 1310l-19 7 7 17 19 -7zM1374 1317l-17 8 7 17 17 -8zM1513 1299l-25 4 5 17 24 -4zM1488 1303l-24 5 5 17 24 -5zM1464 1308l-23 6 6 17 22 -6zM1441 1314l-21 6 6 17 21 -6zM1420 1320l-20 7 7 17 19 -7zM1400 1327l-19 7 7 18 19 -8zM1381 1334l-17 8 8 18 16 -8zM1517 1316l-24 4 5 17 23 -4zM1493 1320l-24 5 6 17 23 -5zM1469 1325l-22 6 7 17 21 -6zM1447 1331l-21 6 7 17 21 -6zM1426 1337l-19 7 7 17 19 -7zM1407 1344l-19 8 9 16 17 -7zM1388 1352l-16 8 9 16 16 -8zM1521 1333l-23 4 5 17 23 -5zM1498 1337l-23 5 6 17 22 -5zM1475 1342l-21 6 6 17 21 -6zM1454 1348l-21 6 8 17 19 -6zM1433 1354l-19 7 8 17 19 -7zM1414 1361l-17 7 8 17 17 -7zM1397 1368l-16 8 9 17 15 -8zM1526 1349l-23 5 6 16 22 -4zM1503 1354l-22 5 7 16 21 -5zM1481 1359l-21 6 8 16 20 -6zM1460 1365l-19 6 8 16 19 -6zM1441 1371l-19 7 9 16 18 -7zM1422 1378l-17 7 10 16 16 -7zM1405 1385l-15 8 10 16 15 -8zM1509 1370l-21 5 7 16 20 -5zM1488 1375l-20 6 8 16 19 -6zM1468 1381l-19 6 8 16 19 -6zM1449 1387l-18 7 9 16 17 -7zM1431 1394l-16 7 10 16 15 -7zM1415 1401l-15 8 11 16 14 -8zM1495 1391l-19 6 8 16 19 -6zM1476 1397l-19 6 10 16 17 -6zM1457 1403l-17 7 10 15 17 -6zM1440 1410l-15 7 11 15 14 -7z"/></g></g><g clip-path="url(#cw)"><circle cx="1545" cy="1277" r="92" fill="url(#hl)"/></g><g clip-path="url(#cw)"><path d="M1714 782L1713 782L1712 782L1712 781L1711 781L1710 781L1709 781L1708 781L1707 781L1706 781L1705 781L1704 781L1703 781L1702 781L1701 781L1699 781L1698 781L1697 781L1695 781L1694 781L1693 781L1691 781L1690 781L1688 781L1687 781L1685 781L1684 781L1682 781L1681 781L1679 781L1678 781L1676 781L1675 781L1673 781L1672 781L1671 781L1669 781L1668 781L1666 781L1665 781L1664 781L1663 781L1661 782L1660 782L1659 782L1658 782L1657 782L1656 782L1655 782L1654 782L1653 782L1652 782L1651 782L1651 782L1650 782L1649 782M1749 785L1748 785L1747 785L1746 785L1745 785L1744 785L1743 785L1741 785L1740 785L1738 785L1736 785L1735 785L1733 785L1731 785L1729 785L1726 784L1724 784L1722 784L1719 784L1717 784L1714 784L1712 784L1709 784L1706 784L1703 784L1701 784L1698 784L1695 784L1692 784L1689 784L1686 784L1683 784L1680 784L1677 784L1675 784L1672 784L1669 784L1666 784L1663 784L1660 785L1657 785L1655 785L1652 785L1649 785L1647 785L1644 785L1642 785L1639 785L1637 785L1635 785L1633 785L1631 785L1629 785L1627 785L1625 786L1623 786L1622 786L1620 786L1619 786L1618 786L1617 786L1616 786L1615 786L1614 786M1783 792L1783 792L1782 792L1781 792L1779 792L1778 791L1776 791L1774 791L1772 791L1770 791L1768 791L1765 791L1763 791L1760 791L1757 791L1754 790L1751 790L1748 790L1744 790L1741 790L1737 790L1733 790L1730 790L1726 790L1722 790L1718 790L1714 790L1710 790L1705 790L1701 790L1697 790L1693 790L1688 790L1684 790L1680 790L1676 790L1671 790L1667 790L1663 790L1659 790L1654 790L1650 790L1646 790L1642 790L1638 791L1634 791L1630 791L1627 791L1623 791L1620 791L1616 791L1613 791L1610 791L1607 791L1604 792L1601 792L1598 792L1596 792L1593 792L1591 792L1589 792L1587 793L1586 793L1584 793L1583 793L1582 793L1581 793L1580 793M1817 802L1816 801L1815 801L1814 801L1812 801L1810 801L1808 800L1806 800L1804 800L1801 800L1798 800L1795 799L1792 799L1788 799L1784 799L1781 799L1777 799L1772 799L1768 799L1764 798L1759 798L1754 798L1749 798L1744 798L1739 798L1734 798L1729 798L1724 798L1718 798L1713 798L1707 798L1702 798L1696 798L1691 798L1685 798L1679 798L1674 798L1668 798L1663 798L1657 798L1652 798L1646 798L1641 798L1635 799L1630 799L1625 799L1620 799L1615 799L1610 799L1605 799L1601 799L1596 800L1592 800L1588 800L1584 800L1580 800L1576 801L1572 801L1569 801L1566 801L1563 801L1560 802L1558 802L1555 802L1553 802L1551 802L1550 803L1548 803L1547 803L1546 803M1849 813L1848 813L1846 813L1845 812L1843 812L1840 812L1838 812L1835 811L1832 811L1828 811L1825 811L1821 810L1817 810L1812 810L1808 810L1803 810L1798 809L1793 809L1787 809L1782 809L1776 809L1770 809L1765 809L1758 808L1752 808L1746 808L1739 808L1733 808L1726 808L1720 808L1713 808L1706 808L1700 808L1693 808L1686 808L1679 808L1672 808L1665 808L1659 808L1652 808L1645 809L1638 809L1632 809L1625 809L1619 809L1613 809L1606 809L1600 810L1594 810L1588 810L1583 810L1577 810L1572 811L1567 811L1562 811L1557 811L1552 812L1548 812L1543 812L1540 812L1536 813L1532 813L1529 813L1526 814L1524 814L1521 814L1519 815L1517 815L1516 815L1515 816M1881 828L1880 828L1878 827L1876 827L1874 826L1872 826L1869 826L1866 825L1862 825L1859 825L1854 824L1850 824L1845 824L1840 823L1835 823L1830 823L1824 822L1818 822L1812 822L1806 822L1799 822L1793 821L1786 821L1779 821L1772 821L1764 821L1757 821L1749 821L1742 821L1734 820L1726 820L1718 820L1711 820L1703 820L1695 820L1687 820L1679 820L1671 821L1663 821L1655 821L1647 821L1639 821L1631 821L1623 821L1616 821L1608 822L1601 822L1594 822L1586 822L1579 823L1572 823L1566 823L1559 823L1553 824L1547 824L1541 824L1535 825L1529 825L1524 825L1519 826L1515 826L1510 826L1506 827L1502 827L1498 828L1495 828L1492 829L1490 829L1488 829L1486 830L1484 830L1483 831M1910 845L1909 844L1907 844L1905 843L1903 843L1900 842L1896 842L1892 841L1888 841L1884 840L1879 840L1874 839L1869 839L1863 839L1857 838L1851 838L1844 837L1837 837L1830 837L1823 837L1816 836L1808 836L1800 836L1792 836L1784 835L1776 835L1767 835L1759 835L1750 835L1741 835L1732 835L1724 835L1715 835L1706 835L1696 835L1687 835L1678 835L1669 835L1660 835L1651 835L1642 835L1633 835L1624 835L1616 836L1607 836L1598 836L1590 836L1582 837L1573 837L1565 837L1558 838L1550 838L1542 838L1535 839L1528 839L1521 840L1515 840L1508 840L1502 841L1496 841L1491 842L1486 842L1481 843L1476 843L1472 844L1468 844L1465 845L1462 846L1459 846L1457 847L1455 847L1454 848M1939 864L1937 863L1935 863L1932 862L1929 861L1926 861L1922 860L1917 859L1913 859L1908 858L1902 857L1896 857L1890 856L1884 856L1877 855L1870 855L1863 854L1855 854L1847 854L1839 853L1831 853L1822 852L1813 852L1804 852L1795 852L1786 851L1777 851L1767 851L1758 851L1748 851L1738 851L1728 851L1718 851L1708 851L1698 851L1688 851L1678 851L1668 851L1658 851L1648 851L1638 851L1628 851L1618 852L1609 852L1599 852L1589 852L1580 853L1571 853L1562 853L1553 854L1544 854L1535 855L1527 855L1519 856L1511 856L1503 857L1496 857L1489 858L1482 858L1475 859L1469 860L1463 860L1458 861L1452 862L1448 862L1443 863L1439 864L1436 864L1432 865L1430 866L1428 867L1426 867L1424 868M1966 886L1965 885L1963 884L1960 883L1957 883L1954 882L1950 881L1946 880L1941 879L1935 878L1930 878L1924 877L1917 876L1910 875L1903 875L1896 874L1888 874L1880 873L1871 872L1863 872L1854 871L1845 871L1835 871L1826 870L1816 870L1806 870L1796 869L1786 869L1775 869L1765 869L1754 868L1743 868L1733 868L1722 868L1711 868L1700 868L1689 868L1678 868L1667 868L1656 868L1645 869L1634 869L1623 869L1613 869L1602 870L1591 870L1581 870L1571 871L1561 871L1551 872L1541 872L1531 873L1522 873L1512 874L1504 874L1495 875L1486 875L1478 876L1470 877L1463 878L1455 878L1449 879L1442 880L1436 881L1430 882L1425 882L1420 883L1415 884L1411 885L1408 886L1404 887L1402 888L1400 889L1398 890M1991 910L1989 908L1987 907L1984 906L1981 905L1977 904L1972 903L1968 902L1962 901L1956 900L1950 899L1943 898L1936 897L1929 896L1921 895L1913 895L1904 894L1895 893L1886 893L1877 892L1867 891L1857 891L1847 890L1837 890L1826 889L1816 889L1805 889L1794 888L1782 888L1771 888L1760 888L1748 887L1736 887L1725 887L1713 887L1701 887L1689 887L1678 887L1666 887L1654 887L1642 888L1631 888L1619 888L1607 888L1596 889L1585 889L1573 890L1562 890L1551 891L1541 891L1530 892L1520 892L1509 893L1499 894L1490 894L1480 895L1471 896L1462 897L1454 898L1445 898L1437 899L1430 900L1423 901L1416 902L1410 903L1404 904L1398 905L1393 907L1389 908L1385 909L1381 910L1378 911L1376 912L1374 913M2014 935L2012 933L2009 932L2006 931L2002 929L1998 928L1993 927L1988 925L1982 924L1975 923L1969 922L1961 921L1954 920L1946 919L1937 918L1928 917L1919 916L1910 915L1900 914L1890 913L1879 913L1869 912L1858 911L1847 911L1836 910L1824 910L1813 909L1801 909L1789 909L1777 908L1765 908L1752 908L1740 908L1728 908L1715 907L1703 907L1690 907L1678 908L1665 908L1652 908L1640 908L1628 908L1615 909L1603 909L1591 909L1579 910L1567 910L1555 911L1543 911L1532 912L1520 913L1509 914L1498 914L1488 915L1477 916L1467 917L1457 918L1448 919L1439 920L1430 921L1421 922L1413 923L1405 924L1398 925L1391 927L1385 928L1379 929L1373 931L1368 932L1364 933L1360 935L1356 936L1354 937L1351 939L1350 940M2036 963L2034 962L2032 960L2029 958L2026 957L2021 955L2017 953L2011 952L2006 950L1999 949L1992 948L1985 946L1977 945L1969 944L1960 942L1951 941L1942 940L1932 939L1922 938L1912 937L1901 936L1890 935L1879 934L1868 934L1856 933L1844 932L1832 932L1820 931L1807 931L1795 930L1782 930L1769 930L1756 929L1743 929L1730 929L1717 929L1704 929L1691 929L1677 929L1664 929L1651 929L1638 930L1625 930L1612 930L1599 931L1586 931L1573 932L1561 932L1548 933L1536 934L1524 934L1512 935L1500 936L1489 937L1477 938L1466 939L1456 940L1445 941L1435 942L1425 943L1416 945L1407 946L1398 947L1390 949L1382 950L1374 951L1368 953L1361 954L1355 956L1350 958L1345 959L1341 961L1337 963L1334 964L1331 966L1330 968M2054 992L2052 990L2050 988L2047 986L2043 984L2038 982L2033 980L2028 979L2021 977L2015 975L2007 973L2000 972L1991 970L1983 969L1974 967L1964 966L1954 965L1944 963L1933 962L1923 961L1911 960L1900 959L1888 958L1876 957L1864 956L1851 956L1839 955L1826 954L1813 954L1800 953L1786 953L1773 952L1760 952L1746 952L1732 952L1719 952L1705 952L1691 952L1677 952L1664 952L1650 952L1636 952L1623 953L1609 953L1595 954L1582 954L1569 955L1556 955L1542 956L1530 957L1517 958L1504 959L1492 960L1480 961L1468 962L1457 963L1445 964L1434 965L1424 967L1414 968L1404 969L1394 971L1385 972L1376 974L1368 976L1360 977L1353 979L1346 981L1339 983L1334 985L1328 987L1324 988L1320 990L1316 992L1314 994L1312 997M2070 1022L2068 1019L2065 1017L2062 1015L2058 1013L2053 1010L2048 1008L2042 1006L2035 1004L2028 1002L2020 1000L2012 999L2003 997L1994 995L1985 993L1975 992L1965 990L1954 989L1943 987L1932 986L1920 985L1908 984L1896 983L1883 982L1871 981L1858 980L1844 979L1831 978L1818 978L1804 977L1790 977L1776 976L1762 976L1748 976L1734 975L1720 975L1706 975L1692 975L1677 975L1663 975L1649 976L1635 976L1621 976L1606 977L1592 977L1579 978L1565 979L1551 979L1538 980L1524 981L1511 982L1498 983L1485 984L1473 985L1461 987L1449 988L1437 989L1425 991L1414 992L1404 994L1393 995L1383 997L1374 999L1364 1001L1356 1003L1347 1004L1340 1006L1332 1009L1326 1011L1320 1013L1314 1015L1309 1017L1305 1019L1301 1022L1298 1024L1296 1027L1295 1029M2085 1055L2084 1053L2081 1050L2078 1047L2075 1045L2070 1042L2065 1040L2060 1037L2053 1035L2046 1033L2039 1030L2031 1028L2023 1026L2014 1024L2004 1022L1994 1020L1984 1019L1973 1017L1962 1015L1951 1014L1939 1012L1927 1011L1915 1009L1902 1008L1889 1007L1876 1006L1863 1005L1849 1004L1836 1003L1822 1002L1808 1002L1794 1001L1779 1001L1765 1000L1750 1000L1736 1000L1721 1000L1707 1000L1692 1000L1677 1000L1663 1000L1648 1000L1633 1000L1619 1001L1604 1001L1590 1002L1576 1003L1562 1003L1548 1004L1534 1005L1520 1006L1506 1007L1493 1008L1480 1010L1467 1011L1454 1012L1442 1014L1430 1015L1418 1017L1406 1019L1395 1020L1385 1022L1374 1024L1364 1026L1355 1028L1346 1030L1337 1032L1329 1035L1322 1037L1315 1039L1308 1042L1302 1044L1297 1047L1293 1049L1289 1052L1286 1055L1283 1058L1282 1060M2096 1087L2094 1084L2092 1081L2089 1078L2085 1076L2080 1073L2075 1070L2069 1067L2063 1064L2056 1062L2048 1059L2040 1057L2031 1055L2022 1052L2012 1050L2002 1048L1991 1046L1980 1044L1969 1042L1957 1041L1945 1039L1933 1037L1920 1036L1907 1034L1894 1033L1881 1032L1867 1031L1853 1030L1839 1029L1825 1028L1811 1027L1796 1027L1782 1026L1767 1026L1752 1025L1737 1025L1722 1025L1707 1025L1692 1025L1677 1025L1662 1025L1647 1025L1633 1026L1618 1026L1603 1027L1588 1027L1574 1028L1559 1029L1545 1030L1530 1031L1516 1032L1503 1033L1489 1034L1475 1036L1462 1037L1449 1039L1436 1040L1424 1042L1412 1044L1400 1046L1389 1048L1378 1050L1367 1052L1357 1054L1347 1056L1338 1059L1329 1061L1321 1064L1313 1066L1306 1069L1299 1072L1293 1075L1288 1077L1283 1080L1279 1083L1276 1086L1273 1089L1271 1092M2104 1120L2102 1117L2100 1113L2097 1110L2093 1107L2088 1104L2082 1101L2076 1098L2070 1095L2062 1092L2055 1089L2046 1086L2037 1084L2028 1081L2018 1079L2008 1076L1997 1074L1986 1072L1974 1070L1962 1068L1950 1066L1937 1064L1924 1063L1911 1061L1898 1060L1884 1059L1870 1057L1856 1056L1842 1055L1827 1054L1813 1053L1798 1053L1783 1052L1768 1051L1753 1051L1738 1051L1723 1051L1708 1050L1693 1050L1677 1050L1662 1051L1647 1051L1632 1051L1617 1052L1602 1052L1587 1053L1572 1054L1557 1055L1543 1056L1528 1057L1514 1058L1500 1059L1486 1061L1472 1062L1459 1064L1446 1066L1433 1067L1420 1069L1408 1071L1396 1073L1384 1076L1373 1078L1362 1080L1351 1083L1341 1085L1332 1088L1323 1091L1314 1093L1306 1096L1299 1099L1292 1102L1286 1105L1281 1108L1276 1112L1272 1115L1268 1118L1265 1122L1264 1125L1262 1128M2111 1157L2110 1153L2108 1149L2105 1146L2102 1142L2098 1139L2093 1135L2087 1132L2081 1128L2074 1125L2067 1122L2059 1119L2051 1116L2041 1113L2032 1110L2022 1108L2011 1105L2000 1103L1989 1100L1977 1098L1965 1096L1953 1094L1940 1092L1927 1090L1914 1089L1900 1087L1886 1086L1872 1084L1858 1083L1844 1082L1829 1081L1814 1080L1799 1079L1784 1078L1769 1078L1754 1077L1739 1077L1724 1077L1708 1077L1693 1077L1678 1077L1662 1077L1647 1077L1632 1078L1616 1078L1601 1079L1586 1080L1571 1080L1556 1081L1541 1083L1527 1084L1512 1085L1498 1086L1484 1088L1470 1090L1457 1091L1443 1093L1430 1095L1417 1097L1405 1099L1393 1102L1381 1104L1369 1106L1358 1109L1348 1112L1338 1115L1328 1117L1319 1120L1310 1123L1302 1127L1295 1130L1288 1133L1282 1136L1276 1140L1271 1143L1267 1147L1263 1151L1260 1154L1259 1158L1257 1162M2113 1190L2112 1186L2111 1182L2108 1178L2104 1174L2100 1170L2095 1167L2090 1163L2084 1159L2077 1156L2069 1153L2061 1149L2053 1146L2044 1143L2034 1140L2024 1137L2013 1134L2002 1132L1991 1129L1979 1127L1967 1124L1954 1122L1942 1120L1928 1118L1915 1116L1901 1115L1888 1113L1873 1112L1859 1110L1845 1109L1830 1108L1815 1107L1800 1106L1785 1105L1770 1105L1755 1104L1739 1104L1724 1104L1709 1103L1693 1103L1678 1103L1662 1104L1647 1104L1632 1104L1616 1105L1601 1106L1586 1107L1571 1107L1556 1108L1541 1110L1526 1111L1512 1112L1497 1114L1483 1115L1469 1117L1456 1119L1442 1121L1429 1123L1416 1125L1404 1128L1391 1130L1380 1133L1368 1135L1357 1138L1346 1141L1336 1144L1326 1147L1317 1150L1309 1154L1300 1157L1293 1161L1286 1164L1280 1168L1274 1171L1269 1175L1265 1179L1261 1183L1258 1187L1256 1191L1255 1195M2113 1224L2112 1219L2111 1215L2108 1211L2104 1207L2100 1202L2095 1198L2090 1194L2084 1191L2077 1187L2069 1183L2061 1180L2053 1176L2044 1173L2034 1170L2024 1167L2013 1164L2002 1161L1991 1158L1979 1156L1967 1153L1954 1151L1942 1149L1929 1146L1915 1144L1902 1143L1888 1141L1874 1139L1859 1138L1845 1137L1830 1135L1815 1134L1800 1133L1785 1133L1770 1132L1755 1131L1740 1131L1724 1131L1709 1130L1693 1130L1678 1130L1663 1131L1647 1131L1632 1132L1616 1132L1601 1133L1586 1134L1571 1135L1556 1136L1541 1137L1526 1138L1512 1140L1498 1142L1483 1143L1470 1145L1456 1147L1442 1149L1429 1152L1416 1154L1404 1156L1392 1159L1380 1162L1368 1165L1357 1168L1347 1171L1337 1174L1327 1177L1318 1181L1309 1184L1301 1188L1293 1191L1286 1195L1280 1199L1274 1203L1269 1207L1265 1211L1261 1216L1259 1220L1257 1224L1256 1229L1255 1233M2111 1261L2111 1257L2110 1252L2108 1248L2105 1243L2102 1239L2098 1234L2093 1230L2087 1226L2081 1222L2075 1218L2067 1214L2059 1210L2051 1207L2042 1203L2032 1200L2022 1196L2012 1193L2001 1190L1989 1187L1978 1185L1965 1182L1953 1179L1940 1177L1927 1175L1914 1173L1900 1171L1887 1169L1873 1167L1858 1166L1844 1164L1829 1163L1815 1162L1800 1161L1785 1160L1770 1159L1755 1159L1739 1158L1724 1158L1709 1158L1694 1158L1678 1158L1663 1158L1648 1158L1632 1159L1617 1159L1602 1160L1587 1161L1572 1162L1557 1163L1542 1165L1528 1166L1513 1168L1499 1169L1485 1171L1471 1173L1457 1175L1444 1178L1431 1180L1418 1182L1406 1185L1394 1188L1382 1191L1370 1194L1360 1197L1349 1200L1339 1204L1329 1207L1320 1211L1311 1214L1303 1218L1296 1222L1289 1226L1283 1230L1277 1235L1272 1239L1268 1243L1265 1248L1262 1252L1260 1257L1259 1261L1258 1266M2105 1294L2105 1289L2104 1284L2103 1280L2100 1275L2097 1270L2093 1266L2088 1261L2083 1257L2077 1253L2070 1248L2063 1244L2055 1240L2046 1237L2038 1233L2028 1229L2018 1226L2008 1223L1997 1219L1986 1216L1974 1213L1963 1211L1950 1208L1938 1206L1925 1203L1912 1201L1898 1199L1885 1197L1871 1195L1857 1194L1842 1192L1828 1191L1814 1190L1799 1189L1784 1188L1769 1187L1754 1186L1739 1186L1724 1185L1709 1185L1694 1185L1678 1185L1663 1185L1648 1186L1633 1186L1618 1187L1603 1188L1588 1189L1573 1190L1558 1191L1544 1192L1529 1194L1515 1196L1501 1197L1487 1199L1474 1201L1460 1204L1447 1206L1434 1208L1421 1211L1409 1214L1397 1217L1386 1220L1374 1223L1363 1226L1353 1230L1343 1233L1334 1237L1325 1241L1316 1245L1308 1249L1301 1253L1294 1257L1288 1261L1282 1266L1278 1270L1274 1275L1270 1279L1267 1284L1266 1289L1265 1294L1264 1299L1265 1304M2097 1331L2097 1326L2097 1321L2096 1316L2095 1311L2092 1306L2089 1301L2085 1296L2081 1292L2076 1287L2070 1283L2063 1279L2056 1274L2048 1270L2040 1266L2032 1262L2022 1259L2013 1255L2003 1252L1992 1248L1981 1245L1970 1242L1958 1239L1946 1237L1934 1234L1921 1232L1908 1229L1895 1227L1882 1225L1868 1223L1854 1222L1840 1220L1826 1219L1812 1217L1797 1216L1783 1215L1768 1214L1753 1214L1738 1213L1724 1213L1709 1213L1694 1213L1679 1213L1664 1213L1649 1213L1634 1214L1619 1215L1604 1215L1590 1216L1575 1217L1561 1219L1546 1220L1532 1222L1518 1223L1504 1225L1491 1227L1477 1230L1464 1232L1451 1234L1438 1237L1426 1240L1414 1242L1402 1245L1391 1249L1380 1252L1369 1255L1359 1259L1349 1263L1340 1266L1331 1270L1323 1274L1315 1278L1308 1283L1301 1287L1295 1292L1290 1296L1285 1301L1281 1306L1278 1311L1276 1315L1274 1320L1273 1325L1273 1330L1273 1336M2086 1362L2087 1357L2087 1352L2086 1347L2085 1341L2082 1336L2079 1331L2076 1327L2071 1322L2066 1317L2061 1313L2054 1308L2047 1304L2040 1300L2032 1296L2024 1292L2015 1288L2005 1284L1995 1281L1985 1277L1974 1274L1963 1271L1952 1268L1940 1265L1928 1262L1916 1260L1903 1257L1891 1255L1877 1253L1864 1251L1851 1249L1837 1248L1823 1246L1809 1245L1795 1244L1781 1243L1766 1242L1752 1241L1737 1241L1723 1240L1708 1240L1694 1240L1679 1240L1664 1240L1650 1241L1635 1241L1621 1242L1606 1243L1592 1244L1578 1245L1564 1246L1549 1248L1536 1250L1522 1251L1508 1253L1495 1255L1482 1257L1469 1260L1456 1262L1444 1265L1432 1268L1420 1271L1409 1274L1398 1277L1387 1281L1377 1284L1367 1288L1357 1292L1348 1295L1340 1299L1332 1304L1324 1308L1317 1312L1311 1317L1305 1321L1300 1326L1296 1331L1292 1336L1289 1341L1286 1346L1285 1351L1284 1356L1284 1361L1285 1366L1286 1372M2071 1397L2073 1392L2074 1387L2074 1381L2073 1376L2072 1371L2070 1366L2067 1361L2063 1356L2059 1351L2055 1346L2049 1342L2043 1337L2037 1333L2029 1329L2022 1324L2014 1320L2005 1316L1996 1313L1987 1309L1977 1306L1966 1302L1956 1299L1945 1296L1933 1293L1922 1290L1910 1288L1897 1285L1885 1283L1872 1281L1859 1279L1846 1277L1833 1275L1819 1274L1806 1273L1792 1271L1778 1270L1764 1270L1750 1269L1736 1268L1722 1268L1708 1268L1694 1268L1679 1268L1665 1268L1651 1268L1637 1269L1623 1270L1609 1270L1595 1271L1581 1273L1567 1274L1553 1275L1540 1277L1527 1279L1513 1281L1501 1283L1488 1285L1475 1288L1463 1290L1451 1293L1439 1296L1428 1299L1417 1302L1406 1305L1396 1309L1386 1312L1376 1316L1367 1320L1358 1324L1350 1328L1343 1332L1335 1337L1329 1341L1323 1346L1317 1350L1312 1355L1308 1360L1305 1365L1302 1370L1299 1375L1298 1380L1297 1385L1297 1391L1298 1396L1300 1401M2053 1431L2056 1425L2057 1420L2058 1415L2059 1410L2058 1404L2057 1399L2055 1394L2052 1389L2049 1384L2045 1379L2041 1375L2036 1370L2030 1365L2024 1361L2017 1357L2010 1352L2002 1348L1994 1344L1985 1341L1976 1337L1967 1333L1957 1330L1946 1327L1936 1324L1925 1321L1914 1318L1902 1315L1890 1313L1878 1311L1866 1308L1854 1306L1841 1305L1828 1303L1815 1301L1802 1300L1789 1299L1775 1298L1762 1297L1748 1296L1735 1296L1721 1295L1707 1295L1693 1295L1680 1295L1666 1295L1652 1296L1639 1296L1625 1297L1611 1298L1598 1299L1584 1300L1571 1301L1558 1303L1545 1304L1532 1306L1519 1308L1507 1310L1495 1313L1483 1315L1471 1318L1459 1320L1448 1323L1437 1326L1426 1330L1416 1333L1406 1336L1397 1340L1388 1344L1379 1348L1370 1352L1363 1356L1355 1360L1349 1365L1342 1369L1336 1374L1331 1378L1327 1383L1323 1388L1319 1393L1317 1398L1315 1403L1313 1408L1313 1414L1313 1419L1314 1424L1316 1429L1318 1435M2032 1463L2035 1457L2038 1452L2040 1447L2041 1442L2041 1436L2041 1431L2040 1426L2038 1421L2036 1416L2033 1411L2029 1406L2025 1402L2020 1397L2015 1392L2009 1388L2003 1384L1996 1380L1989 1375L1981 1372L1973 1368L1964 1364L1955 1361L1945 1357L1936 1354L1926 1351L1915 1348L1904 1345L1893 1342L1882 1340L1871 1338L1859 1336L1847 1333L1835 1332L1823 1330L1810 1328L1798 1327L1785 1326L1772 1325L1759 1324L1746 1323L1733 1323L1720 1322L1707 1322L1693 1322L1680 1322L1667 1322L1654 1322L1641 1323L1627 1324L1614 1325L1601 1326L1589 1327L1576 1328L1563 1330L1551 1331L1538 1333L1526 1335L1514 1337L1503 1340L1491 1342L1480 1345L1469 1348L1458 1350L1448 1353L1437 1357L1428 1360L1418 1363L1409 1367L1400 1371L1392 1375L1384 1379L1377 1383L1370 1387L1364 1391L1358 1396L1352 1401L1347 1405L1343 1410L1339 1415L1336 1420L1334 1425L1332 1430L1331 1435L1331 1440L1331 1445L1332 1451L1334 1456L1336 1461L1339 1466M2008 1492L2012 1487L2016 1482L2018 1477L2020 1472L2021 1467L2022 1462L2022 1457L2021 1452L2019 1447L2017 1442L2014 1437L2011 1432L2007 1427L2003 1423L1998 1418L1993 1414L1987 1410L1980 1406L1973 1402L1966 1398L1958 1394L1950 1390L1942 1387L1933 1384L1924 1380L1914 1377L1904 1374L1894 1372L1884 1369L1873 1367L1862 1364L1851 1362L1840 1360L1828 1358L1816 1357L1804 1355L1792 1354L1780 1352L1768 1351L1756 1350L1743 1350L1731 1349L1718 1349L1706 1349L1693 1348L1681 1348L1668 1349L1655 1349L1643 1350L1630 1350L1618 1351L1606 1352L1593 1353L1581 1355L1569 1356L1557 1358L1546 1360L1534 1362L1523 1364L1512 1366L1501 1369L1490 1371L1479 1374L1469 1377L1459 1380L1450 1383L1441 1386L1432 1390L1423 1393L1415 1397L1407 1401L1400 1405L1393 1409L1386 1413L1380 1417L1375 1422L1370 1426L1365 1431L1361 1436L1358 1440L1355 1445L1353 1450L1352 1455L1351 1460L1350 1465L1351 1470L1352 1475L1354 1480L1356 1485L1359 1491L1363 1496M1983 1519L1987 1515L1991 1510L1994 1505L1997 1500L1999 1495L2000 1490L2000 1485L2000 1480L2000 1475L1998 1470L1997 1466L1994 1461L1991 1456L1988 1452L1984 1448L1979 1443L1974 1439L1969 1435L1963 1431L1956 1427L1950 1423L1942 1419L1935 1416L1927 1412L1919 1409L1910 1406L1901 1403L1892 1400L1882 1397L1873 1395L1863 1393L1852 1390L1842 1388L1831 1386L1820 1384L1809 1383L1798 1381L1787 1380L1775 1379L1764 1378L1752 1377L1740 1376L1729 1375L1717 1375L1705 1375L1693 1375L1681 1375L1669 1375L1657 1375L1645 1376L1634 1376L1622 1377L1610 1378L1599 1380L1587 1381L1576 1382L1565 1384L1554 1386L1543 1388L1532 1390L1521 1392L1511 1394L1501 1397L1491 1400L1482 1402L1472 1405L1464 1408L1455 1412L1447 1415L1439 1419L1431 1422L1424 1426L1417 1430L1410 1434L1404 1438L1399 1442L1394 1446L1389 1451L1385 1455L1382 1460L1379 1464L1376 1469L1374 1474L1373 1479L1372 1483L1372 1488L1373 1493L1374 1498L1375 1503L1378 1508L1381 1513L1385 1518L1389 1523M1955 1544L1960 1539L1964 1535L1968 1530L1971 1525L1973 1521L1975 1516L1977 1511L1977 1507L1977 1502L1977 1497L1976 1493L1974 1488L1972 1484L1970 1479L1966 1475L1963 1471L1959 1467L1954 1463L1949 1459L1944 1455L1938 1451L1932 1447L1925 1444L1918 1440L1911 1437L1903 1434L1895 1431L1887 1428L1878 1425L1870 1423L1860 1420L1851 1418L1842 1415L1832 1413L1822 1411L1812 1410L1801 1408L1791 1407L1780 1405L1770 1404L1759 1403L1748 1402L1737 1402L1726 1401L1715 1401L1704 1400L1693 1400L1681 1400L1670 1401L1659 1401L1648 1401L1637 1402L1626 1403L1615 1404L1604 1405L1594 1406L1583 1408L1573 1409L1562 1411L1552 1413L1542 1415L1532 1417L1523 1419L1513 1422L1504 1424L1495 1427L1487 1430L1479 1433L1471 1436L1463 1439L1455 1443L1448 1446L1442 1450L1436 1454L1430 1457L1424 1461L1419 1465L1415 1469L1410 1474L1407 1478L1404 1482L1401 1487L1399 1491L1397 1496L1396 1500L1395 1505L1395 1510L1396 1514L1397 1519L1399 1524L1401 1528L1404 1533L1408 1537L1412 1542L1417 1547L1422 1551M1920 1569L1926 1565L1931 1561L1936 1557L1940 1552L1943 1548L1946 1544L1949 1539L1950 1535L1952 1530L1953 1526L1953 1522L1952 1517L1952 1513L1950 1509L1949 1505L1946 1501L1944 1496L1940 1492L1937 1488L1933 1485L1928 1481L1923 1477L1918 1474L1912 1470L1906 1467L1900 1464L1893 1460L1886 1457L1879 1455L1871 1452L1864 1449L1856 1447L1847 1444L1839 1442L1830 1440L1821 1438L1812 1436L1802 1434L1793 1433L1783 1431L1773 1430L1764 1429L1754 1428L1743 1427L1733 1426L1723 1426L1713 1426L1703 1425L1692 1425L1682 1425L1672 1425L1661 1426L1651 1426L1641 1427L1631 1428L1621 1429L1611 1430L1601 1431L1591 1432L1581 1434L1572 1436L1562 1437L1553 1439L1544 1441L1535 1444L1527 1446L1518 1448L1510 1451L1502 1454L1495 1457L1488 1460L1480 1463L1474 1466L1467 1469L1461 1473L1456 1476L1450 1480L1445 1483L1441 1487L1437 1491L1433 1495L1430 1499L1427 1503L1425 1507L1423 1512L1422 1516L1421 1520L1420 1524L1420 1529L1421 1533L1422 1538L1424 1542L1426 1546L1429 1551L1433 1555L1437 1559L1441 1563L1446 1568L1452 1572M1885 1590L1891 1587L1896 1583L1902 1579L1906 1575L1911 1572L1914 1568L1918 1564L1920 1560L1923 1556L1924 1552L1926 1548L1926 1544L1927 1540L1927 1536L1926 1532L1925 1528L1923 1524L1922 1520L1919 1516L1916 1512L1913 1509L1910 1505L1906 1502L1901 1498L1897 1495L1892 1492L1886 1489L1881 1486L1875 1483L1868 1480L1862 1477L1855 1474L1848 1472L1840 1470L1833 1467L1825 1465L1817 1463L1809 1461L1801 1460L1792 1458L1784 1457L1775 1455L1766 1454L1757 1453L1748 1452L1739 1451L1729 1451L1720 1450L1711 1450L1701 1450L1692 1449L1682 1450L1673 1450L1664 1450L1654 1451L1645 1451L1636 1452L1627 1453L1617 1454L1608 1455L1599 1456L1591 1458L1582 1459L1574 1461L1565 1463L1557 1465L1549 1467L1541 1469L1534 1471L1526 1474L1519 1476L1512 1479L1506 1482L1499 1485L1493 1488L1488 1491L1482 1494L1477 1497L1472 1501L1468 1504L1464 1508L1460 1511L1457 1515L1454 1519L1452 1522L1450 1526L1448 1530L1447 1534L1447 1538L1447 1542L1447 1546L1448 1550L1449 1554L1451 1558L1453 1562L1455 1566L1459 1570L1462 1574L1466 1578L1471 1581L1476 1585L1482 1589L1488 1592L1494 1596M1835 1613L1842 1610L1849 1607L1855 1604L1861 1601L1866 1598L1871 1594L1876 1591L1880 1588L1884 1584L1888 1581L1891 1577L1893 1573L1895 1570L1897 1566L1898 1563L1899 1559L1899 1555L1899 1552L1899 1548L1898 1545L1897 1541L1895 1538L1893 1534L1891 1531L1888 1527L1885 1524L1882 1521L1878 1518L1874 1515L1870 1512L1865 1509L1860 1506L1855 1503L1849 1501L1843 1498L1837 1496L1831 1494L1824 1492L1818 1489L1811 1488L1804 1486L1796 1484L1789 1482L1781 1481L1774 1480L1766 1478L1758 1477L1750 1476L1742 1475L1733 1475L1725 1474L1717 1474L1708 1473L1700 1473L1691 1473L1683 1473L1675 1473L1666 1473L1658 1474L1649 1474L1641 1475L1633 1476L1625 1477L1617 1478L1609 1479L1601 1480L1593 1482L1585 1483L1578 1485L1571 1487L1564 1489L1557 1491L1550 1493L1543 1495L1537 1498L1531 1500L1525 1503L1520 1505L1514 1508L1509 1511L1504 1514L1500 1517L1496 1520L1492 1523L1489 1526L1486 1529L1483 1533L1480 1536L1478 1540L1477 1543L1475 1547L1475 1550L1474 1554L1474 1557L1474 1561L1475 1565L1476 1568L1478 1572L1480 1576L1483 1579L1485 1583L1489 1586L1493 1590L1497 1593L1501 1596L1506 1599L1512 1603L1518 1606L1524 1609L1531 1611M1772 1631L1780 1629L1787 1627L1794 1625L1801 1623L1808 1621L1814 1619L1820 1616L1826 1614L1831 1611L1837 1609L1841 1606L1846 1603L1850 1600L1854 1597L1857 1594L1860 1591L1863 1588L1865 1585L1867 1582L1869 1578L1870 1575L1871 1572L1871 1569L1871 1566L1871 1563L1870 1559L1869 1556L1868 1553L1866 1550L1864 1547L1862 1544L1860 1541L1857 1538L1854 1536L1850 1533L1846 1530L1842 1528L1838 1525L1833 1523L1829 1521L1824 1518L1818 1516L1813 1514L1807 1512L1801 1510L1795 1509L1789 1507L1783 1505L1776 1504L1770 1503L1763 1501L1756 1500L1749 1499L1742 1498L1735 1498L1728 1497L1720 1496L1713 1496L1706 1496L1698 1495L1691 1495L1684 1495L1676 1496L1669 1496L1661 1496L1654 1497L1647 1497L1639 1498L1632 1499L1625 1500L1618 1501L1611 1502L1605 1503L1598 1505L1591 1506L1585 1508L1579 1510L1573 1511L1567 1513L1561 1515L1556 1517L1551 1520L1546 1522L1541 1524L1536 1527L1532 1529L1528 1532L1524 1535L1521 1537L1517 1540L1514 1543L1512 1546L1509 1549L1507 1552L1506 1555L1504 1558L1503 1561L1503 1564L1503 1568L1503 1571L1503 1574L1504 1577L1505 1580L1506 1583L1508 1587L1511 1590L1513 1593L1516 1596L1520 1599L1523 1602L1527 1605L1532 1607L1537 1610L1542 1613L1547 1615L1553 1618M1738 1636L1744 1635L1751 1634L1758 1632L1764 1631L1770 1630L1776 1628L1782 1626L1788 1624L1793 1622L1798 1620L1803 1618L1807 1616L1812 1614L1816 1611L1820 1609L1823 1607L1826 1604L1829 1602L1832 1599L1834 1596L1836 1594L1838 1591L1839 1588L1840 1586L1841 1583L1842 1580L1842 1577L1842 1575L1841 1572L1841 1569L1840 1567L1838 1564L1837 1562L1835 1559L1833 1557L1830 1554L1828 1552L1825 1549L1822 1547L1819 1545L1815 1543L1811 1541L1807 1539L1803 1537L1799 1535L1794 1533L1789 1531L1784 1530L1779 1528L1774 1527L1769 1525L1763 1524L1757 1523L1752 1522L1746 1521L1740 1520L1734 1519L1728 1519L1722 1518L1716 1518L1709 1517L1703 1517L1697 1517L1690 1517L1684 1517L1678 1517L1671 1517L1665 1517L1659 1518L1653 1518L1647 1519L1640 1520L1634 1521L1629 1522L1623 1523L1617 1524L1611 1525L1606 1526L1600 1528L1595 1529L1590 1531L1585 1532L1580 1534L1576 1536L1571 1538L1567 1540L1563 1542L1559 1544L1556 1546L1552 1548L1549 1551L1546 1553L1544 1556L1541 1558L1539 1561L1537 1563L1536 1566L1534 1568L1533 1571L1533 1574L1532 1576L1532 1579L1532 1582L1533 1584L1533 1587L1534 1590L1536 1593L1537 1595L1539 1598L1542 1600L1544 1603L1547 1606L1550 1608L1554 1610L1557 1613L1562 1615L1566 1617L1570 1619L1575 1621M1727 1634L1733 1633L1738 1632L1743 1631L1748 1630L1753 1629L1758 1628L1763 1626L1767 1625L1772 1623L1776 1622L1780 1620L1783 1618L1787 1616L1790 1615L1793 1613L1796 1611L1799 1609L1801 1607L1803 1604L1805 1602L1807 1600L1808 1598L1809 1596L1810 1594L1811 1591L1812 1589L1812 1587L1812 1585L1812 1583L1811 1580L1810 1578L1809 1576L1808 1574L1807 1572L1805 1570L1803 1568L1801 1566L1799 1564L1796 1562L1794 1560L1791 1559L1788 1557L1785 1555L1781 1554L1778 1552L1774 1550L1770 1549L1766 1548L1762 1546L1758 1545L1754 1544L1749 1543L1745 1542L1740 1541L1735 1540L1730 1540L1725 1539L1720 1538L1715 1538L1710 1538L1705 1537L1700 1537L1695 1537L1690 1537L1685 1537L1680 1537L1674 1537L1669 1537L1664 1538L1659 1538L1654 1539L1649 1539L1644 1540L1639 1541L1635 1542L1630 1543L1625 1544L1621 1545L1616 1546L1612 1547L1608 1549L1604 1550L1600 1551L1597 1553L1593 1554L1590 1556L1586 1558L1583 1560L1580 1561L1578 1563L1575 1565L1573 1567L1571 1569L1569 1571L1567 1573L1566 1575L1565 1577L1564 1580L1563 1582L1562 1584L1562 1586L1562 1588L1562 1591L1563 1593L1563 1595L1564 1597L1566 1599L1567 1601L1569 1604L1570 1606L1573 1608L1575 1610L1578 1612L1580 1614L1583 1616L1587 1617L1590 1619L1594 1621L1598 1623M1717 1630L1721 1629L1725 1628L1729 1628L1733 1627L1736 1626L1740 1625L1744 1624L1747 1623L1750 1622L1753 1620L1756 1619L1759 1618L1762 1616L1764 1615L1767 1614L1769 1612L1771 1611L1773 1609L1774 1608L1776 1606L1777 1604L1778 1603L1779 1601L1780 1599L1781 1598L1781 1596L1781 1594L1781 1593L1781 1591L1781 1589L1780 1588L1780 1586L1779 1584L1778 1583L1777 1581L1775 1580L1774 1578L1772 1577L1770 1575L1768 1574L1766 1572L1764 1571L1761 1570L1759 1569L1756 1567L1753 1566L1751 1565L1748 1564L1744 1563L1741 1562L1738 1561L1734 1560L1731 1560L1727 1559L1724 1558L1720 1558L1716 1557L1713 1557L1709 1556L1705 1556L1701 1556L1697 1556L1693 1556L1689 1556L1685 1556L1681 1556L1677 1556L1673 1556L1670 1556L1666 1557L1662 1557L1658 1558L1654 1558L1651 1559L1647 1559L1643 1560L1640 1561L1637 1562L1633 1563L1630 1564L1627 1565L1624 1566L1621 1567L1618 1568L1615 1569L1613 1571L1611 1572L1608 1573L1606 1575L1604 1576L1602 1578L1601 1579L1599 1581L1598 1582L1596 1584L1595 1585L1595 1587L1594 1589L1593 1590L1593 1592L1593 1594L1593 1595L1593 1597L1593 1599L1594 1600L1595 1602L1596 1604L1597 1605L1598 1607L1600 1608L1601 1610L1603 1611L1605 1613L1607 1614L1610 1616L1612 1617L1615 1619L1618 1620L1620 1621M1707 1623L1710 1622L1712 1622L1715 1621L1717 1621L1720 1620L1722 1620L1724 1619L1727 1618L1729 1617L1731 1617L1733 1616L1735 1615L1737 1614L1738 1613L1740 1612L1741 1611L1743 1610L1744 1609L1745 1608L1746 1607L1747 1606L1748 1605L1749 1604L1749 1603L1750 1602L1750 1600L1750 1599L1750 1598L1750 1597L1750 1596L1750 1595L1749 1594L1749 1593L1748 1592L1747 1590L1746 1589L1745 1588L1744 1587L1743 1586L1742 1585L1740 1584L1739 1584L1737 1583L1736 1582L1734 1581L1732 1580L1730 1579L1728 1579L1726 1578L1724 1577L1722 1577L1719 1576L1717 1576L1714 1575L1712 1575L1710 1574L1707 1574L1704 1574L1702 1573L1699 1573L1697 1573L1694 1573L1691 1573L1689 1573L1686 1573L1683 1573L1681 1573L1678 1573L1675 1573L1673 1574L1670 1574L1667 1574L1665 1575L1662 1575L1660 1576L1658 1576L1655 1577L1653 1577L1651 1578L1648 1578L1646 1579L1644 1580L1642 1581L1641 1581L1639 1582L1637 1583L1635 1584L1634 1585L1632 1586L1631 1587L1630 1588L1629 1589L1628 1590L1627 1591L1626 1592L1626 1593L1625 1594L1625 1595L1624 1597L1624 1598L1624 1599L1624 1600L1624 1601L1625 1602L1625 1603L1626 1604L1626 1606L1627 1607L1628 1608L1629 1609L1630 1610L1631 1611L1633 1612L1634 1613L1636 1614L1637 1615L1639 1615L1641 1616L1643 1617M1697 1614L1698 1613L1700 1613L1701 1613L1702 1613L1703 1612L1704 1612L1706 1612L1707 1611L1708 1611L1709 1611L1710 1610L1711 1610L1712 1609L1713 1609L1713 1608L1714 1608L1715 1607L1715 1607L1716 1606L1717 1606L1717 1605L1717 1605L1718 1604L1718 1604L1718 1603L1719 1603L1719 1602L1719 1601L1719 1601L1719 1600L1718 1600L1718 1599L1718 1599L1718 1598L1717 1598L1717 1597L1716 1596L1716 1596L1715 1595L1715 1595L1714 1594L1713 1594L1712 1594L1712 1593L1711 1593L1710 1592L1709 1592L1708 1592L1707 1591L1706 1591L1705 1591L1703 1590L1702 1590L1701 1590L1700 1590L1699 1589L1697 1589L1696 1589L1695 1589L1693 1589L1692 1589L1691 1589L1689 1589L1688 1589L1686 1589L1685 1589L1684 1589L1682 1589L1681 1589L1680 1589L1678 1589L1677 1589L1676 1589L1675 1590L1673 1590L1672 1590L1671 1590L1670 1591L1669 1591L1668 1591L1666 1592L1665 1592L1664 1593L1664 1593L1663 1593L1662 1594L1661 1594L1660 1595L1660 1595L1659 1596L1658 1596L1658 1597L1657 1597L1657 1598L1656 1598L1656 1599L1656 1600L1656 1600L1656 1601L1656 1601L1655 1602L1656 1602L1656 1603L1656 1603L1656 1604L1656 1605L1657 1605L1657 1606L1658 1606L1658 1607L1659 1607L1659 1608L1660 1608L1661 1609L1662 1609L1662 1610L1663 1610L1664 1610L1665 1611M1742 1636L1737 1636L1732 1635L1728 1634L1723 1633L1719 1630L1714 1628L1709 1625L1705 1621L1700 1617L1696 1613L1691 1608L1687 1602M1771 1631L1764 1632L1758 1632L1751 1632L1745 1631L1738 1630L1732 1628L1725 1626L1719 1623L1712 1620L1706 1616L1700 1612L1693 1607L1687 1602M1801 1624L1793 1626L1785 1627L1777 1627L1768 1628L1760 1627L1752 1626L1744 1625L1735 1623L1727 1621L1719 1618L1711 1615L1703 1611L1695 1607L1687 1602M1842 1610L1832 1613L1823 1616L1813 1619L1803 1620L1794 1622L1784 1622L1774 1623L1764 1622L1755 1621L1745 1620L1735 1618L1725 1616L1716 1613L1706 1610L1697 1606L1687 1602M1884 1591L1873 1596L1863 1601L1852 1605L1841 1608L1830 1611L1819 1613L1808 1615L1797 1616L1786 1617L1775 1618L1764 1617L1753 1617L1742 1615L1731 1614L1720 1612L1709 1609L1698 1606L1687 1602M1935 1560L1924 1567L1913 1573L1902 1579L1891 1585L1879 1590L1868 1595L1856 1599L1844 1602L1833 1605L1821 1608L1808 1610L1796 1611L1784 1612L1772 1613L1760 1613L1748 1612L1735 1611L1723 1610L1711 1608L1699 1605L1687 1602M2001 1501L1991 1511L1982 1520L1971 1529L1961 1538L1950 1546L1939 1553L1927 1561L1916 1567L1904 1573L1892 1579L1880 1584L1868 1589L1855 1593L1843 1597L1830 1600L1817 1603L1804 1605L1791 1606L1778 1608L1765 1608L1752 1608L1739 1608L1726 1607L1713 1606L1700 1605L1687 1602M2081 1376L2075 1389L2068 1402L2062 1415L2054 1428L2047 1440L2038 1452L2030 1463L2021 1474L2011 1485L2002 1495L1992 1505L1981 1514L1971 1523L1960 1532L1948 1540L1937 1547L1925 1555L1913 1561L1900 1568L1888 1573L1875 1579L1862 1583L1849 1588L1836 1592L1823 1595L1810 1598L1796 1600L1783 1602L1769 1604L1755 1605L1742 1605L1728 1605L1714 1605L1701 1604L1687 1602M2108 1141L2111 1156L2112 1171L2113 1186L2114 1201L2114 1216L2113 1231L2112 1246L2110 1261L2108 1275L2105 1290L2102 1304L2098 1318L2094 1332L2089 1346L2084 1359L2078 1373L2071 1386L2065 1399L2058 1411L2050 1423L2042 1435L2033 1447L2024 1458L2015 1469L2006 1479L1996 1490L1985 1499L1975 1509L1964 1518L1952 1526L1941 1534L1929 1542L1917 1549L1904 1556L1892 1562L1879 1568L1866 1574L1853 1579L1840 1583L1826 1587L1813 1591L1799 1594L1785 1597L1771 1599L1757 1601L1743 1602L1729 1603L1715 1603L1701 1603L1687 1602M1942 867L1954 876L1966 886L1977 896L1988 907L1999 918L2009 929L2019 941L2028 953L2037 965L2045 978L2053 991L2060 1004L2067 1017L2073 1031L2079 1044L2084 1058L2089 1072L2093 1087L2097 1101L2100 1115L2102 1130L2105 1144L2106 1159L2107 1173L2108 1188L2108 1203L2107 1217L2106 1232L2104 1246L2102 1260L2099 1275L2096 1289L2093 1303L2088 1316L2084 1330L2079 1344L2073 1357L2067 1370L2060 1383L2054 1395L2046 1407L2038 1419L2030 1431L2022 1442L2013 1453L2003 1464L1993 1475L1983 1485L1973 1494L1962 1504L1951 1513L1940 1521L1928 1529L1916 1537L1904 1544L1892 1551L1879 1558L1866 1564L1853 1570L1840 1575L1827 1580L1813 1584L1799 1588L1786 1591L1772 1594L1758 1597L1744 1599L1730 1600L1715 1602L1701 1602L1687 1602M1773 790L1788 793L1803 797L1817 802L1832 807L1846 812L1859 818L1873 825L1886 832L1899 839L1912 847L1924 855L1936 864L1948 873L1959 883L1970 893L1981 903L1991 914L2000 925L2010 936L2018 948L2027 960L2035 972L2042 984L2049 997L2055 1010L2061 1023L2067 1036L2072 1050L2076 1064L2080 1077L2084 1091L2087 1105L2089 1119L2091 1133L2093 1147L2094 1162L2094 1176L2094 1190L2093 1204L2092 1218L2091 1232L2089 1247L2086 1260L2083 1274L2080 1288L2076 1302L2072 1315L2067 1328L2061 1341L2056 1354L2050 1367L2043 1380L2036 1392L2029 1404L2021 1416L2013 1427L2004 1438L1995 1449L1986 1460L1976 1470L1966 1480L1956 1490L1945 1499L1934 1508L1923 1517L1912 1525L1900 1533L1888 1541L1876 1548L1863 1555L1851 1561L1838 1567L1825 1572L1811 1577L1798 1582L1784 1586L1771 1590L1757 1593L1743 1596L1729 1598L1715 1600L1701 1601L1687 1602M1726 783L1741 784L1756 787L1770 789L1785 793L1799 797L1813 801L1826 806L1840 811L1853 817L1866 824L1879 830L1891 838L1903 845L1915 853L1926 862L1937 871L1948 880L1958 890L1968 900L1977 910L1986 921L1995 932L2003 943L2011 955L2018 967L2025 979L2032 991L2038 1003L2043 1016L2048 1029L2053 1042L2057 1055L2061 1069L2064 1082L2067 1096L2069 1109L2071 1123L2072 1137L2073 1151L2074 1164L2074 1178L2073 1192L2072 1206L2071 1220L2069 1234L2067 1247L2064 1261L2061 1274L2057 1288L2053 1301L2048 1314L2044 1327L2038 1340L2033 1353L2026 1365L2020 1377L2013 1390L2006 1401L1998 1413L1990 1424L1982 1436L1973 1446L1964 1457L1954 1467L1945 1477L1935 1487L1924 1496L1914 1505L1903 1514L1892 1522L1880 1530L1869 1538L1857 1545L1845 1552L1833 1559L1820 1565L1807 1571L1794 1576L1781 1581L1768 1585L1755 1589L1742 1593L1728 1596L1715 1598L1701 1601L1687 1602M1710 781L1724 782L1738 784L1752 786L1766 789L1780 792L1793 796L1806 800L1819 805L1831 811L1844 816L1856 822L1868 829L1879 836L1890 844L1901 852L1912 860L1922 869L1932 878L1941 887L1951 897L1959 907L1968 917L1976 928L1983 939L1990 950L1997 962L2003 973L2009 985L2015 997L2020 1010L2025 1022L2029 1035L2033 1048L2036 1061L2039 1074L2041 1087L2044 1100L2045 1114L2046 1127L2047 1141L2048 1154L2048 1168L2047 1181L2046 1195L2045 1208L2043 1222L2041 1235L2039 1248L2036 1262L2033 1275L2029 1288L2025 1301L2020 1314L2015 1327L2010 1339L2004 1352L1998 1364L1992 1376L1985 1388L1978 1400L1971 1411L1963 1423L1955 1434L1947 1445L1938 1455L1929 1465L1920 1475L1910 1485L1901 1495L1891 1504L1880 1512L1870 1521L1859 1529L1848 1537L1836 1544L1825 1551L1813 1558L1801 1564L1789 1570L1777 1576L1764 1581L1752 1585L1739 1590L1726 1594L1713 1597L1700 1600L1687 1602M1708 781L1721 782L1734 784L1747 786L1760 789L1773 792L1785 796L1797 800L1809 805L1820 810L1832 815L1843 821L1854 828L1864 835L1874 842L1884 850L1894 858L1903 867L1912 875L1921 885L1929 894L1937 904L1944 914L1952 924L1958 935L1965 946L1971 957L1977 969L1982 980L1987 992L1992 1004L1996 1016L2000 1029L2003 1041L2006 1054L2009 1066L2011 1079L2013 1092L2014 1105L2015 1118L2016 1132L2017 1145L2017 1158L2016 1171L2015 1184L2014 1198L2013 1211L2011 1224L2009 1237L2006 1250L2003 1263L2000 1276L1996 1289L1992 1302L1988 1315L1983 1327L1978 1340L1973 1352L1967 1364L1961 1376L1954 1388L1948 1400L1941 1411L1934 1422L1926 1433L1918 1444L1910 1454L1902 1465L1893 1475L1884 1485L1875 1494L1865 1503L1856 1512L1846 1521L1836 1529L1825 1537L1815 1544L1804 1552L1793 1558L1782 1565L1770 1571L1759 1577L1747 1582L1735 1587L1724 1591L1712 1596L1699 1599L1687 1602M1706 781L1718 782L1730 784L1741 786L1753 789L1764 792L1775 795L1786 799L1797 804L1807 809L1817 815L1827 821L1837 827L1846 834L1855 841L1864 849L1873 856L1881 865L1889 873L1897 882L1904 892L1911 901L1918 911L1924 921L1930 932L1936 942L1941 953L1946 964L1951 976L1955 987L1959 999L1963 1011L1966 1023L1969 1035L1972 1048L1974 1060L1976 1073L1978 1085L1979 1098L1980 1111L1981 1124L1981 1137L1981 1150L1981 1162L1980 1176L1979 1189L1978 1202L1976 1215L1974 1228L1972 1240L1969 1253L1966 1266L1963 1279L1960 1292L1956 1304L1952 1317L1947 1329L1943 1341L1938 1354L1932 1366L1927 1377L1921 1389L1915 1401L1908 1412L1902 1423L1895 1434L1888 1445L1880 1455L1872 1465L1864 1476L1856 1485L1848 1495L1839 1504L1830 1513L1821 1522L1812 1530L1802 1538L1793 1546L1783 1553L1773 1560L1763 1567L1752 1573L1742 1579L1731 1584L1720 1590L1709 1594L1698 1599L1687 1602M1703 781L1714 782L1724 784L1734 786L1744 788L1754 791L1764 795L1773 799L1783 804L1792 809L1801 814L1809 820L1818 826L1826 833L1834 840L1841 847L1849 855L1856 863L1863 872L1869 881L1876 890L1882 899L1887 909L1893 919L1898 929L1903 939L1908 950L1912 961L1916 972L1920 983L1923 995L1926 1006L1929 1018L1932 1030L1934 1042L1936 1054L1938 1067L1939 1079L1940 1092L1941 1104L1942 1117L1942 1129L1942 1142L1942 1155L1941 1168L1940 1181L1939 1193L1938 1206L1936 1219L1934 1232L1932 1245L1930 1257L1927 1270L1924 1283L1921 1295L1917 1308L1913 1320L1909 1332L1905 1344L1901 1356L1896 1368L1891 1380L1885 1392L1880 1403L1874 1414L1868 1425L1862 1436L1856 1447L1849 1457L1842 1468L1835 1478L1828 1487L1820 1497L1813 1506L1805 1515L1797 1524L1788 1532L1780 1541L1771 1548L1762 1556L1754 1563L1744 1570L1735 1576L1726 1582L1716 1588L1707 1593L1697 1598L1687 1602M1691 781L1700 781L1709 782L1718 784L1726 786L1735 788L1743 791L1751 795L1759 799L1767 803L1775 808L1782 813L1789 819L1796 825L1803 832L1810 839L1816 846L1822 854L1828 862L1834 870L1840 879L1845 888L1850 897L1855 907L1859 916L1864 926L1868 937L1871 947L1875 958L1878 969L1881 980L1884 991L1887 1003L1889 1014L1892 1026L1893 1038L1895 1050L1897 1062L1898 1074L1899 1086L1899 1099L1900 1111L1900 1124L1900 1136L1900 1149L1900 1161L1899 1174L1898 1187L1897 1199L1895 1212L1894 1225L1892 1237L1890 1250L1888 1263L1885 1275L1883 1287L1880 1300L1877 1312L1873 1324L1870 1337L1866 1349L1862 1360L1858 1372L1854 1384L1849 1395L1844 1407L1839 1418L1834 1429L1829 1440L1823 1451L1818 1461L1812 1471L1806 1481L1799 1491L1793 1501L1786 1510L1779 1519L1773 1528L1765 1536L1758 1544L1751 1552L1743 1560L1736 1567L1728 1574L1720 1580L1712 1586L1704 1592L1695 1597L1687 1602M1689 781L1696 781L1703 782L1710 783L1717 785L1724 788L1731 791L1737 795L1744 799L1750 803L1756 808L1762 813L1768 819L1774 825L1779 831L1784 838L1789 846L1794 853L1799 861L1803 869L1808 878L1812 887L1816 896L1820 905L1823 915L1827 925L1830 935L1833 945L1836 956L1839 966L1841 977L1843 988L1845 1000L1847 1011L1849 1023L1850 1034L1852 1046L1853 1058L1854 1070L1855 1082L1855 1094L1856 1107L1856 1119L1856 1131L1856 1144L1855 1156L1855 1169L1854 1181L1853 1194L1852 1206L1851 1219L1850 1232L1848 1244L1846 1257L1844 1269L1842 1281L1840 1294L1838 1306L1835 1318L1832 1330L1829 1342L1826 1354L1823 1366L1820 1378L1816 1389L1812 1401L1808 1412L1804 1423L1800 1434L1796 1445L1791 1456L1786 1466L1782 1476L1777 1486L1772 1496L1766 1506L1761 1515L1755 1524L1750 1533L1744 1541L1738 1549L1732 1557L1726 1565L1720 1572L1713 1579L1707 1585L1700 1591L1694 1597L1687 1602M1687 781L1692 781L1698 782L1703 783L1708 785L1713 788L1718 791L1723 794L1727 798L1732 803L1737 808L1741 813L1745 818L1749 825L1753 831L1757 838L1761 845L1764 852L1768 860L1771 868L1774 877L1777 886L1780 895L1783 904L1786 913L1788 923L1791 933L1793 943L1795 954L1797 964L1799 975L1800 986L1802 997L1803 1009L1805 1020L1806 1032L1807 1043L1808 1055L1808 1067L1809 1079L1809 1091L1810 1103L1810 1115L1810 1128L1810 1140L1810 1152L1809 1165L1809 1177L1808 1190L1807 1202L1806 1215L1806 1227L1804 1240L1803 1252L1802 1264L1800 1277L1799 1289L1797 1301L1795 1314L1793 1326L1791 1338L1789 1350L1786 1361L1784 1373L1781 1385L1779 1396L1776 1408L1773 1419L1770 1430L1767 1441L1763 1452L1760 1462L1756 1472L1753 1483L1749 1493L1745 1502L1741 1512L1737 1521L1733 1530L1729 1539L1725 1547L1720 1555L1716 1563L1711 1570L1707 1577L1702 1584L1697 1591L1692 1597L1687 1602M1685 781L1688 781L1692 782L1695 783L1698 785L1701 788L1704 791L1707 794L1710 798L1713 803L1716 807L1719 813L1721 818L1724 824L1727 831L1729 838L1731 845L1734 852L1736 860L1738 868L1740 876L1742 885L1744 894L1745 903L1747 913L1749 922L1750 932L1752 942L1753 953L1754 963L1755 974L1756 985L1757 996L1758 1007L1759 1019L1760 1030L1760 1042L1761 1053L1761 1065L1762 1077L1762 1089L1762 1101L1762 1113L1763 1125L1763 1138L1762 1150L1762 1162L1762 1175L1762 1187L1761 1200L1761 1212L1760 1224L1759 1237L1759 1249L1758 1261L1757 1274L1756 1286L1755 1298L1754 1310L1753 1323L1751 1335L1750 1347L1749 1358L1747 1370L1745 1382L1744 1393L1742 1405L1740 1416L1738 1427L1736 1438L1734 1449L1732 1459L1730 1470L1728 1480L1726 1490L1723 1500L1721 1510L1718 1519L1716 1528L1713 1537L1711 1545L1708 1554L1705 1562L1702 1569L1699 1577L1696 1584L1693 1590L1690 1596L1687 1602M1683 781L1684 781L1685 782L1687 783L1688 785L1689 788L1690 791L1692 794L1693 798L1694 803L1695 807L1696 813L1697 818L1698 824L1699 831L1700 837L1701 845L1702 852L1703 860L1704 868L1705 876L1705 885L1706 894L1707 903L1708 912L1708 922L1709 932L1709 942L1710 952L1711 963L1711 974L1711 984L1712 995L1712 1007L1713 1018L1713 1029L1713 1041L1714 1052L1714 1064L1714 1076L1714 1088L1714 1100L1714 1112L1714 1124L1715 1137L1715 1149L1715 1161L1714 1173L1714 1186L1714 1198L1714 1211L1714 1223L1714 1235L1714 1248L1713 1260L1713 1272L1713 1285L1712 1297L1712 1309L1711 1321L1711 1333L1711 1345L1710 1357L1709 1369L1709 1380L1708 1392L1708 1403L1707 1415L1706 1426L1706 1437L1705 1447L1704 1458L1703 1469L1703 1479L1702 1489L1701 1499L1700 1509L1699 1518L1698 1527L1697 1536L1696 1545L1695 1553L1694 1561L1693 1569L1692 1576L1691 1583L1689 1590L1688 1596L1687 1602M1681 781L1680 781L1679 782L1678 783L1678 785L1677 788L1676 791L1676 794L1675 798L1674 803L1674 808L1673 813L1673 818L1672 824L1672 831L1671 838L1671 845L1670 852L1670 860L1669 868L1669 876L1669 885L1668 894L1668 903L1668 913L1668 922L1667 932L1667 942L1667 953L1667 963L1666 974L1666 985L1666 996L1666 1007L1666 1018L1666 1029L1666 1041L1666 1053L1666 1064L1666 1076L1666 1088L1666 1100L1666 1112L1666 1125L1666 1137L1666 1149L1667 1161L1667 1174L1667 1186L1667 1198L1667 1211L1668 1223L1668 1235L1668 1248L1668 1260L1669 1272L1669 1285L1669 1297L1670 1309L1670 1321L1670 1333L1671 1345L1671 1357L1672 1369L1672 1380L1673 1392L1673 1403L1674 1415L1674 1426L1675 1437L1675 1448L1676 1458L1676 1469L1677 1479L1677 1489L1678 1499L1679 1509L1679 1518L1680 1527L1681 1536L1681 1545L1682 1553L1683 1561L1683 1569L1684 1576L1685 1583L1686 1590L1686 1596L1687 1602M1679 781L1676 781L1673 782L1670 784L1668 786L1665 788L1662 791L1660 795L1657 799L1655 803L1653 808L1651 813L1648 819L1646 825L1644 831L1642 838L1641 845L1639 853L1637 860L1635 869L1634 877L1632 886L1631 895L1629 904L1628 913L1627 923L1626 933L1625 943L1624 953L1623 964L1622 975L1621 986L1621 997L1620 1008L1620 1019L1619 1031L1619 1042L1618 1054L1618 1066L1618 1078L1618 1090L1618 1102L1618 1114L1618 1126L1618 1138L1618 1150L1619 1163L1619 1175L1620 1188L1620 1200L1621 1212L1621 1225L1622 1237L1623 1249L1624 1262L1624 1274L1625 1286L1626 1299L1628 1311L1629 1323L1630 1335L1631 1347L1633 1359L1634 1370L1635 1382L1637 1393L1639 1405L1640 1416L1642 1427L1644 1438L1646 1449L1647 1460L1649 1470L1651 1480L1653 1490L1656 1500L1658 1510L1660 1519L1662 1528L1664 1537L1667 1545L1669 1554L1672 1562L1674 1569L1677 1577L1679 1584L1682 1590L1684 1596L1687 1602M1677 781L1672 781L1667 782L1662 784L1658 786L1653 788L1649 791L1644 795L1640 799L1636 803L1632 808L1628 813L1625 819L1621 825L1617 832L1614 839L1611 846L1608 853L1605 861L1602 869L1599 878L1596 887L1594 896L1591 905L1589 914L1587 924L1585 934L1583 944L1582 955L1580 965L1578 976L1577 987L1576 998L1575 1010L1574 1021L1573 1033L1572 1044L1572 1056L1571 1068L1571 1080L1570 1092L1570 1104L1570 1116L1570 1129L1571 1141L1571 1153L1571 1166L1572 1178L1573 1190L1574 1203L1575 1215L1576 1228L1577 1240L1578 1253L1579 1265L1581 1277L1583 1290L1584 1302L1586 1314L1588 1326L1590 1338L1592 1350L1595 1362L1597 1373L1599 1385L1602 1397L1605 1408L1608 1419L1610 1430L1613 1441L1617 1452L1620 1462L1623 1473L1626 1483L1630 1493L1633 1502L1637 1512L1641 1521L1645 1530L1649 1539L1653 1547L1657 1555L1661 1563L1665 1570L1669 1577L1674 1584L1678 1591L1683 1597L1687 1602M1675 781L1668 781L1661 782L1655 784L1648 786L1642 789L1636 792L1630 795L1624 799L1618 804L1612 809L1607 814L1602 820L1596 826L1591 832L1587 839L1582 847L1578 854L1573 862L1569 870L1565 879L1562 888L1558 897L1555 906L1551 916L1548 926L1545 936L1543 946L1540 957L1538 968L1536 979L1534 990L1532 1001L1530 1012L1529 1024L1528 1036L1527 1047L1526 1059L1525 1071L1525 1083L1524 1096L1524 1108L1524 1120L1524 1132L1524 1145L1525 1157L1525 1170L1526 1182L1527 1195L1528 1207L1530 1220L1531 1232L1533 1245L1535 1257L1536 1270L1539 1282L1541 1294L1543 1307L1546 1319L1549 1331L1551 1343L1555 1355L1558 1366L1561 1378L1565 1390L1568 1401L1572 1412L1576 1423L1580 1434L1584 1445L1588 1456L1593 1466L1597 1476L1602 1486L1607 1496L1612 1506L1617 1515L1622 1524L1628 1533L1633 1541L1639 1549L1645 1557L1650 1565L1656 1572L1662 1579L1668 1585L1675 1591L1681 1597L1687 1602M1673 781L1664 781L1656 782L1647 784L1639 786L1631 789L1623 792L1615 796L1608 800L1601 804L1593 809L1586 815L1580 820L1573 827L1567 833L1561 840L1555 848L1549 855L1543 864L1538 872L1533 881L1528 890L1524 899L1519 908L1515 918L1511 928L1507 938L1504 949L1501 960L1498 971L1495 982L1492 993L1490 1004L1488 1016L1486 1028L1484 1039L1483 1051L1482 1063L1481 1076L1480 1088L1479 1100L1479 1113L1479 1125L1479 1138L1480 1150L1480 1163L1481 1175L1482 1188L1483 1201L1485 1213L1486 1226L1488 1238L1490 1251L1493 1263L1495 1276L1498 1288L1501 1301L1504 1313L1507 1325L1511 1337L1514 1349L1518 1361L1522 1373L1527 1384L1531 1396L1536 1407L1541 1418L1546 1429L1551 1440L1556 1451L1562 1461L1567 1471L1573 1481L1579 1491L1586 1501L1592 1510L1598 1519L1605 1528L1612 1536L1619 1544L1626 1552L1633 1560L1641 1567L1648 1574L1656 1580L1663 1586L1671 1592L1679 1597L1687 1602M1661 781L1651 783L1641 784L1631 786L1621 789L1612 792L1602 796L1593 800L1585 805L1576 810L1567 815L1559 821L1551 828L1544 834L1536 842L1529 849L1522 857L1515 865L1509 874L1503 882L1497 892L1491 901L1486 911L1481 921L1476 931L1471 941L1467 952L1463 963L1459 974L1456 985L1453 997L1450 1008L1447 1020L1445 1032L1443 1044L1441 1056L1440 1069L1439 1081L1438 1093L1437 1106L1437 1119L1437 1131L1437 1144L1437 1157L1438 1169L1439 1182L1440 1195L1442 1208L1443 1220L1445 1233L1448 1246L1450 1258L1453 1271L1456 1284L1459 1296L1463 1308L1467 1321L1471 1333L1475 1345L1479 1357L1484 1369L1489 1380L1494 1392L1500 1403L1505 1415L1511 1426L1517 1437L1523 1447L1530 1458L1537 1468L1544 1478L1551 1488L1558 1497L1565 1506L1573 1515L1581 1524L1589 1532L1597 1541L1606 1548L1614 1556L1623 1563L1632 1570L1641 1576L1650 1582L1659 1588L1668 1593L1678 1598L1687 1602M1658 781L1646 783L1635 784L1623 787L1612 789L1601 793L1591 796L1580 801L1570 805L1560 811L1550 816L1541 822L1532 829L1523 836L1514 843L1505 851L1497 859L1489 867L1482 876L1475 885L1468 894L1461 904L1455 914L1449 924L1443 934L1438 945L1433 956L1428 967L1424 978L1420 990L1416 1001L1413 1013L1410 1025L1407 1037L1404 1050L1402 1062L1401 1075L1399 1087L1398 1100L1397 1113L1397 1126L1397 1138L1397 1151L1397 1164L1398 1177L1399 1190L1401 1203L1403 1216L1405 1229L1407 1242L1410 1255L1413 1267L1416 1280L1419 1293L1423 1305L1427 1318L1432 1330L1437 1342L1442 1354L1447 1366L1452 1378L1458 1390L1464 1401L1471 1412L1477 1423L1484 1434L1491 1445L1498 1456L1506 1466L1514 1476L1522 1485L1530 1495L1539 1504L1547 1513L1556 1522L1565 1530L1574 1538L1584 1546L1594 1553L1603 1560L1613 1567L1624 1573L1634 1579L1644 1584L1655 1590L1665 1594L1676 1599L1687 1602M1655 782L1642 783L1630 785L1617 787L1605 790L1593 793L1581 797L1569 801L1557 806L1546 811L1535 817L1524 823L1514 830L1504 837L1494 844L1485 852L1475 860L1466 869L1458 878L1450 887L1442 897L1434 907L1427 917L1420 927L1414 938L1408 949L1402 960L1397 971L1392 983L1387 995L1383 1007L1379 1019L1375 1031L1372 1044L1369 1056L1367 1069L1365 1082L1363 1095L1362 1108L1361 1121L1361 1134L1360 1147L1361 1160L1361 1173L1362 1186L1363 1200L1365 1213L1367 1226L1369 1239L1372 1252L1375 1265L1378 1278L1382 1291L1386 1303L1391 1316L1395 1328L1400 1341L1406 1353L1411 1365L1417 1377L1424 1389L1430 1400L1437 1412L1444 1423L1452 1434L1460 1444L1468 1455L1476 1465L1485 1475L1493 1485L1503 1494L1512 1503L1521 1512L1531 1521L1541 1529L1551 1537L1562 1544L1572 1551L1583 1558L1594 1565L1605 1571L1617 1577L1628 1582L1640 1587L1651 1591L1663 1595L1675 1599L1687 1602M1653 782L1639 783L1626 785L1612 787L1598 790L1585 794L1572 798L1559 802L1547 807L1535 812L1522 818L1511 824L1499 831L1488 838L1477 846L1467 854L1457 862L1447 871L1437 880L1428 890L1419 900L1411 910L1403 920L1395 931L1388 942L1381 953L1375 965L1369 976L1363 988L1358 1000L1353 1013L1349 1025L1345 1038L1341 1051L1338 1064L1336 1077L1333 1090L1331 1103L1330 1116L1329 1130L1328 1143L1328 1156L1328 1170L1329 1183L1330 1197L1331 1210L1333 1223L1335 1237L1338 1250L1341 1263L1345 1276L1348 1290L1352 1302L1357 1315L1362 1328L1367 1340L1373 1353L1379 1365L1385 1377L1392 1389L1399 1401L1406 1412L1414 1423L1422 1434L1430 1445L1439 1455L1448 1466L1457 1476L1466 1485L1476 1495L1486 1504L1496 1513L1507 1521L1518 1529L1529 1537L1540 1544L1551 1551L1563 1558L1575 1564L1586 1570L1599 1576L1611 1581L1623 1585L1636 1590L1649 1593L1661 1597L1674 1600L1687 1602M1637 783L1622 785L1608 788L1594 791L1580 794L1566 798L1552 803L1539 808L1525 813L1512 819L1500 826L1487 833L1475 840L1464 848L1452 856L1441 865L1431 874L1420 883L1410 893L1401 903L1392 913L1383 924L1375 935L1367 946L1359 958L1352 970L1346 982L1339 994L1334 1007L1328 1019L1324 1032L1319 1045L1315 1058L1312 1072L1309 1085L1306 1098L1304 1112L1303 1126L1302 1139L1301 1153L1301 1167L1301 1181L1302 1194L1303 1208L1304 1222L1306 1235L1309 1249L1312 1263L1315 1276L1319 1289L1323 1302L1327 1315L1332 1328L1338 1341L1344 1354L1350 1366L1356 1378L1363 1390L1371 1402L1378 1414L1386 1425L1395 1436L1403 1447L1412 1457L1422 1468L1431 1478L1441 1487L1452 1497L1462 1506L1473 1514L1484 1523L1495 1531L1507 1538L1519 1545L1531 1552L1543 1559L1555 1565L1568 1570L1581 1576L1594 1581L1607 1585L1620 1589L1633 1593L1646 1596L1660 1598L1673 1601L1687 1602M1605 788L1590 791L1576 795L1561 799L1547 803L1533 809L1519 814L1505 820L1492 827L1479 834L1466 842L1454 850L1442 858L1430 867L1419 876L1408 886L1397 896L1387 906L1377 917L1368 928L1359 939L1350 951L1342 963L1335 975L1327 988L1321 1000L1315 1013L1309 1026L1304 1040L1299 1053L1295 1067L1291 1080L1288 1094L1285 1108L1283 1122L1281 1136L1280 1150L1279 1164L1279 1178L1279 1192L1280 1206L1281 1221L1283 1235L1285 1248L1288 1262L1291 1276L1294 1290L1298 1303L1303 1316L1308 1330L1313 1343L1319 1356L1325 1368L1332 1381L1339 1393L1346 1405L1354 1416L1362 1428L1371 1439L1380 1450L1389 1460L1399 1471L1409 1481L1419 1490L1430 1500L1441 1509L1452 1517L1463 1525L1475 1533L1487 1541L1499 1548L1512 1554L1524 1561L1537 1567L1550 1572L1563 1577L1577 1582L1590 1586L1604 1590L1617 1593L1631 1596L1645 1598L1659 1600L1673 1601L1687 1602M1488 828L1474 836L1461 843L1448 852L1435 860L1423 869L1411 879L1400 889L1389 899L1378 910L1368 921L1358 932L1348 944L1339 956L1331 968L1323 981L1315 994L1308 1007L1302 1020L1296 1034L1290 1048L1285 1061L1281 1075L1277 1090L1273 1104L1270 1118L1268 1133L1266 1147L1265 1161L1264 1176L1264 1191L1264 1205L1265 1219L1266 1234L1268 1248L1270 1262L1273 1276L1276 1290L1280 1304L1284 1318L1289 1331L1294 1345L1300 1358L1306 1371L1313 1383L1320 1396L1327 1408L1335 1420L1343 1432L1352 1443L1361 1454L1371 1465L1380 1475L1391 1485L1401 1494L1412 1504L1423 1513L1434 1521L1446 1529L1458 1537L1470 1544L1482 1551L1495 1558L1508 1564L1521 1570L1534 1575L1547 1580L1561 1584L1575 1588L1588 1591L1602 1594L1616 1597L1630 1599L1645 1600L1659 1602L1673 1602L1687 1602M1278 1070L1273 1085L1269 1099L1266 1114L1263 1129L1260 1144L1258 1159L1257 1174L1256 1188L1256 1203L1256 1218L1257 1233L1258 1248L1260 1262L1262 1277L1265 1291L1269 1306L1273 1320L1277 1334L1282 1347L1288 1361L1294 1374L1300 1387L1307 1400L1314 1412L1322 1424L1330 1436L1339 1447L1348 1458L1357 1469L1367 1480L1377 1490L1387 1499L1398 1509L1409 1518L1421 1526L1432 1534L1444 1542L1456 1549L1469 1556L1481 1562L1494 1568L1507 1574L1521 1579L1534 1583L1547 1587L1561 1591L1575 1594L1589 1597L1603 1599L1617 1601L1631 1602L1645 1603L1659 1603L1673 1603L1687 1602M1273 1336L1278 1350L1283 1363L1289 1377L1295 1390L1301 1403L1308 1416L1316 1428L1324 1440L1332 1452L1341 1464L1350 1474L1359 1485L1369 1495L1379 1505L1390 1514L1401 1523L1412 1532L1423 1540L1435 1547L1447 1555L1459 1561L1472 1568L1484 1573L1497 1579L1510 1583L1523 1588L1537 1592L1550 1595L1564 1598L1577 1600L1591 1602L1604 1604L1618 1605L1632 1605L1646 1605L1660 1605L1673 1604L1687 1602M1350 1480L1359 1490L1368 1501L1378 1511L1388 1520L1398 1529L1409 1538L1420 1546L1432 1553L1443 1561L1455 1567L1467 1573L1479 1579L1491 1584L1504 1589L1517 1593L1529 1597L1542 1600L1555 1602L1568 1605L1582 1606L1595 1607L1608 1608L1621 1608L1634 1608L1648 1607L1661 1606L1674 1605L1687 1602M1424 1552L1434 1559L1445 1567L1456 1573L1468 1579L1479 1585L1491 1590L1502 1595L1514 1599L1527 1602L1539 1605L1551 1608L1563 1610L1576 1611L1588 1612L1601 1613L1613 1613L1625 1612L1638 1611L1650 1610L1663 1608L1675 1605L1687 1602M1485 1591L1496 1596L1507 1600L1517 1604L1529 1608L1540 1611L1551 1613L1562 1615L1574 1616L1585 1617L1597 1617L1608 1617L1619 1617L1631 1615L1642 1614L1654 1612L1665 1609L1676 1606L1687 1602M1526 1610L1536 1613L1546 1616L1556 1619L1566 1620L1577 1622L1587 1622L1597 1623L1607 1622L1617 1621L1627 1620L1637 1618L1648 1616L1658 1613L1667 1610L1677 1606L1687 1602" stroke="#10141c" stroke-width="1" fill="none" stroke-dasharray="9 4" opacity="0.75"/></g><path d="M1417.7 1154.1L1750.1 1131.5M1360.4 1167.6L1824.0 1135.5M1350.7 1209.3L1423.8 1309.0M1358.5 1177.8L1832.2 1144.3M1368.4 1165.1L1499.6 1319.8M1354.5 1199.7L1831.9 1164.5M1450.6 1148.1L1644.9 1328.5M1352.3 1211.5L1831.8 1175.3M1491.4 1141.8L1715.2 1329.5M1350.0 1223.9L1841.0 1186.0M1533.2 1137.2L1781.2 1327.0M1345.1 1250.6L1841.1 1210.5M1619.0 1131.5L1843.9 1277.7M1342.4 1265.1L1841.2 1223.7M1663.7 1130.2L1841.3 1237.7M1351.6 1279.3L1841.3 1237.7M1711.0 1130.6L1839.2 1203.0M1409.0 1306.9L1841.6 1268.1M1812.4 1134.4L1832.2 1144.3M1484.2 1317.6L1841.7 1284.6M1587.6 1326.4L1841.8 1302.3" stroke="#fafafa" stroke-width="2.2" fill="none" opacity="0.92"/><path d="M1356.5 1188.5L1832.0 1154.2M1408.5 1154.7L1575.0 1327.6M1348.9 1295.4L1841.4 1252.4M1758.4 1130.9L1833.6 1170.8" stroke="#8a8a8a" stroke-width="1.6" fill="none"/><path d="M1576.5 1134.4L1842.1 1321.1M1347.2 1236.9L1837.8 1198.2M1687.1 1603.0L1681.4 780.6" stroke="#6e6e6e" stroke-width="2.4" fill="none"/><g clip-path="url(#co)"><g filter="url(#bl)"><path fill="#a55514" stroke="#a55514" stroke-width="1" d="M1681 781l0 0 9 1 -2 0zM1681 781l0 0 11 1 -2 0zM1681 781l0 0 12 1 -1 0zM1681 781l0 0 21 0 0 0zM1681 781l0 0 22 0 -1 0zM1681 781l0 0 22 0 0 0zM1681 781l0 0 22 0 0 0zM1681 781l0 0 22 0 0 0zM1681 781l0 0 22 0 0 0zM1948 1525l21 -9 -12 14 -19 8zM1969 1516l17 -10 -11 15 -18 9zM1986 1506l15 -10 -12 15 -14 10z"/><path fill="#a55a14" stroke="#a55a14" stroke-width="1" d="M1681 781l0 0 14 1 -2 0zM1681 781l0 0 15 1 -1 0zM1681 781l0 0 17 1 -2 0zM1681 781l0 0 18 1 -1 0zM1681 781l0 0 19 0 -1 1zM1681 781l0 0 20 0 -1 0zM1681 781l0 0 21 0 -1 0zM1852 1523l33 -6 -7 16 -31 6z"/><path fill="#a05514" stroke="#a05514" stroke-width="1" d="M1681 781l0 0 22 0 0 0zM1681 781l0 0 21 0 1 0zM1681 781l0 0 20 0 1 0zM1681 781l0 0 20 0 0 0zM1681 781l0 0 19 0 1 0zM1681 781l0 0 18 0 1 0zM1681 781l0 0 16 0 2 0zM1681 781l0 0 15 0 1 0zM1681 781l0 0 14 0 1 0zM1681 781l0 0 12 0 2 0zM1681 781l0 0 -15 1 -1 0zM1878 1533l29 -7 -8 14 -28 7zM1925 1533l23 -8 -10 13 -23 9zM2001 1496l12 -10 -13 15 -11 10zM2013 1486l9 -10 -13 15 -9 10z"/><path fill="#9b5514" stroke="#9b5514" stroke-width="1" d="M1681 781l0 0 10 0 2 0zM1681 781l0 0 9 0 1 0zM1681 781l0 0 7 0 2 0zM1681 781l0 0 5 0 2 0zM1681 781l0 0 3 0 2 0zM1681 781l0 0 2 0 1 0zM1681 781l0 0 0 0 2 0zM1681 781l0 0 -2 0 2 0zM1681 781l0 0 -4 0 2 0zM1681 781l0 0 -6 0 2 0zM1681 781l0 0 -8 0 2 0zM1681 781l0 0 -21 0 0 0zM1681 781l0 0 -21 0 0 0zM1681 781l0 0 -21 0 0 0zM1681 781l0 0 -21 1 0 -1zM1681 781l0 0 -21 1 0 0zM1681 781l0 0 -20 1 -1 0zM1681 781l0 0 -20 1 0 0zM1681 781l0 0 -19 1 -1 0zM1681 781l0 0 -18 1 -1 0zM1681 781l0 0 -17 1 -1 0zM1681 781l0 0 -16 1 -1 0zM1664 782l1 0 -16 2 -3 0zM1665 782l1 0 -15 2 -2 0zM1649 784l2 0 -15 3 -4 0zM1818 1528l34 -5 -5 16 -34 5zM1847 1539l31 -6 -7 14 -30 6zM1899 1540l26 -7 -10 14 -25 7z"/><path fill="#9b5014" stroke="#9b5014" stroke-width="1" d="M1681 781l0 0 -9 0 1 0zM1681 781l0 0 -11 0 2 0zM1681 781l0 0 -21 0 1 0zM1663 782l1 0 -18 2 -2 0z"/><path fill="#965014" stroke="#965014" stroke-width="1" d="M1681 781l0 0 -12 0 1 0zM1681 781l0 0 -14 0 2 0zM1681 781l0 0 -15 0 1 0zM1681 781l0 0 -16 0 1 0zM1681 781l0 0 -18 0 2 0zM1681 781l0 0 -19 0 1 0zM1681 781l0 0 -19 0 0 0zM1681 781l0 0 -20 0 1 0zM1661 782l0 0 -20 2 -1 0zM1661 782l1 0 -19 2 -2 0zM1662 782l1 0 -19 2 -1 0zM1644 784l2 0 -17 3 -3 0zM1646 784l3 0 -17 3 -3 0zM1629 787l3 0 -16 5 -5 0zM1632 787l4 0 -15 5 -5 0zM1616 792l5 0 -16 5 -6 0zM1871 1547l28 -7 -9 14 -27 7zM1915 1547l23 -9 -11 13 -22 8zM1938 1538l19 -8 -11 13 -19 8zM1957 1530l18 -9 -13 13 -16 9zM1975 1521l14 -10 -13 14 -14 9zM1989 1511l11 -10 -13 14 -11 10z"/><path fill="#af5a14" stroke="#af5a14" stroke-width="1" d="M1688 782l2 0 8 2 -3 0zM1690 782l2 0 10 2 -4 0zM1702 781l1 0 21 2 -1 0zM1703 781l0 0 21 2 0 0zM1703 781l0 0 22 2 -1 0zM1703 781l0 0 22 2 0 0zM1885 1517l30 -7 -8 16 -29 7zM1934 1518l24 -8 -10 15 -23 8zM1958 1510l21 -9 -10 15 -21 9zM2013 1481l12 -10 -12 15 -12 10z"/><path fill="#af5f14" stroke="#af5f14" stroke-width="1" d="M1692 782l1 0 12 2 -3 0zM1693 782l2 0 13 2 -3 0zM1695 782l1 0 15 2 -3 0zM1696 782l2 0 16 2 -3 0zM1698 782l1 0 17 1 -2 1zM1699 782l1 -1 18 2 -2 0zM1700 781l1 0 19 2 -2 0zM1701 781l1 0 20 2 -2 0zM1702 781l0 0 21 2 -1 0zM1857 1507l34 -6 -6 16 -33 6zM1979 1501l18 -10 -11 15 -17 10zM1997 1491l16 -10 -12 15 -15 10z"/><path fill="#aa5a14" stroke="#aa5a14" stroke-width="1" d="M1703 781l0 0 21 1 1 1zM1703 781l0 0 20 1 1 0zM1703 781l-1 0 20 1 1 0zM1702 781l-1 0 20 1 1 0zM1822 1512l35 -5 -5 16 -34 5zM1907 1526l27 -8 -9 15 -26 7zM2025 1471l9 -11 -12 16 -9 10z"/><path fill="#8c4b0f" stroke="#8c4b0f" stroke-width="1" d="M1662 781l-1 0 -20 2 1 0zM1661 781l-1 0 -20 2 1 0zM1638 783l1 0 -21 3 -1 0zM1639 783l1 1 -21 3 -1 -1zM1621 787l2 0 -20 4 -3 0zM1623 787l3 0 -19 4 -4 0zM1607 791l4 1 -18 5 -5 0zM1593 797l6 0 -17 7 -7 0zM1566 812l9 0 -16 9 -10 0zM1863 1561l27 -7 -9 12 -26 7zM1927 1551l19 -8 -13 12 -18 8zM1946 1543l16 -9 -13 12 -16 9zM1962 1534l14 -9 -13 12 -14 9z"/><path fill="#8c500f" stroke="#8c500f" stroke-width="1" d="M1660 781l0 0 -21 2 1 0zM1640 784l1 0 -20 3 -2 0z"/><path fill="#91500f" stroke="#91500f" stroke-width="1" d="M1660 781l0 0 -22 2 1 0zM1660 781l0 0 -22 2 0 0zM1660 781l0 1 -22 1 0 0zM1660 782l0 0 -21 1 -1 0zM1641 784l2 0 -20 3 -2 0zM1643 784l1 0 -18 3 -3 0zM1626 787l3 0 -18 5 -4 -1zM1611 792l5 0 -17 5 -6 0zM1599 797l6 0 -15 7 -8 0zM1582 804l8 0 -15 8 -9 0zM1813 1544l34 -5 -6 14 -32 5zM1841 1553l30 -6 -8 14 -29 5zM1890 1554l25 -7 -10 12 -24 7z"/><path fill="#915014" stroke="#915014" stroke-width="1" d="M1660 782l1 0 -21 2 -1 -1z"/><path fill="#b95f14" stroke="#b95f14" stroke-width="1" d="M1695 784l3 0 9 3 -5 0zM1698 784l4 0 10 3 -5 0zM1723 783l1 0 21 3 -1 0zM1724 783l0 0 22 2 -1 1zM1724 783l1 0 21 2 0 0zM1891 1501l31 -7 -7 16 -30 7zM1942 1502l25 -8 -9 16 -24 8zM2023 1465l13 -11 -11 17 -12 10z"/><path fill="#be6414" stroke="#be6414" stroke-width="1" d="M1702 784l3 0 12 3 -5 0zM1705 784l3 0 14 3 -5 0zM1708 784l3 0 15 3 -4 0zM1711 784l3 0 16 3 -4 0zM1714 784l2 -1 18 3 -4 1zM1716 783l2 0 19 3 -3 0zM1718 783l2 0 20 3 -3 0zM1720 783l2 0 20 3 -2 0zM1722 783l1 0 21 3 -2 0zM1746 785l0 0 21 4 1 0zM1746 785l-1 0 21 3 1 1zM1829 1476l38 -5 -5 18 -36 5zM1862 1489l34 -6 -5 18 -34 6zM1922 1494l28 -8 -8 16 -27 8zM1967 1494l22 -9 -10 16 -21 9zM1989 1485l19 -10 -11 16 -18 10zM2008 1475l15 -10 -10 16 -16 10z"/><path fill="#b45f14" stroke="#b45f14" stroke-width="1" d="M1725 783l0 0 21 2 0 0zM1725 783l-1 -1 21 3 1 0zM1724 782l-1 0 21 3 1 0zM1826 1494l36 -5 -5 18 -35 5zM1915 1510l27 -8 -8 16 -27 8zM2036 1454l9 -10 -11 16 -9 11z"/><path fill="#824b0f" stroke="#824b0f" stroke-width="1" d="M1640 783l-1 0 -21 3 1 0zM1618 786l1 1 -21 4 -1 0zM1600 791l3 0 -19 6 -4 -1zM1584 797l4 0 -19 6 -5 0zM1569 803l6 1 -17 7 -7 0z"/><path fill="#874b0f" stroke="#874b0f" stroke-width="1" d="M1639 783l-1 0 -21 3 1 0zM1638 783l0 0 -21 3 0 0zM1638 783l0 0 -21 3 0 0zM1619 787l2 0 -21 4 -2 0zM1603 791l4 0 -19 6 -4 0zM1588 797l5 0 -18 7 -6 -1zM1575 804l7 0 -16 8 -8 -1zM1558 811l8 1 -17 9 -9 -1zM1549 821l10 0 -15 11 -11 -1zM1533 831l11 1 -15 11 -12 -1zM1809 1558l32 -5 -7 13 -30 5zM1834 1566l29 -5 -8 12 -27 5zM1881 1566l24 -7 -10 12 -23 7zM1905 1559l22 -8 -12 12 -20 8zM1976 1525l11 -10 -13 13 -11 9z"/><path fill="#c36414" stroke="#c36414" stroke-width="1" d="M1702 787l5 0 9 5 -7 0zM1745 786l1 -1 21 4 -1 0zM1746 785l0 0 22 4 -1 0zM1767 789l-1 -1 21 5 1 0zM1896 1483l32 -7 -6 18 -31 7zM1950 1486l26 -9 -9 17 -25 8zM2046 1437l9 -10 -10 17 -9 10z"/><path fill="#c86414" stroke="#c86414" stroke-width="1" d="M1707 787l5 0 11 5 -7 0zM1744 786l1 0 21 3 -2 1zM2033 1448l13 -11 -10 17 -13 11z"/><path fill="#c86914" stroke="#c86914" stroke-width="1" d="M1712 787l5 0 12 4 -6 1zM1717 787l5 0 14 4 -7 0zM1722 787l4 0 15 4 -5 0zM1726 787l4 0 17 4 -6 0zM1730 787l4 -1 17 5 -4 0zM1734 786l3 0 19 4 -5 1zM1737 786l3 0 19 4 -3 0zM1740 786l2 0 20 4 -3 0zM1742 786l2 0 20 4 -2 0zM1768 789l-1 0 21 4 1 1zM1832 1456l38 -5 -3 20 -38 5zM1867 1471l35 -7 -6 19 -34 6zM2065 1409l6 -11 -10 18 -6 11zM1976 1477l22 -9 -9 17 -22 9zM1998 1468l19 -10 -9 17 -19 10zM2017 1458l16 -10 -10 17 -15 10z"/><path fill="#7d460f" stroke="#7d460f" stroke-width="1" d="M1618 786l-1 0 -21 4 1 0zM1617 786l0 0 -22 4 1 0zM1597 791l1 0 -20 5 -2 0zM1580 796l4 1 -20 6 -4 0zM1564 803l5 0 -18 8 -6 0zM1551 811l7 0 -18 9 -8 0zM1523 830l10 1 -16 11 -11 0zM1501 855l14 1 -15 13 -14 -1zM1804 1571l30 -5 -6 12 -30 5zM1828 1578l27 -5 -8 11 -26 5zM1872 1578l23 -7 -11 10 -22 7zM1895 1571l20 -8 -12 11 -19 7zM1915 1563l18 -8 -12 11 -18 8z"/><path fill="#82460f" stroke="#82460f" stroke-width="1" d="M1617 786l0 0 -21 4 -1 0zM1617 786l1 0 -21 5 -1 -1zM1598 791l2 0 -20 5 -2 0zM1540 820l9 1 -16 10 -10 -1zM1517 842l12 1 -14 13 -14 -1zM1855 1573l26 -7 -9 12 -25 6zM1933 1555l16 -9 -13 12 -15 8zM1949 1546l14 -9 -14 12 -13 9z"/><path fill="#cd6919" stroke="#cd6919" stroke-width="1" d="M1709 792l7 0 9 5 -9 1zM1766 789l1 0 21 5 -1 0zM2055 1419l10 -10 -10 18 -9 10z"/><path fill="#d26919" stroke="#d26919" stroke-width="1" d="M1716 792l7 0 10 5 -8 0zM1723 792l6 -1 13 6 -9 0zM1764 790l2 -1 21 5 -2 1zM1789 794l-1 -1 21 6 1 0zM1835 1436l39 -6 -4 21 -38 5zM1870 1451l36 -6 -4 19 -35 7zM1902 1464l32 -7 -6 19 -32 7zM1957 1468l26 -9 -7 18 -26 9zM2042 1430l13 -11 -9 18 -13 11z"/><path fill="#d76e19" stroke="#d76e19" stroke-width="1" d="M1729 791l7 0 13 6 -7 0zM1736 791l5 0 16 5 -8 1zM1741 791l6 0 16 5 -6 0zM1747 791l4 0 18 5 -6 0zM1751 791l5 -1 18 6 -5 0zM1756 790l3 0 20 5 -5 1zM1759 790l3 0 20 5 -3 0zM1716 798l9 -1 9 7 -11 0zM1787 794l1 0 21 6 -1 0zM1788 794l1 0 21 5 -1 1zM1934 1457l30 -8 -7 19 -29 8zM1983 1459l23 -9 -8 18 -22 9zM2006 1450l20 -10 -9 18 -19 10zM2026 1440l16 -10 -9 18 -16 10z"/><path fill="#d26e19" stroke="#d26e19" stroke-width="1" d="M1762 790l2 0 21 5 -3 0zM2073 1390l6 -10 -8 18 -6 11z"/><path fill="#cd6914" stroke="#cd6914" stroke-width="1" d="M1767 789l1 0 21 5 -1 0zM1928 1476l29 -8 -7 18 -28 8z"/><path fill="#73410f" stroke="#73410f" stroke-width="1" d="M1596 790l-1 0 -21 5 1 0zM1575 795l1 1 -21 6 -1 -1zM1557 802l3 1 -20 7 -3 0zM1540 810l5 1 -19 8 -5 0zM1526 819l6 1 -18 10 -7 -1zM1514 830l9 0 -17 12 -9 -1zM1489 854l12 1 -15 13 -13 -1zM1456 898l17 2 -14 16 -17 -1zM1798 1583l30 -5 -7 11 -28 5zM1821 1589l26 -5 -8 10 -25 5zM1884 1581l19 -7 -12 9 -19 7zM1903 1574l18 -8 -13 10 -17 7zM1921 1566l15 -8 -14 10 -14 8zM1936 1558l13 -9 -15 11 -12 8z"/><path fill="#78410f" stroke="#78410f" stroke-width="1" d="M1595 790l1 0 -21 5 -1 0zM1576 796l2 0 -21 6 -2 0zM1471 883l15 1 -13 16 -17 -2zM1847 1584l25 -6 -10 10 -23 6z"/><path fill="#78460f" stroke="#78460f" stroke-width="1" d="M1596 790l1 1 -21 5 -1 -1zM1578 796l2 0 -20 7 -3 -1zM1560 803l4 0 -19 8 -5 -1zM1545 811l6 0 -19 9 -6 -1zM1532 820l8 0 -17 10 -9 0zM1506 842l11 0 -16 13 -12 -1zM1486 868l14 1 -14 15 -15 -1z"/><path fill="#dc6e19" stroke="#dc6e19" stroke-width="1" d="M1725 797l8 0 11 7 -10 0zM1733 797l9 0 12 7 -10 0zM1785 795l2 -1 21 6 -2 1zM1810 799l-1 0 20 7 1 0zM1837 1414l40 -5 -3 21 -39 6zM1874 1430l36 -6 -4 21 -36 6zM1906 1445l34 -7 -6 19 -32 7zM1964 1449l27 -9 -8 19 -26 9zM2064 1401l9 -11 -8 19 -10 10z"/><path fill="#e17319" stroke="#e17319" stroke-width="1" d="M1742 797l7 0 14 6 -9 1zM1749 797l8 -1 15 7 -9 0zM1757 796l6 0 17 7 -8 0zM1769 796l5 0 19 6 -6 0zM1774 796l5 -1 19 7 -5 0zM1779 795l3 0 20 6 -4 1zM1723 804l11 0 9 8 -13 1zM1830 806l-1 0 20 7 1 1zM1991 1440l23 -9 -8 19 -23 9zM2014 1431l20 -10 -8 19 -20 10zM2034 1421l16 -10 -8 19 -16 10z"/><path fill="#e67319" stroke="#e67319" stroke-width="1" d="M1763 796l6 0 18 6 -7 1zM1734 804l10 0 11 8 -12 0zM1806 801l2 -1 20 7 -2 1zM1808 800l1 0 21 7 -2 0zM1830 807l0 -1 20 8 0 1zM1839 1392l40 -5 -2 22 -40 5zM1910 1424l34 -7 -4 21 -34 7zM1940 1438l30 -8 -6 19 -30 8zM2071 1382l10 -11 -8 19 -9 11z"/><path fill="#e16e19" stroke="#e16e19" stroke-width="1" d="M1782 795l3 0 21 6 -4 0zM1809 800l1 -1 20 7 0 1zM2081 1371l6 -10 -8 19 -6 10zM2050 1411l14 -10 -9 18 -13 11z"/><path fill="#6e3c0f" stroke="#6e3c0f" stroke-width="1" d="M1575 795l-1 0 -20 6 0 0zM1537 810l3 0 -19 9 -4 -1zM1521 819l5 0 -19 10 -5 -1zM1507 829l7 1 -17 11 -8 -1zM1479 853l10 1 -16 13 -11 -1zM1457 881l14 2 -15 15 -14 -1zM1793 1594l28 -5 -7 10 -27 4zM1839 1594l23 -6 -10 9 -22 5z"/><path fill="#6e410f" stroke="#6e410f" stroke-width="1" d="M1574 795l1 0 -21 6 0 0zM1555 802l2 0 -20 8 -2 -1zM1497 841l9 1 -17 12 -10 -1zM1473 867l13 1 -15 15 -14 -2zM1442 915l17 1 -12 18 -18 -2zM1862 1588l22 -7 -12 9 -20 7z"/><path fill="#eb7319" stroke="#eb7319" stroke-width="1" d="M1744 804l10 0 12 8 -11 0zM1802 801l4 0 20 7 -4 0zM1850 814l-1 -1 20 9 1 1zM1877 1409l37 -6 -4 21 -36 6zM2087 1351l6 -10 -6 20 -6 10zM1970 1430l27 -9 -6 19 -27 9zM2058 1392l13 -10 -7 19 -14 10z"/><path fill="#eb7819" stroke="#eb7819" stroke-width="1" d="M1754 804l9 -1 14 8 -11 1zM1798 802l4 -1 20 7 -5 1zM1730 813l13 -1 8 10 -14 0z"/><path fill="#f07819" stroke="#f07819" stroke-width="1" d="M1763 803l9 0 15 8 -10 0zM1772 803l8 0 16 7 -9 1zM1780 803l7 -1 17 8 -8 0zM1787 802l6 0 18 7 -7 1zM1793 802l5 0 19 7 -6 0zM1743 812l12 0 10 9 -14 1zM1826 808l2 -1 21 8 -3 1zM1828 807l2 0 20 8 -1 0zM1850 815l0 -1 20 9 0 1zM1870 823l-1 -1 19 10 1 1zM1840 1369l41 -5 -2 23 -40 5zM1944 1417l31 -8 -5 21 -30 8zM2078 1362l9 -11 -6 20 -10 11zM1997 1421l24 -9 -7 19 -23 9zM2021 1412l20 -10 -7 19 -20 10zM2041 1402l17 -10 -8 19 -16 10z"/><path fill="#643c0f" stroke="#643c0f" stroke-width="1" d="M1554 801l0 0 -21 7 1 0zM1533 809l2 0 -21 8 -1 0zM1416 951l19 2 -12 19 -20 -2z"/><path fill="#693c0f" stroke="#693c0f" stroke-width="1" d="M1554 801l0 0 -21 8 0 -1zM1554 801l1 1 -20 7 -2 0zM1535 809l2 1 -20 8 -3 -1zM1517 818l4 1 -19 9 -5 0zM1502 828l5 1 -18 11 -6 -1zM1489 840l8 1 -18 12 -8 -1zM1462 866l11 1 -16 14 -11 -1zM1442 897l14 1 -14 17 -15 -2zM1429 932l18 2 -12 19 -19 -2zM1814 1599l25 -5 -9 8 -24 5zM1852 1597l20 -7 -11 9 -19 6zM1872 1590l19 -7 -13 9 -17 7zM1891 1583l17 -7 -14 9 -16 7zM1908 1576l14 -8 -14 9 -14 8z"/><path fill="#f57819" stroke="#f57819" stroke-width="1" d="M1755 812l11 0 13 9 -14 0zM1822 808l4 0 20 8 -4 1zM1737 822l14 0 9 10 -16 1zM1849 815l1 0 20 9 -2 0zM1879 1387l38 -6 -3 22 -37 6zM2104 1301l2 -10 -4 20 -3 10zM1914 1403l34 -7 -4 21 -34 7zM2093 1331l6 -10 -6 20 -6 10zM1975 1409l28 -8 -6 20 -27 9zM2064 1372l14 -10 -7 20 -13 10z"/><path fill="#fa7819" stroke="#fa7819" stroke-width="1" d="M1766 812l11 -1 14 9 -12 1z"/><path fill="#fa7d19" stroke="#fa7d19" stroke-width="1" d="M1777 811l10 0 15 9 -11 0zM1787 811l9 -1 17 9 -11 1zM1796 810l8 0 18 9 -9 0zM1804 810l7 -1 19 9 -8 1zM1811 809l6 0 19 8 -6 1zM1817 809l5 -1 20 9 -6 0zM1751 822l14 -1 11 11 -16 0zM1846 816l3 -1 19 9 -2 1zM1870 824l0 -1 19 10 0 1zM1841 1345l41 -5 -1 24 -41 5zM1948 1396l31 -8 -4 21 -31 8zM2003 1401l24 -9 -6 20 -24 9zM2027 1392l20 -10 -6 20 -20 10zM2047 1382l17 -10 -6 20 -17 10z"/><path fill="#5f370a" stroke="#5f370a" stroke-width="1" d="M1534 808l-1 0 -20 8 1 0zM1513 817l1 0 -19 10 -2 -1zM1464 851l7 1 -18 13 -7 -2zM1430 895l12 2 -15 16 -13 -2zM1392 990l20 3 -10 21 -21 -4zM1842 1605l19 -6 -12 7 -18 5z"/><path fill="#5f370f" stroke="#5f370f" stroke-width="1" d="M1533 808l0 1 -20 8 0 -1zM1453 865l9 1 -16 14 -10 -1zM1413 930l16 2 -13 19 -17 -3zM1806 1607l24 -5 -9 8 -22 4zM1861 1599l17 -7 -13 7 -16 7zM1878 1592l16 -7 -14 8 -15 6z"/><path fill="#ff7d19" stroke="#ff7d19" stroke-width="1" d="M1765 821l14 0 12 10 -15 1zM1779 821l12 -1 14 10 -14 1zM1836 817l6 0 19 9 -6 1zM1842 817l4 -1 20 9 -5 1zM1744 833l16 -1 9 12 -18 0zM1760 832l16 0 11 11 -18 1zM1868 824l2 0 19 10 -1 1zM1889 834l0 -1 19 10 0 2zM1842 1321l41 -5 -1 24 -41 5zM1881 1364l38 -6 -2 23 -38 6zM2107 1280l3 -9 -4 20 -2 10zM1917 1381l34 -7 -3 22 -34 7zM2097 1311l7 -10 -5 20 -6 10zM1979 1388l28 -8 -4 21 -28 8zM2070 1351l13 -10 -5 21 -14 10zM2083 1341l10 -10 -6 20 -9 11z"/><path fill="#ff8219" stroke="#ff8219" stroke-width="1" d="M1791 820l11 0 15 10 -12 0zM1802 820l11 -1 16 10 -12 1zM1813 819l9 0 17 9 -10 1zM1822 819l8 -1 18 10 -9 0zM1830 818l6 -1 19 10 -7 1zM1776 832l15 -1 12 12 -16 0zM1861 826l5 -1 19 11 -5 1zM1866 825l2 -1 20 11 -3 1zM1751 844l18 0 9 13 -20 0zM1888 835l1 -1 19 11 -1 1zM1908 845l0 -2 18 12 1 1zM1842 1296l41 -4 0 24 -41 5zM1882 1340l38 -5 -1 23 -38 6zM2110 1259l2 -9 -2 21 -3 9zM1919 1358l35 -7 -3 23 -34 7zM2101 1290l6 -10 -3 21 -7 10zM1951 1374l32 -8 -4 22 -31 8zM2088 1321l9 -10 -4 20 -10 10zM2007 1380l25 -9 -5 21 -24 9zM2032 1371l21 -10 -6 21 -20 10zM2053 1361l17 -10 -6 21 -17 10z"/><path fill="#55320a" stroke="#55320a" stroke-width="1" d="M1514 816l-1 0 -19 9 1 0zM1494 825l-1 1 -19 10 1 -1zM1474 836l1 1 -18 12 -2 -2zM1475 837l3 1 -18 12 -3 -1zM1460 850l4 1 -18 12 -5 -1zM1441 862l5 1 -17 14 -5 -2zM1429 877l7 2 -16 14 -8 -1zM1420 893l10 2 -16 16 -10 -2zM1404 909l10 2 -15 17 -10 -2zM1399 928l14 2 -14 18 -14 -2zM1385 946l14 2 -13 19 -14 -3zM1374 987l18 3 -11 20 -18 -3zM1371 1032l22 3 -8 23 -23 -4zM1362 1054l23 4 -8 22 -23 -4zM1775 1618l24 -4 -8 6 -22 4zM1812 1616l19 -5 -11 6 -18 4zM1831 1611l18 -5 -12 6 -17 5z"/><path fill="#5a320a" stroke="#5a320a" stroke-width="1" d="M1513 816l0 1 -20 9 1 -1zM1493 826l2 1 -20 10 -1 -1zM1446 863l7 2 -17 14 -7 -2zM1414 911l13 2 -14 17 -14 -2zM1386 967l17 3 -11 20 -18 -3zM1799 1614l22 -4 -9 6 -21 4zM1849 1606l16 -7 -13 7 -15 6zM1865 1599l15 -6 -14 7 -14 6z"/><path fill="#64370f" stroke="#64370f" stroke-width="1" d="M1514 817l3 1 -20 10 -2 -1zM1497 828l5 0 -19 11 -5 -1zM1483 839l6 1 -18 12 -7 -1zM1471 852l8 1 -17 13 -9 -1zM1446 880l11 1 -15 16 -12 -2zM1427 913l15 2 -13 17 -16 -2zM1403 970l20 2 -11 21 -20 -3zM1787 1603l27 -4 -8 8 -25 4zM1830 1602l22 -5 -10 8 -21 5zM1894 1585l14 -8 -15 9 -13 7z"/><path fill="#ff821e" stroke="#ff821e" stroke-width="1" d="M1791 831l14 -1 13 12 -15 1zM1805 830l12 0 15 11 -14 1zM1848 828l7 -1 19 10 -8 1zM1855 827l6 -1 19 11 -6 0zM1769 844l18 -1 10 13 -19 1zM1885 836l3 -1 19 11 -3 1zM1758 857l20 0 8 14 -21 1zM1907 846l1 -1 19 11 -2 2zM1927 856l-1 -1 17 13 1 1zM1842 1271l40 -4 1 25 -41 4zM1883 1316l38 -5 -1 24 -38 5zM1954 1351l32 -7 -3 22 -32 8zM1983 1366l28 -8 -4 22 -28 8zM2011 1358l25 -9 -4 22 -25 9zM2074 1330l14 -9 -5 20 -13 10z"/><path fill="#ff871e" stroke="#ff871e" stroke-width="1" d="M1817 830l12 -1 16 11 -13 1zM1829 829l10 -1 17 11 -11 1zM1839 828l9 0 18 10 -10 1zM1787 843l16 0 12 12 -18 1zM1803 843l15 -1 14 12 -17 1zM1818 842l14 -1 15 12 -15 1zM1832 841l13 -1 16 12 -14 1zM1845 840l11 -1 17 12 -12 1zM1856 839l10 -1 17 12 -10 1zM1866 838l8 -1 18 12 -9 1zM1874 837l6 0 19 11 -7 1zM1880 837l5 -1 19 11 -5 1zM1778 857l19 -1 10 14 -21 1zM1797 856l18 -1 12 14 -20 1zM1899 848l5 -1 18 12 -5 1zM1904 847l3 -1 18 12 -3 1zM1765 872l21 -1 9 15 -24 1zM1786 871l21 -1 10 15 -22 1zM1925 858l2 -2 17 13 -1 2zM1771 887l24 -1 8 17 -25 0zM1944 869l-1 -1 17 13 1 2zM1961 883l-1 -2 16 14 2 2zM1841 1246l40 -4 1 25 -40 4zM1883 1292l38 -5 0 24 -38 5zM2111 1217l3 -9 0 21 -3 9zM1921 1311l35 -6 0 23 -36 7zM2105 1247l6 -9 -1 21 -7 9zM2111 1238l3 -9 -2 21 -2 9zM1920 1335l36 -7 -2 23 -35 7zM1956 1328l32 -7 -2 23 -32 7zM2094 1278l9 -10 -2 22 -10 9zM2103 1268l7 -9 -3 21 -6 10zM1986 1344l28 -8 -3 22 -28 8zM2014 1336l25 -9 -3 22 -25 9zM2039 1327l21 -9 -3 22 -21 9zM2060 1318l18 -9 -4 21 -17 10zM2078 1309l13 -10 -3 22 -14 9zM2091 1299l10 -9 -4 21 -9 10zM2036 1349l21 -9 -4 21 -21 10zM2057 1340l17 -10 -4 21 -17 10z"/><path fill="#5a370a" stroke="#5a370a" stroke-width="1" d="M1495 827l2 1 -19 10 -3 -1zM1478 838l5 1 -19 12 -4 -1zM1436 879l10 1 -16 15 -10 -2zM1399 948l17 3 -13 19 -17 -3zM1381 1010l21 4 -9 21 -22 -3zM1781 1611l25 -4 -7 7 -24 4zM1821 1610l21 -5 -11 6 -19 5z"/><path fill="#502d0a" stroke="#502d0a" stroke-width="1" d="M1475 835l-1 1 -19 11 1 -1zM1455 847l2 2 -19 12 -1 -2zM1438 861l3 1 -17 13 -3 -1zM1424 875l5 2 -17 15 -5 -2zM1412 892l8 1 -16 16 -8 -2zM1389 926l10 2 -14 18 -11 -3zM1372 964l14 3 -12 20 -14 -4zM1363 1007l18 3 -10 22 -18 -4zM1353 1028l18 4 -9 22 -19 -5zM1354 1076l23 4 -7 23 -23 -4zM1347 1099l23 4 -6 24 -24 -5zM1769 1624l22 -4 -8 5 -20 4zM1802 1621l18 -4 -11 4 -16 4zM1820 1617l17 -5 -12 4 -16 5zM1837 1612l15 -6 -13 5 -14 5z"/><path fill="#ff8c1e" stroke="#ff8c1e" stroke-width="1" d="M1815 855l17 -1 13 14 -18 1zM1832 854l15 -1 14 14 -16 1zM1847 853l14 -1 15 14 -15 1zM1861 852l12 -1 16 13 -13 2zM1873 851l10 -1 17 13 -11 1zM1883 850l9 -1 17 13 -9 1zM1892 849l7 -1 18 12 -8 2zM1807 870l20 -1 11 15 -21 1zM1827 869l18 -1 13 15 -20 1zM1909 862l8 -2 17 14 -7 2zM1917 860l5 -1 18 13 -6 2zM1922 859l3 -1 18 13 -3 1zM1795 886l22 -1 10 16 -24 2zM1940 872l3 -1 17 14 -3 1zM1943 871l1 -2 17 14 -1 2zM1778 903l25 0 8 17 -27 1zM1803 903l24 -2 10 18 -26 1zM1960 885l1 -2 17 14 -2 2zM1784 921l27 -1 8 18 -29 2zM1976 899l2 -2 15 15 -1 3zM1978 897l-2 -2 16 15 1 2zM1993 912l-1 -2 14 15 2 3zM2008 928l-2 -3 14 17 2 3zM2022 945l-2 -3 12 17 3 3zM2035 962l-3 -3 12 17 3 4zM1835 1170l39 -4 3 26 -40 3zM1837 1195l40 -3 3 25 -41 4zM2104 1124l0 -7 4 20 0 8zM1839 1221l41 -4 1 25 -40 4zM2108 1145l0 -8 2 21 1 8zM1881 1242l38 -5 2 25 -39 5zM2109 1173l2 -7 2 21 -2 8zM1882 1267l39 -5 0 25 -38 5zM1921 1262l35 -6 1 25 -36 6zM2111 1195l2 -8 1 21 -3 9zM1921 1287l36 -6 -1 24 -35 6zM2105 1225l6 -8 0 21 -6 9zM1956 1305l33 -7 -1 23 -32 7zM1989 1298l29 -8 -2 23 -28 8zM2095 1256l10 -9 -2 21 -9 10zM1988 1321l28 -8 -2 23 -28 8zM2016 1313l25 -8 -2 22 -25 9zM2041 1305l22 -9 -3 22 -21 9zM2063 1296l17 -9 -2 22 -18 9zM2080 1287l14 -9 -3 21 -13 10z"/><path fill="#4b2d0a" stroke="#4b2d0a" stroke-width="1" d="M1456 846l-1 1 -18 12 1 -1zM1437 859l1 2 -17 13 -1 -2zM1421 874l3 1 -17 15 -3 -2zM1407 890l5 2 -16 15 -5 -2zM1396 907l8 2 -15 17 -8 -3zM1381 923l8 3 -15 17 -8 -3zM1374 943l11 3 -13 18 -11 -3zM1361 961l11 3 -12 19 -12 -3zM1360 983l14 4 -11 20 -15 -4zM1348 1003l15 4 -10 21 -16 -4zM1343 1049l19 5 -8 22 -19 -5zM1335 1071l19 5 -7 23 -20 -5zM1340 1122l24 5 -5 24 -24 -6zM1335 1145l24 6 -4 24 -25 -6zM1763 1629l20 -4 -8 4 -18 3zM1783 1625l19 -4 -9 4 -18 4zM1793 1625l16 -4 -11 4 -15 3z"/><path fill="#50320a" stroke="#50320a" stroke-width="1" d="M1457 849l3 1 -19 12 -3 -1zM1791 1620l21 -4 -10 5 -19 4z"/><path fill="#ff911e" stroke="#ff911e" stroke-width="1" d="M1845 868l16 -1 14 15 -17 1zM1861 867l15 -1 15 14 -16 2zM1876 866l13 -2 16 15 -14 1zM1889 864l11 -1 17 14 -12 2zM1900 863l9 -1 18 14 -10 1zM1817 885l21 -1 11 16 -22 1zM1838 884l20 -1 12 16 -21 1zM1858 883l17 -1 14 15 -19 2zM1917 877l10 -1 16 14 -10 2zM1927 876l7 -2 17 14 -8 2zM1934 874l6 -2 17 14 -6 2zM1827 901l22 -1 11 17 -23 2zM1951 888l6 -2 16 15 -6 3zM1957 886l3 -1 16 14 -3 2zM1811 920l26 -1 9 18 -27 1zM1973 901l3 -2 16 16 -3 2zM1790 940l29 -2 7 20 -30 1zM1819 938l27 -1 9 19 -29 2zM1992 915l1 -3 15 16 -1 3zM1796 959l30 -1 7 20 -31 2zM2007 931l1 -3 14 17 -1 3zM1802 980l31 -2 7 22 -33 2zM2021 948l1 -3 13 17 -1 4zM1807 1002l33 -2 6 22 -34 2zM2034 966l1 -4 12 18 -1 4zM1812 1024l34 -2 6 23 -35 2zM2046 984l1 -4 11 18 0 4zM1817 1047l35 -2 6 23 -36 3zM1822 1071l36 -3 5 24 -37 3zM2068 1022l0 -5 9 19 0 5zM1826 1095l37 -3 4 25 -38 2zM2077 1041l0 -5 8 20 1 6zM1829 1119l38 -2 4 24 -39 3zM2086 1062l-1 -6 7 20 1 6zM1832 1144l39 -3 3 25 -39 4zM2093 1082l-1 -6 7 20 0 7zM1874 1166l37 -4 4 25 -38 5zM2099 1103l0 -7 5 21 0 7zM1877 1192l38 -5 2 25 -37 5zM2102 1130l2 -6 4 21 -2 7zM1880 1217l37 -5 2 25 -38 5zM2106 1152l2 -7 3 21 -2 7zM1919 1237l36 -5 1 24 -35 6zM2103 1181l6 -8 2 22 -7 8zM1956 1256l32 -6 1 24 -32 7zM2095 1212l9 -9 1 22 -10 9zM2104 1203l7 -8 0 22 -6 8zM1957 1281l32 -7 0 24 -33 7zM1989 1274l29 -7 0 23 -29 8zM2018 1267l25 -8 0 23 -25 8zM2082 1242l13 -8 0 22 -14 9zM2095 1234l10 -9 0 22 -10 9zM2018 1290l25 -8 -2 23 -25 8zM2043 1282l21 -8 -1 22 -22 9zM2064 1274l17 -9 -1 22 -17 9zM2081 1265l14 -9 -1 22 -14 9z"/><path fill="#4b280a" stroke="#4b280a" stroke-width="1" d="M1438 858l-1 1 -17 13 1 -1zM1421 871l-1 1 -17 14 1 -2zM1420 872l1 2 -17 14 -1 -2zM1404 884l-1 2 -16 15 2 -2zM1403 886l1 2 -16 15 -1 -2zM1404 888l3 2 -16 15 -3 -2zM1389 899l-2 2 -15 15 2 -2zM1387 901l1 2 -16 15 0 -2zM1388 903l3 2 -16 16 -3 -3zM1391 905l5 2 -15 16 -6 -2zM1374 914l-2 2 -15 16 2 -3zM1372 916l0 2 -14 17 -1 -3zM1372 918l3 3 -15 17 -2 -3zM1375 921l6 2 -15 17 -6 -2zM1359 929l-2 3 -13 17 2 -3zM1357 932l1 3 -14 17 0 -3zM1358 935l2 3 -13 17 -3 -3zM1360 938l6 2 -14 18 -5 -3zM1366 940l8 3 -13 18 -9 -3zM1344 949l0 3 -13 18 0 -4zM1344 952l3 3 -13 18 -3 -3zM1347 955l5 3 -13 19 -5 -4zM1352 958l9 3 -13 19 -9 -3zM1331 966l0 4 -12 18 0 -4zM1331 970l3 3 -12 19 -3 -4zM1334 973l5 4 -12 19 -5 -4zM1339 977l9 3 -12 20 -9 -4zM1348 980l12 3 -12 20 -12 -3zM1319 984l0 4 -11 19 0 -4zM1319 988l3 4 -12 19 -2 -4zM1322 992l5 4 -11 19 -6 -4zM1327 996l9 4 -11 20 -9 -5zM1336 1000l12 3 -11 21 -12 -4zM1308 1003l0 4 -10 19 0 -4zM1308 1007l2 4 -10 20 -2 -5zM1310 1011l6 4 -10 21 -6 -5zM1316 1015l9 5 -10 20 -9 -4zM1325 1020l12 4 -10 21 -12 -5zM1337 1024l16 4 -10 21 -16 -4zM1298 1022l0 4 -9 20 0 -5zM1298 1026l2 5 -9 20 -2 -5zM1300 1031l6 5 -9 20 -6 -5zM1306 1036l9 4 -9 21 -9 -5zM1315 1040l12 5 -8 21 -13 -5zM1327 1045l16 4 -8 22 -16 -5zM1289 1041l0 5 -8 20 1 -5zM1289 1046l2 5 -8 21 -2 -6zM1291 1051l6 5 -8 21 -6 -5zM1297 1056l9 5 -8 22 -9 -6zM1306 1061l13 5 -8 22 -13 -5zM1319 1066l16 5 -8 23 -16 -6zM1282 1061l-1 5 -7 21 1 -6zM1281 1066l2 6 -7 21 -2 -6zM1283 1072l6 5 -7 22 -6 -6zM1289 1077l9 6 -7 22 -9 -6zM1298 1083l13 5 -7 23 -13 -6zM1311 1088l16 6 -7 22 -16 -5zM1327 1094l20 5 -7 23 -20 -6zM1275 1081l-1 6 -6 20 1 -6zM1274 1087l2 6 -6 21 -2 -7zM1276 1093l6 6 -6 21 -6 -6zM1282 1099l9 6 -6 22 -9 -7zM1291 1105l13 6 -6 22 -13 -6zM1304 1111l16 5 -5 23 -17 -6zM1320 1116l20 6 -5 23 -20 -6zM1269 1101l-1 6 -5 21 1 -7zM1268 1107l2 7 -5 21 -2 -7zM1270 1114l6 6 -5 22 -6 -7zM1276 1120l9 7 -5 22 -9 -7zM1285 1127l13 6 -5 23 -13 -7zM1298 1133l17 6 -5 23 -17 -6zM1315 1139l20 6 -5 24 -20 -7zM1264 1121l-1 7 -4 21 2 -7zM1263 1128l2 7 -4 22 -2 -8zM1265 1135l6 7 -4 22 -6 -7zM1271 1142l9 7 -4 22 -9 -7zM1280 1149l13 7 -3 22 -14 -7zM1293 1156l17 6 -4 23 -16 -7zM1310 1162l20 7 -3 23 -21 -7zM1330 1169l25 6 -4 24 -24 -7zM1259 1149l2 8 -2 21 -2 -8zM1261 1157l6 7 -3 22 -5 -8zM1267 1164l9 7 -2 23 -10 -8zM1276 1171l14 7 -3 23 -13 -7zM1290 1178l16 7 -2 24 -17 -8zM1306 1185l21 7 -2 24 -21 -7zM1327 1192l24 7 -2 24 -24 -7zM1257 1170l2 8 -2 22 -2 -9zM1259 1178l5 8 -1 22 -6 -8zM1264 1186l10 8 -2 22 -9 -8zM1274 1194l13 7 -2 23 -13 -8zM1287 1201l17 8 -2 23 -17 -8zM1304 1209l21 7 -2 23 -21 -7zM1325 1216l24 7 -1 23 -25 -7zM1255 1191l2 9 0 21 -2 -8zM1257 1200l6 8 -1 22 -5 -9zM1263 1208l9 8 0 22 -10 -8zM1272 1216l13 8 0 23 -13 -9zM1285 1224l17 8 0 23 -17 -8zM1302 1232l21 7 0 24 -21 -8zM1323 1239l25 7 -1 24 -24 -7zM1255 1213l2 8 0 21 -2 -9zM1257 1221l5 9 1 21 -6 -9zM1262 1230l10 8 0 22 -9 -9zM1272 1238l13 9 0 22 -13 -9zM1285 1247l17 8 0 22 -17 -8zM1302 1255l21 8 0 23 -21 -9zM1323 1263l24 7 1 24 -25 -8zM1255 1233l2 9 2 22 -2 -10zM1257 1242l6 9 2 22 -6 -9zM1263 1251l9 9 2 22 -9 -9zM1272 1260l13 9 2 22 -13 -9zM1285 1269l17 8 2 23 -17 -9zM1302 1277l21 9 2 22 -21 -8zM1323 1286l25 8 1 23 -24 -9zM1257 1254l2 10 3 20 -2 -9zM1259 1264l6 9 2 21 -5 -10zM1265 1273l9 9 3 21 -10 -9zM1274 1282l13 9 3 22 -13 -10zM1287 1291l17 9 3 22 -17 -9zM1304 1300l21 8 2 23 -20 -9zM1325 1308l24 9 3 22 -25 -8zM1260 1275l2 9 4 21 -3 -10zM1262 1284l5 10 4 21 -5 -10zM1267 1294l10 9 4 22 -10 -10zM1277 1303l13 10 4 21 -13 -9zM1290 1313l17 9 3 22 -16 -10zM1307 1322l20 9 4 22 -21 -9zM1327 1331l25 8 3 22 -24 -8zM1266 1305l5 10 5 20 -6 -10zM1271 1315l10 10 4 20 -9 -10zM1281 1325l13 9 4 21 -13 -10zM1294 1334l16 10 5 21 -17 -10zM1310 1344l21 9 4 21 -20 -9zM1331 1353l24 8 4 22 -24 -9zM1270 1325l6 10 6 20 -6 -10zM1276 1335l9 10 6 21 -9 -11zM1285 1345l13 10 6 21 -13 -10zM1298 1355l17 10 6 20 -17 -9zM1315 1365l20 9 6 21 -20 -10zM1335 1374l24 9 6 21 -24 -9zM1276 1345l6 10 7 20 -6 -10zM1282 1355l9 11 7 19 -9 -10zM1291 1366l13 10 7 19 -13 -10zM1304 1376l17 9 6 20 -16 -10zM1321 1385l20 10 6 20 -20 -10zM1341 1395l24 9 5 20 -23 -9zM1283 1365l6 10 8 19 -6 -11zM1289 1375l9 10 8 19 -9 -10zM1298 1385l13 10 8 20 -13 -11zM1311 1395l16 10 8 20 -16 -10zM1327 1405l20 10 7 19 -19 -9zM1347 1415l23 9 7 19 -23 -9zM1291 1383l6 11 9 18 -6 -10zM1297 1394l9 10 9 19 -9 -11zM1306 1404l13 11 8 18 -12 -10zM1319 1415l16 10 8 18 -16 -10zM1335 1425l19 9 8 19 -19 -10zM1354 1434l23 9 8 19 -23 -9zM1300 1402l6 10 9 18 -5 -10zM1306 1412l9 11 9 18 -9 -11zM1315 1423l12 10 10 18 -13 -10zM1327 1433l16 10 9 18 -15 -10zM1343 1443l19 10 9 17 -19 -9zM1362 1453l23 9 8 18 -22 -10zM1315 1430l9 11 11 17 -9 -11zM1324 1441l13 10 10 17 -12 -10zM1337 1451l15 10 10 17 -15 -10zM1352 1461l19 9 9 17 -18 -9zM1371 1470l22 10 9 16 -22 -9zM1326 1447l9 11 11 16 -9 -10zM1335 1458l12 10 11 16 -12 -10zM1347 1468l15 10 11 16 -15 -10zM1362 1478l18 9 11 16 -18 -9zM1380 1487l22 9 9 16 -20 -9zM1337 1464l9 10 12 15 -9 -10zM1346 1474l12 10 11 15 -11 -10zM1358 1484l15 10 11 15 -15 -10zM1373 1494l18 9 10 15 -17 -9zM1391 1503l20 9 11 15 -21 -9zM1358 1489l11 10 13 15 -11 -10zM1369 1499l15 10 12 14 -14 -9zM1384 1509l17 9 12 14 -17 -9zM1401 1518l21 9 10 14 -19 -9zM1371 1504l11 10 13 13 -11 -9zM1382 1514l14 9 13 13 -14 -9zM1396 1523l17 9 12 13 -16 -9zM1413 1532l19 9 12 12 -19 -8zM1384 1518l11 9 14 13 -11 -10zM1395 1527l14 9 13 13 -13 -9zM1409 1536l16 9 12 12 -15 -8zM1425 1545l19 8 11 12 -18 -8zM1409 1540l13 9 13 11 -12 -9zM1422 1549l15 8 13 11 -15 -8zM1437 1557l18 8 13 11 -18 -8zM1423 1551l12 9 14 10 -12 -8zM1435 1560l15 8 14 10 -15 -8zM1450 1568l18 8 12 9 -16 -7zM1449 1570l15 8 14 9 -14 -8zM1464 1578l16 7 13 9 -15 -7zM1478 1587l15 7 13 7 -14 -7zM1492 1594l14 7 14 6 -14 -6zM1757 1632l18 -3 -8 3 -17 3zM1775 1629l18 -4 -10 3 -16 4zM1750 1635l17 -3 -8 1 -15 3z"/><path fill="#ff961e" stroke="#ff961e" stroke-width="1" d="M1875 882l16 -2 15 15 -17 2zM1891 880l14 -1 16 15 -15 1zM1905 879l12 -2 16 15 -12 2zM1849 900l21 -1 12 17 -22 1zM1870 899l19 -2 13 17 -20 2zM1889 897l17 -2 14 17 -18 2zM1906 895l15 -1 14 16 -15 2zM1921 894l12 -2 15 16 -13 2zM1933 892l10 -2 16 16 -11 2zM1943 890l8 -2 16 16 -8 2zM1837 919l23 -2 11 18 -25 2zM1860 917l22 -1 12 17 -23 2zM1882 916l20 -2 13 17 -21 2zM1959 906l8 -2 16 16 -9 2zM1967 904l6 -3 16 16 -6 3zM1846 937l25 -2 10 19 -26 2zM1983 920l6 -3 15 17 -6 3zM1989 917l3 -2 15 16 -3 3zM1826 958l29 -2 8 21 -30 1zM1855 956l26 -2 9 20 -27 3zM2004 934l3 -3 14 17 -3 3zM1833 978l30 -1 8 21 -31 2zM2018 951l3 -3 13 18 -3 3zM1840 1000l31 -2 7 21 -32 3zM2031 969l3 -3 12 18 -3 4zM1846 1022l32 -3 7 23 -33 3zM2043 988l3 -4 12 18 -3 5zM1852 1045l33 -3 7 23 -34 3zM2055 1007l3 -5 10 20 -3 5zM2058 1002l0 -4 10 19 0 5zM1858 1068l34 -3 6 24 -35 3zM2065 1027l3 -5 9 19 -2 6zM1863 1092l35 -3 5 24 -36 4zM2075 1047l2 -6 9 21 -3 5zM1867 1117l36 -4 4 25 -36 3zM2083 1067l3 -5 7 20 -3 6zM1871 1141l36 -3 4 24 -37 4zM2090 1088l3 -6 6 21 -3 6zM1911 1162l35 -4 3 24 -34 5zM2096 1109l3 -6 5 21 -2 6zM1915 1187l34 -5 3 25 -35 5zM2095 1137l7 -7 4 22 -6 7zM1917 1212l35 -5 3 25 -36 5zM1952 1207l32 -6 3 25 -32 6zM2090 1167l10 -8 3 22 -10 8zM2100 1159l6 -7 3 21 -6 8zM1955 1232l32 -6 1 24 -32 6zM1987 1226l28 -7 2 24 -29 7zM2079 1197l14 -8 2 23 -14 8zM2093 1189l10 -8 1 22 -9 9zM1988 1250l29 -7 1 24 -29 7zM2017 1243l25 -7 1 23 -25 8zM2042 1236l21 -8 1 23 -21 8zM2063 1228l18 -8 1 22 -18 9zM2081 1220l14 -8 0 22 -13 8zM2043 1259l21 -8 0 23 -21 8zM2064 1251l18 -9 -1 23 -17 9z"/><path fill="#ff9b1e" stroke="#ff9b1e" stroke-width="1" d="M1902 914l18 -2 14 17 -19 2zM1920 912l15 -2 15 17 -16 2zM1935 910l13 -2 15 17 -13 2zM1948 908l11 -2 15 16 -11 3zM1871 935l23 -2 11 19 -24 2zM1894 933l21 -2 12 19 -22 2zM1963 925l11 -3 15 17 -11 3zM1974 922l9 -2 15 17 -9 2zM1881 954l24 -2 11 20 -26 2zM1989 939l9 -2 14 17 -9 3zM1998 937l6 -3 14 17 -6 3zM1863 977l27 -3 10 21 -29 3zM2012 954l6 -3 13 18 -6 4zM1871 998l29 -3 8 22 -30 2zM2025 973l6 -4 12 19 -6 4zM1878 1019l30 -2 8 22 -31 3zM1885 1042l31 -3 7 23 -31 3zM1892 1065l31 -3 7 23 -32 4zM1898 1089l32 -4 6 24 -33 4zM1903 1113l33 -4 5 24 -34 5zM2077 1073l6 -6 7 21 -6 6zM1907 1138l34 -5 5 25 -35 4zM2084 1094l6 -6 6 21 -6 7zM1946 1158l31 -5 4 24 -32 5zM2090 1116l6 -7 6 21 -7 7zM1949 1182l32 -5 3 24 -32 6zM2086 1144l9 -7 5 22 -10 8zM1984 1201l29 -6 2 24 -28 7zM2076 1174l14 -7 3 22 -14 8zM2015 1219l25 -7 2 24 -25 7zM2040 1212l22 -7 1 23 -21 8zM2062 1205l17 -8 2 23 -18 8z"/><path fill="#ff9b23" stroke="#ff9b23" stroke-width="1" d="M1915 931l19 -2 13 18 -20 3zM1934 929l16 -2 13 18 -16 2zM1950 927l13 -2 15 17 -15 3zM1905 952l22 -2 12 19 -23 3zM1978 942l11 -3 14 18 -12 3zM1890 974l26 -2 10 20 -26 3zM2003 957l9 -3 13 19 -9 3zM1900 995l26 -3 9 22 -27 3zM2037 992l6 -4 12 19 -6 4zM2049 1011l6 -4 10 20 -6 4zM2059 1031l6 -4 10 20 -7 5zM2068 1052l7 -5 8 20 -6 6zM1936 1109l30 -4 6 24 -31 4zM1941 1133l31 -4 5 24 -31 5zM2074 1100l10 -6 6 22 -9 6zM2081 1122l9 -6 5 21 -9 7zM1981 1177l28 -6 4 24 -29 6zM2072 1151l14 -7 4 23 -14 7zM2013 1195l25 -7 2 24 -25 7zM2038 1188l21 -7 3 24 -22 7zM2059 1181l17 -7 3 23 -17 8z"/><path fill="#ffa023" stroke="#ffa023" stroke-width="1" d="M1927 950l20 -3 12 19 -20 3zM1947 947l16 -2 13 19 -17 2zM1963 945l15 -3 13 18 -15 4zM1916 972l23 -3 11 20 -24 3zM1939 969l20 -3 12 20 -21 3zM1959 966l17 -2 13 19 -18 3zM1976 964l15 -4 13 20 -15 3zM1991 960l12 -3 13 19 -12 4zM1926 992l24 -3 10 21 -25 4zM1950 989l21 -3 11 21 -22 3zM1971 986l18 -3 11 20 -18 4zM1989 983l15 -3 12 19 -16 4zM2004 980l12 -4 12 20 -12 3zM2016 976l9 -3 12 19 -9 4zM1908 1017l27 -3 9 22 -28 3zM1935 1014l25 -4 9 22 -25 4zM1960 1010l22 -3 10 21 -23 4zM1982 1007l18 -4 11 21 -19 4zM2000 1003l16 -4 11 21 -16 4zM2016 999l12 -3 11 20 -12 4zM2028 996l9 -4 12 19 -10 5zM1916 1039l28 -3 8 22 -29 4zM1944 1036l25 -4 9 22 -26 4zM1969 1032l23 -4 9 22 -23 4zM2011 1024l16 -4 10 21 -17 4zM2027 1020l12 -4 10 20 -12 5zM2039 1016l10 -5 10 20 -10 5zM1923 1062l29 -4 8 23 -30 4zM1952 1058l26 -4 8 23 -26 4zM1978 1054l23 -4 8 22 -23 5zM2037 1041l12 -5 10 21 -13 5zM2049 1036l10 -5 9 21 -9 5zM1930 1085l30 -4 6 24 -30 4zM1960 1081l26 -4 7 23 -27 5zM1986 1077l23 -5 8 23 -24 5zM2029 1067l17 -5 8 22 -17 6zM2046 1062l13 -5 8 21 -13 6zM2059 1057l9 -5 9 21 -10 5zM1966 1105l27 -5 6 23 -27 6zM1993 1100l24 -5 7 23 -25 5zM2017 1095l20 -5 7 22 -20 6zM2037 1090l17 -6 7 22 -17 6zM2054 1084l13 -6 7 22 -13 6zM2067 1078l10 -5 7 21 -10 6zM1972 1129l27 -6 6 24 -28 6zM1999 1123l25 -5 5 23 -24 6zM2024 1118l20 -6 6 23 -21 6zM2044 1112l17 -6 6 23 -17 6zM2061 1106l13 -6 7 22 -14 7zM1977 1153l28 -6 4 24 -28 6zM2005 1147l24 -6 5 24 -25 6zM2029 1141l21 -6 5 23 -21 7zM2050 1135l17 -6 5 22 -17 7zM2067 1129l14 -7 5 22 -14 7zM2009 1171l25 -6 4 23 -25 7zM2034 1165l21 -7 4 23 -21 7zM2055 1158l17 -7 4 23 -17 7z"/><path fill="#ffa523" stroke="#ffa523" stroke-width="1" d="M1992 1028l19 -4 9 21 -19 5zM2001 1050l19 -5 9 22 -20 5zM2020 1045l17 -4 9 21 -17 5zM2009 1072l20 -5 8 23 -20 5z"/></g></g><g clip-path="url(#co)"><circle cx="1862" cy="1106" r="95" fill="url(#hl)"/></g><path d="M1692 783L1694 783L1695 783L1696 783L1698 783L1699 783L1700 783L1702 783L1703 783L1704 783L1705 783L1706 783L1707 783L1708 783L1709 783L1710 783L1711 782L1712 782L1712 782L1713 782L1714 782L1714 782L1715 782L1715 782L1715 782L1716 782L1716 782L1716 782L1716 782L1716 782L1716 782L1716 782L1716 782L1715 782L1715 782L1715 782L1714 782M1703 788L1706 788L1709 788L1712 788L1714 788L1717 788L1720 788L1722 788L1725 788L1727 788L1729 788L1732 787L1734 787L1736 787L1738 787L1739 787L1741 787L1742 787L1744 787L1745 787L1746 787L1747 787L1748 786L1749 786L1749 786L1750 786L1750 786L1750 786L1750 786L1750 786L1750 786L1750 786L1749 786M1714 796L1719 796L1723 796L1727 796L1731 796L1736 796L1739 796L1743 796L1747 796L1750 795L1754 795L1757 795L1760 795L1763 795L1766 795L1768 795L1771 794L1773 794L1775 794L1777 794L1779 794L1780 794L1781 794L1782 793L1783 793L1784 793L1784 793L1784 793L1784 793L1784 792L1784 792M1725 808L1731 807L1737 807L1743 807L1749 807L1754 807L1759 807L1764 807L1769 806L1774 806L1778 806L1783 806L1787 806L1791 805L1794 805L1798 805L1801 805L1804 805L1806 804L1809 804L1811 804L1812 804L1814 803L1815 803L1816 803L1817 803L1818 802L1818 802L1818 802L1817 802M1737 822L1744 822L1752 822L1759 821L1766 821L1772 821L1779 821L1785 821L1791 820L1797 820L1803 820L1808 819L1813 819L1818 819L1822 819L1826 818L1830 818L1834 818L1837 817L1840 817L1842 817L1844 816L1846 816L1848 816L1849 815L1850 815L1850 815L1850 814L1850 814L1850 814M1748 839L1757 839L1766 839L1774 839L1783 838L1791 838L1799 838L1806 837L1813 837L1820 837L1827 836L1833 836L1839 836L1845 835L1850 835L1855 834L1859 834L1863 833L1867 833L1870 833L1873 832L1875 832L1877 831L1879 831L1880 830L1881 830L1882 829L1882 829L1881 829M1759 860L1770 860L1780 859L1790 859L1799 859L1809 858L1818 858L1827 857L1835 857L1843 857L1850 856L1858 855L1864 855L1871 854L1877 854L1882 853L1887 853L1892 852L1896 852L1900 851L1903 850L1905 850L1908 849L1909 849L1911 848L1912 847L1912 847L1912 846L1911 846M1770 884L1782 883L1793 883L1805 883L1816 882L1826 881L1836 881L1846 880L1856 880L1865 879L1873 878L1881 878L1889 877L1896 876L1903 876L1909 875L1914 874L1919 873L1924 873L1928 872L1931 871L1934 870L1937 869L1938 869L1940 868L1940 867L1941 866L1941 866L1940 865M1780 910L1794 910L1807 909L1819 909L1831 908L1843 907L1854 907L1865 906L1876 905L1886 904L1895 904L1904 903L1912 902L1920 901L1927 900L1934 899L1940 898L1945 897L1950 896L1955 895L1958 894L1961 893L1964 892L1966 891L1967 890L1968 889L1968 888L1967 887M1790 940L1805 939L1819 938L1833 938L1846 937L1859 936L1871 935L1883 934L1895 933L1906 932L1916 931L1925 930L1934 929L1943 928L1951 927L1958 926L1964 924L1970 923L1975 922L1980 921L1983 919L1987 918L1989 917L1991 916L1992 914L1993 913L1993 912L1992 911M1800 972L1815 971L1831 970L1846 969L1860 968L1874 967L1887 966L1900 965L1912 964L1924 963L1935 961L1945 960L1955 959L1964 957L1972 956L1980 954L1987 953L1993 951L1998 950L2003 948L2007 947L2010 945L2013 944L2015 942L2016 941L2016 939L2016 938L2015 936M1808 1006L1825 1005L1842 1004L1858 1003L1873 1002L1888 1001L1902 999L1916 998L1929 997L1941 995L1953 993L1964 992L1974 990L1983 989L1992 987L2000 985L2007 983L2013 981L2019 980L2024 978L2028 976L2031 974L2034 972L2036 971L2037 969L2037 967L2037 965M1816 1042L1834 1041L1851 1040L1868 1039L1884 1037L1900 1036L1915 1034L1930 1033L1943 1031L1956 1029L1969 1027L1980 1026L1991 1024L2001 1022L2010 1020L2018 1018L2025 1015L2032 1013L2038 1011L2043 1009L2047 1007L2050 1005L2053 1003L2055 1000L2056 998L2056 996L2056 994M1823 1080L1842 1079L1860 1078L1878 1076L1895 1075L1911 1073L1927 1071L1942 1069L1956 1067L1970 1065L1982 1063L1994 1061L2006 1059L2016 1056L2025 1054L2034 1051L2041 1049L2048 1047L2054 1044L2059 1042L2063 1039L2067 1037L2069 1034L2071 1032L2072 1029L2072 1027L2072 1024M1829 1119L1849 1118L1867 1116L1886 1115L1903 1113L1920 1111L1937 1109L1952 1107L1967 1105L1981 1102L1994 1100L2007 1097L2018 1095L2029 1092L2038 1089L2047 1087L2055 1084L2062 1081L2068 1078L2073 1075L2077 1072L2081 1070L2083 1067L2085 1064L2086 1061L2086 1058M1834 1160L1854 1158L1873 1156L1892 1154L1911 1152L1928 1150L1945 1148L1961 1145L1976 1143L1990 1140L2004 1137L2017 1135L2028 1132L2039 1129L2049 1126L2058 1122L2066 1119L2073 1116L2079 1113L2084 1110L2089 1107L2092 1103L2094 1100L2096 1097L2097 1094L2097 1091M1838 1200L1858 1199L1878 1197L1897 1195L1916 1192L1934 1190L1951 1187L1967 1185L1983 1182L1997 1179L2011 1176L2024 1172L2036 1169L2047 1166L2057 1162L2066 1159L2074 1155L2081 1152L2087 1148L2093 1145L2097 1141L2100 1138L2103 1134L2105 1131L2105 1127L2105 1124M1840 1241L1861 1239L1881 1237L1901 1235L1920 1232L1938 1230L1955 1227L1972 1224L1987 1221L2002 1217L2016 1214L2029 1211L2041 1207L2052 1203L2062 1200L2071 1196L2080 1192L2087 1188L2093 1184L2098 1180L2103 1176L2106 1172L2109 1168L2110 1165L2111 1161M1842 1281L1863 1279L1883 1277L1903 1275L1922 1272L1940 1269L1957 1266L1974 1263L1990 1259L2005 1256L2019 1252L2032 1248L2044 1245L2055 1241L2065 1237L2074 1232L2082 1228L2090 1224L2096 1220L2101 1216L2106 1211L2109 1207L2111 1203L2113 1199L2114 1194M1842 1321L1863 1319L1883 1316L1903 1314L1922 1311L1940 1308L1957 1305L1974 1301L1990 1297L2005 1294L2019 1290L2032 1286L2044 1282L2055 1277L2065 1273L2074 1269L2082 1264L2090 1260L2096 1255L2101 1251L2106 1246L2109 1242L2111 1237L2113 1233L2114 1228M1841 1359L1862 1357L1882 1355L1901 1352L1920 1349L1938 1346L1955 1342L1972 1338L1988 1335L2002 1331L2016 1327L2029 1322L2041 1318L2052 1313L2062 1309L2072 1304L2080 1300L2087 1295L2093 1290L2098 1285L2103 1280L2106 1276L2109 1271L2110 1266M1839 1396L1859 1394L1879 1391L1898 1388L1917 1385L1934 1382L1952 1378L1968 1375L1983 1371L1998 1366L2012 1362L2024 1358L2036 1353L2047 1348L2057 1344L2066 1339L2074 1334L2082 1329L2088 1324L2093 1319L2097 1314L2101 1309L2103 1304L2105 1299M1835 1431L1855 1429L1875 1426L1894 1423L1912 1420L1929 1416L1946 1413L1962 1409L1977 1405L1991 1401L2005 1396L2017 1392L2029 1387L2040 1382L2050 1377L2058 1372L2066 1367L2073 1362L2080 1357L2085 1352L2089 1347L2092 1341L2095 1336M1831 1464L1850 1462L1869 1459L1887 1456L1905 1453L1922 1449L1938 1445L1954 1441L1969 1437L1983 1433L1996 1428L2008 1424L2019 1419L2030 1414L2039 1409L2048 1404L2056 1399L2063 1394L2069 1389L2074 1383L2078 1378L2082 1373L2084 1367M1826 1494L1844 1492L1862 1489L1880 1486L1897 1483L1913 1479L1929 1476L1944 1472L1958 1468L1972 1463L1985 1459L1996 1454L2007 1449L2018 1444L2027 1439L2036 1434L2043 1429L2050 1424L2056 1419L2061 1413L2065 1408L2069 1402M1820 1522L1837 1520L1855 1517L1871 1514L1888 1511L1903 1507L1918 1503L1933 1500L1946 1495L1959 1491L1972 1487L1983 1482L1994 1477L2004 1472L2013 1467L2021 1462L2028 1457L2035 1452L2041 1447L2046 1441L2050 1436M1812 1547L1829 1544L1846 1542L1862 1539L1877 1536L1892 1532L1906 1529L1920 1525L1933 1521L1945 1517L1957 1512L1968 1508L1978 1503L1987 1498L1996 1493L2004 1488L2011 1483L2018 1478L2023 1473L2028 1468M1805 1569L1820 1566L1836 1564L1851 1561L1865 1558L1879 1555L1893 1551L1906 1548L1918 1544L1930 1540L1941 1535L1951 1531L1961 1527L1970 1522L1978 1517L1985 1512L1992 1507L1998 1502L2004 1497M1796 1587L1811 1585L1825 1583L1839 1580L1853 1577L1866 1574L1878 1571L1890 1567L1902 1564L1913 1560L1923 1556L1933 1552L1942 1547L1950 1543L1958 1538L1965 1534L1972 1529L1978 1524M1787 1603L1801 1601L1814 1599L1827 1596L1839 1594L1851 1591L1863 1588L1874 1584L1884 1581L1894 1577L1904 1573L1913 1570L1922 1566L1929 1561L1937 1557L1943 1553L1950 1548M1778 1616L1790 1614L1802 1612L1814 1609L1825 1607L1836 1604L1846 1601L1856 1598L1866 1595L1875 1592L1884 1588L1892 1585L1900 1581L1908 1577L1914 1573M1768 1625L1779 1623L1790 1622L1800 1619L1810 1617L1820 1615L1829 1612L1838 1610L1847 1607L1856 1604L1863 1601L1871 1597L1878 1594M1758 1632L1768 1630L1777 1628L1786 1627L1795 1625L1804 1623L1812 1620L1820 1618L1828 1615M1748 1635L1756 1634L1764 1632M1681 781L1686 781L1691 783L1696 784L1701 787L1706 790L1711 794L1716 798L1721 803L1726 808L1731 814L1736 821L1741 828L1746 837L1751 845L1756 854L1761 864L1766 875L1771 886L1776 898L1780 910L1785 923L1789 936L1794 950L1798 965L1802 980L1806 995L1810 1011L1813 1027L1817 1043L1820 1060L1823 1078L1826 1095L1828 1113L1831 1131L1833 1149L1835 1167L1837 1185L1838 1203L1839 1222L1840 1240L1841 1258L1842 1276L1842 1294L1842 1312L1842 1330L1841 1347L1841 1364L1840 1381L1839 1397L1837 1413L1836 1429L1834 1444L1832 1458L1830 1473L1827 1486L1825 1499L1822 1512L1819 1524L1816 1535L1813 1546L1809 1556L1806 1566L1802 1575L1798 1583L1794 1591L1790 1598L1786 1605L1782 1610L1778 1616L1773 1620L1769 1624L1765 1628L1760 1631L1755 1633L1751 1634L1746 1635M1681 781L1688 781L1695 783L1702 784L1709 787L1716 790L1723 793L1730 797L1737 802L1744 808L1752 814L1759 821L1766 828L1773 836L1780 844L1787 854L1794 863L1801 874L1807 885L1814 896L1821 908L1827 921L1833 934L1839 948L1845 962L1851 977L1856 992L1861 1008L1866 1023L1871 1040L1875 1056L1879 1073L1883 1091L1887 1108L1890 1126L1893 1143L1896 1161L1898 1179L1900 1197L1902 1215L1903 1234L1904 1251L1905 1269L1905 1287L1905 1305L1905 1322L1904 1339L1903 1356L1902 1373L1901 1389L1899 1405L1896 1420L1894 1435L1891 1450L1888 1464L1885 1477L1881 1491L1877 1503L1873 1515L1869 1527L1864 1538L1859 1548L1854 1558L1849 1567L1844 1575L1838 1583L1833 1591L1827 1598L1821 1604L1815 1609L1809 1614L1803 1618L1796 1622L1790 1625L1784 1628L1777 1630M1681 781L1690 781L1699 782L1708 784L1716 787L1725 789L1734 793L1743 797L1752 802L1761 807L1771 813L1780 820L1789 827L1797 835L1806 843L1815 852L1824 862L1832 872L1841 883L1849 894L1857 906L1865 919L1873 932L1880 945L1887 959L1894 973L1901 988L1908 1004L1914 1019L1920 1035L1925 1051L1930 1068L1935 1085L1939 1102L1943 1119L1947 1137L1950 1154L1953 1172L1956 1190L1958 1207L1959 1225L1961 1243L1962 1260L1962 1278L1962 1295L1962 1312L1961 1329L1959 1346L1958 1362L1956 1378L1953 1394L1951 1409L1947 1424L1944 1439L1940 1453L1936 1466L1931 1479L1927 1492L1921 1504L1916 1516L1910 1527L1904 1537L1898 1547L1892 1557L1885 1566L1878 1574L1871 1581L1864 1588L1856 1595L1849 1601L1841 1606L1833 1611L1826 1615L1818 1618L1809 1621M1681 781L1692 781L1702 782L1713 784L1723 786L1734 789L1745 793L1755 797L1766 801L1777 807L1788 813L1798 819L1809 826L1819 834L1830 842L1840 851L1850 860L1860 870L1870 881L1880 892L1889 904L1898 916L1907 929L1916 942L1925 955L1933 970L1940 984L1948 999L1955 1014L1962 1030L1968 1046L1974 1062L1980 1078L1985 1095L1989 1112L1994 1129L1997 1146L2001 1163L2003 1181L2006 1198L2008 1215L2009 1232L2010 1250L2010 1267L2010 1284L2010 1301L2009 1317L2008 1334L2006 1350L2003 1366L2001 1381L1997 1396L1994 1411L1990 1426L1985 1440L1980 1453L1975 1466L1969 1479L1963 1491L1957 1503L1950 1514L1943 1525L1936 1535L1929 1545L1921 1554L1913 1562L1905 1570L1896 1578L1888 1584L1879 1591L1870 1596L1861 1601L1851 1606M1681 781L1693 781L1705 782L1717 784L1729 786L1741 789L1754 792L1766 796L1778 801L1790 806L1802 812L1814 818L1826 825L1838 833L1850 841L1861 849L1873 859L1884 868L1895 879L1906 890L1916 901L1927 913L1936 925L1946 938L1955 951L1964 965L1973 979L1981 994L1989 1009L1997 1024L2004 1039L2010 1055L2016 1071L2022 1087L2027 1104L2031 1120L2036 1137L2039 1154L2042 1170L2045 1187L2047 1204L2049 1221L2050 1238L2050 1255L2050 1271L2049 1288L2048 1304L2047 1320L2045 1336L2042 1351L2039 1367L2035 1382L2031 1397L2027 1411L2022 1425L2017 1438L2011 1452L2005 1464L1998 1477L1991 1488L1984 1500L1976 1511L1968 1521L1960 1531L1951 1540L1942 1549L1933 1557L1923 1565L1914 1572L1904 1579L1894 1585M1681 781L1695 781L1708 782L1721 784L1734 786L1748 789L1761 792L1774 796L1788 800L1801 805L1814 811L1827 817L1840 824L1853 831L1866 839L1878 848L1891 857L1903 866L1915 876L1926 887L1938 898L1949 910L1959 922L1970 934L1980 947L1989 960L1999 974L2007 988L2016 1003L2024 1017L2031 1032L2038 1048L2044 1063L2050 1079L2056 1095L2061 1111L2065 1127L2069 1143L2072 1160L2075 1176L2077 1192L2078 1209L2080 1225L2080 1242L2080 1258L2079 1274L2078 1290L2077 1306L2074 1321L2072 1336L2068 1352L2065 1366L2060 1381L2055 1395L2050 1409L2045 1423L2038 1436L2032 1448L2025 1461L2017 1473L2009 1484L2001 1495L1993 1506L1984 1516L1974 1526L1965 1535L1955 1544L1945 1552M1681 781L1696 781L1710 782L1724 784L1738 786L1753 788L1767 792L1781 795L1795 800L1809 805L1824 810L1837 816L1851 823L1865 830L1878 838L1891 846L1904 855L1917 864L1929 874L1942 884L1953 895L1965 906L1976 918L1987 930L1997 943L2007 955L2017 969L2026 982L2034 996L2042 1011L2050 1025L2057 1040L2064 1055L2070 1070L2075 1085L2080 1101L2085 1117L2089 1132L2092 1148L2095 1164L2097 1180L2099 1196L2100 1212L2100 1228L2100 1244L2100 1260L2099 1275L2097 1291L2095 1306L2092 1321L2088 1336L2085 1350L2080 1365L2075 1379L2070 1393L2064 1406L2058 1419L2051 1432L2043 1444L2036 1456L2028 1468L2019 1479L2010 1490M1681 781L1696 781L1711 782L1726 783L1741 785L1756 788L1771 791L1786 795L1801 799L1815 804L1830 809L1844 815L1858 822L1872 829L1886 836L1900 844L1913 853L1926 862L1939 871L1951 881L1963 892L1975 903L1986 914L1997 926L2008 938L2018 950L2027 963L2036 977L2045 990L2053 1004L2061 1018L2068 1032L2075 1047L2081 1061L2087 1076L2092 1091L2096 1106L2100 1122L2103 1137L2106 1153L2108 1168L2110 1183L2111 1199L2112 1214L2111 1230L2111 1245L2110 1260L2108 1275L2106 1290L2103 1305L2099 1320L2096 1334L2091 1348L2086 1362M1681 781L1697 781L1712 782L1728 783L1743 785L1758 788L1774 791L1789 794L1804 798L1819 803L1833 808L1848 814L1862 821L1876 827L1890 835L1904 843L1917 851L1930 860L1943 869L1955 879L1967 889L1979 899L1990 910L2001 922L2011 933L2021 946L2031 958L2040 971L2049 984L2057 997L2064 1011L2071 1024L2078 1038L2084 1053L2089 1067L2094 1082L2099 1096L2102 1111L2106 1126M1681 781L1697 781L1713 782L1728 783L1744 785L1759 787L1774 790L1789 794L1804 798L1819 802L1834 808L1848 813L1863 819L1877 826L1890 833L1904 841L1917 849L1930 857M1681 781L1697 781L1712 782L1728 783L1743 785L1758 787M1681 781L1697 781L1712 781" stroke="#4a90c8" stroke-width="1" fill="none" stroke-dasharray="9 3" opacity="0.8"/><path d="M1649 782L1648 782L1648 782L1648 782L1647 782L1647 782L1647 782L1647 782L1647 782L1647 782L1647 782L1647 783L1647 783L1648 783L1648 783L1649 783L1649 783L1650 783L1650 783L1651 783L1652 783L1653 783L1653 783L1654 783L1655 783L1656 783L1657 783M1614 786L1613 787L1613 787L1613 787L1612 787L1613 787L1613 787L1613 787L1613 787L1614 787L1615 787L1616 787L1617 787L1618 788L1619 788L1620 788L1622 788L1623 788L1625 788L1627 788L1629 788L1631 788L1633 788M1579 794L1579 794L1579 794L1579 794L1579 794L1579 794L1580 795L1581 795L1582 795L1583 795L1584 795L1586 795L1588 795L1590 795L1592 796L1594 796L1597 796L1599 796L1602 796L1605 796L1608 796M1546 804L1545 804L1545 804L1546 804L1546 804L1547 805L1548 805L1549 805L1550 805L1552 805L1554 806L1556 806L1559 806L1562 806L1565 806L1568 807L1572 807L1576 807L1580 807L1584 807M1514 816L1513 816L1513 817L1513 817L1514 817L1514 817L1515 818L1517 818L1519 818L1521 819L1523 819L1526 819L1529 820L1532 820L1536 820L1540 820L1544 821L1549 821L1554 821L1559 821M1482 831L1482 832L1482 832L1482 832L1483 833L1484 833L1486 834L1488 834L1490 835L1493 835L1496 835L1499 836L1503 836L1508 837L1513 837L1518 837L1523 838L1529 838L1535 838M1453 848L1452 849L1452 850L1452 850L1453 851L1454 851L1456 852L1458 853L1460 853L1463 854L1467 854L1471 855L1475 855L1480 856L1486 856L1492 857L1498 857L1505 858L1512 858M1424 869L1423 870L1423 870L1424 871L1425 872L1427 873L1429 873L1432 874L1435 875L1439 876L1444 876L1449 877L1454 878L1460 878L1467 879L1473 880L1481 880L1489 881M1397 891L1397 892L1397 893L1397 894L1398 895L1400 896L1402 897L1405 898L1409 899L1413 899L1418 900L1423 901L1429 902L1436 903L1443 904L1450 905L1458 906L1467 906M1372 915L1372 916L1372 917L1372 918L1373 920L1375 921L1377 922L1380 923L1384 924L1388 926L1393 927L1399 928L1405 929L1412 930L1420 931L1428 932L1437 933L1447 934M1349 942L1349 943L1349 945L1350 946L1352 948L1354 949L1357 951L1361 952L1366 954L1371 955L1377 957L1384 958L1391 959L1399 961L1408 962L1418 963L1428 964M1328 970L1328 971L1328 973L1329 975L1331 977L1333 978L1337 980L1340 982L1345 984L1351 986L1357 987L1364 989L1372 991L1380 992L1390 994L1400 995L1410 997M1310 999L1310 1001L1310 1003L1311 1005L1312 1007L1315 1009L1318 1011L1322 1013L1327 1015L1333 1018L1339 1020L1346 1022L1354 1024L1363 1025L1373 1027L1384 1029L1395 1031M1294 1031L1294 1034L1295 1036L1296 1039L1299 1041L1302 1044L1306 1046L1311 1049L1317 1051L1323 1053L1331 1056L1339 1058L1349 1060L1359 1062L1370 1065L1381 1067M1281 1063L1281 1066L1281 1069L1283 1071L1285 1074L1289 1077L1293 1080L1298 1083L1304 1085L1310 1088L1318 1091L1327 1093L1336 1096L1346 1099L1358 1101L1370 1103M1270 1095L1270 1099L1271 1102L1272 1105L1275 1108L1278 1111L1282 1114L1287 1118L1293 1121L1300 1124L1308 1127L1316 1130L1326 1133L1337 1136L1348 1138L1361 1141M1262 1132L1263 1135L1264 1139L1267 1143L1270 1146L1274 1150L1279 1153L1285 1157L1292 1160L1300 1163L1309 1167L1319 1170L1329 1173L1341 1176L1354 1179M1257 1166L1258 1169L1259 1173L1261 1177L1265 1181L1269 1185L1274 1189L1280 1193L1287 1196L1295 1200L1304 1204L1314 1207L1325 1211L1337 1214L1349 1218M1255 1199L1255 1204L1257 1208L1259 1212L1262 1216L1266 1220L1272 1225L1278 1229L1285 1233L1293 1237L1302 1241L1312 1245L1323 1249L1335 1252L1348 1256M1256 1237L1257 1242L1259 1246L1263 1251L1267 1255L1272 1260L1278 1264L1285 1269L1293 1273L1302 1277L1312 1282L1323 1286L1335 1290L1348 1294M1259 1271L1260 1276L1263 1280L1266 1285L1270 1290L1275 1295L1281 1299L1288 1304L1296 1309L1305 1313L1315 1318L1326 1322L1338 1326L1351 1330M1266 1309L1269 1314L1272 1319L1276 1324L1281 1328L1287 1333L1294 1338L1302 1343L1311 1348L1321 1352L1332 1357L1343 1361L1356 1366M1275 1341L1277 1346L1281 1351L1285 1356L1290 1361L1296 1366L1303 1371L1310 1376L1319 1381L1329 1386L1340 1391L1351 1395L1363 1400M1288 1377L1292 1382L1296 1387L1301 1393L1307 1398L1314 1403L1321 1408L1330 1413L1339 1418L1350 1423L1361 1427L1373 1432M1302 1407L1305 1412L1309 1417L1314 1422L1320 1428L1327 1433L1334 1438L1343 1443L1352 1448L1362 1453L1373 1457L1385 1462M1321 1440L1325 1445L1330 1451L1336 1456L1342 1461L1350 1466L1358 1471L1367 1476L1376 1481L1387 1485L1398 1490M1343 1471L1348 1477L1353 1482L1360 1487L1367 1492L1375 1497L1383 1501L1392 1506L1403 1511L1413 1515M1368 1501L1373 1506L1379 1511L1386 1515L1393 1520L1401 1525L1410 1529L1420 1534L1430 1538M1394 1527L1400 1532L1406 1537L1413 1541L1421 1546L1430 1550L1439 1554L1448 1558M1428 1555L1435 1560L1442 1564L1450 1568L1459 1572L1468 1576M1458 1576L1465 1579L1472 1583L1480 1587L1488 1590M1501 1599L1509 1602M1681 781L1671 781M1681 781L1670 781M1681 781L1668 781M1681 781L1667 781M1681 781L1667 781L1652 782M1681 781L1666 781L1651 782L1636 783L1620 785M1681 781L1666 781L1650 782L1635 784L1619 786L1604 788L1589 791L1574 795L1559 799L1544 804L1530 809L1515 815L1501 821M1681 781L1666 781L1651 782L1635 784L1620 786L1604 789L1589 792L1574 796L1559 800L1544 805L1529 810L1515 816L1501 823L1487 830L1473 837L1459 845L1446 853L1433 862L1421 872L1409 882L1397 892L1385 902L1374 913L1364 925L1353 937L1344 949L1334 961L1326 974L1317 987L1310 1000L1302 1014L1295 1028L1289 1042L1283 1056M1681 781L1666 781L1651 782L1636 784L1621 786L1606 789L1591 792L1576 796L1561 800L1547 805L1532 811L1518 817L1504 824L1490 831L1476 839L1462 847L1449 855L1436 865L1424 874L1411 884L1399 895L1388 906L1377 917L1366 929L1356 941L1346 954L1336 967L1327 980L1319 993L1311 1007L1303 1021L1296 1035L1290 1050L1284 1064L1279 1079L1274 1094L1270 1109L1266 1125L1263 1140L1260 1155L1258 1171L1257 1186L1256 1201L1256 1217L1256 1232L1257 1247L1258 1262L1260 1277L1263 1292L1266 1307L1269 1321M1667 781L1653 782L1638 784L1624 786L1609 789L1595 793L1580 797L1566 801L1552 806L1538 812L1524 818L1510 825L1496 832L1483 840L1470 848L1457 857L1444 867L1432 877L1419 887L1408 898L1396 909L1385 921L1375 933L1364 946L1355 959L1345 972L1336 985L1328 999L1320 1014L1312 1028L1305 1043L1299 1058L1293 1073L1288 1088L1283 1104L1279 1119L1275 1135L1272 1151L1269 1167L1267 1183L1266 1199L1265 1214L1264 1230L1265 1246L1266 1261L1267 1277L1269 1292L1271 1307L1274 1322L1278 1337L1282 1352L1287 1366L1292 1380L1298 1394L1304 1407L1310 1420L1317 1433L1325 1445L1333 1457L1341 1469M1668 781L1655 782L1641 784L1627 787L1614 789L1600 793L1587 797L1573 802L1560 807L1546 813L1533 819L1520 826L1507 833L1494 841L1481 850L1469 859L1457 869L1445 879L1433 890L1422 901L1411 912L1400 925L1390 937L1380 950L1370 963L1361 977L1353 991L1344 1005L1337 1020L1329 1035L1323 1050L1316 1066L1310 1081L1305 1097L1300 1113L1296 1129L1293 1146L1290 1162L1287 1178L1285 1195L1284 1211L1283 1227L1283 1243L1283 1260L1284 1276L1285 1291L1287 1307L1289 1323L1292 1338L1296 1353L1300 1367L1304 1382L1310 1396L1315 1410L1321 1423L1327 1436L1334 1449L1342 1461L1349 1473L1357 1485L1366 1496L1375 1506L1384 1516L1393 1526L1403 1535L1413 1544M1669 781L1657 783L1645 784L1632 787L1620 790L1607 793L1595 797L1582 802L1570 807L1558 813L1545 820L1533 827L1521 834L1509 843L1497 851L1486 861L1475 871L1463 881L1453 892L1442 904L1432 915L1422 928L1412 941L1402 954L1393 968L1385 982L1377 996L1369 1011L1362 1026L1355 1042L1348 1058L1342 1073L1337 1090L1332 1106L1327 1122L1323 1139L1320 1156L1317 1173L1314 1189L1313 1206L1311 1223L1310 1240L1310 1256L1310 1273L1311 1289L1313 1305L1314 1321L1317 1337L1320 1353L1323 1368L1327 1383L1331 1397L1336 1412L1341 1425L1347 1439L1353 1452L1359 1465L1366 1477L1374 1489L1381 1500L1389 1511L1398 1521L1406 1531L1415 1540L1425 1549L1434 1557L1444 1565L1454 1572L1464 1579L1474 1585M1671 781L1660 783L1649 784L1638 787L1627 790L1616 793L1605 798L1594 802L1583 808L1572 814L1561 820L1550 828L1539 835L1528 844L1518 853L1507 862L1497 872L1487 883L1477 894L1468 906L1458 918L1449 931L1440 944L1432 958L1424 972L1416 986L1408 1001L1401 1017L1394 1032L1388 1048L1382 1064L1377 1081L1372 1097L1367 1114L1363 1131L1359 1148L1356 1165L1353 1182L1351 1200L1350 1217L1348 1234L1348 1251L1347 1268L1348 1285L1348 1302L1350 1318L1351 1335L1354 1351L1356 1366L1359 1382L1363 1397L1367 1412L1371 1426L1376 1440L1381 1454L1387 1467L1393 1479L1399 1491L1406 1503L1413 1514L1420 1525L1428 1535L1436 1545L1444 1554L1452 1562L1461 1570L1470 1577L1479 1584L1488 1591L1497 1596L1507 1601L1517 1606" stroke="#16263a" stroke-width="1" fill="none" opacity="0.85"/><path d="M1681.4 780.8L1683.2 780.9L1685.0 781.2L1686.8 781.5L1688.6 781.9L1690.3 782.4L1692.2 783.0L1694.0 783.7L1695.8 784.4L1697.6 785.2L1699.5 786.2L1701.3 787.1L1703.1 788.2L1705.0 789.4L1706.9 790.6L1708.7 792.0L1710.6 793.4L1712.5 794.9L1714.3 796.5L1716.2 798.1L1718.1 799.9L1720.0 801.7L1721.9 803.7L1723.8 805.7L1725.7 807.8L1727.6 810.0L1729.4 812.3L1731.3 814.7L1733.2 817.1L1735.1 819.7L1737.0 822.3L1738.9 825.0L1740.8 827.8L1742.7 830.7L1744.6 833.7L1746.5 836.8L1748.3 840.0L1750.2 843.2L1752.1 846.6L1753.9 850.0L1755.8 853.5L1757.6 857.1L1759.5 860.8L1761.3 864.5L1763.1 868.4L1764.9 872.3L1766.8 876.3L1768.6 880.4L1770.3 884.6L1772.1 888.9L1773.9 893.2L1775.6 897.7L1777.4 902.2L1779.1 906.8L1780.8 911.4L1782.5 916.2L1784.2 921.0L1785.9 925.9L1787.6 930.9L1789.2 935.9L1790.8 941.0L1792.4 946.2L1794.0 951.5L1795.6 956.8L1797.2 962.2L1798.7 967.7L1800.2 973.2L1801.7 978.8L1803.2 984.5L1804.6 990.2L1806.1 996.0L1807.5 1001.8L1808.9 1007.7L1810.2 1013.7L1811.6 1019.7L1812.9 1025.7L1814.2 1031.8L1815.5 1038.0L1816.7 1044.2L1817.9 1050.5L1819.1 1056.8L1820.3 1063.1L1821.4 1069.5L1822.5 1076.0L1823.6 1082.4L1824.7 1088.9L1825.7 1095.5L1826.7 1102.0L1827.7 1108.6L1828.6 1115.3L1829.5 1121.9L1830.4 1128.6L1831.3 1135.3L1832.1 1142.0L1832.9 1148.8L1833.6 1155.5L1834.4 1162.3L1835.0 1169.1L1835.7 1175.9L1836.3 1182.7L1836.9 1189.5L1837.5 1196.4L1838.0 1203.2L1838.5 1210.0L1839.0 1216.8L1839.4 1223.7L1839.8 1230.5L1840.2 1237.3L1840.5 1244.1L1840.8 1250.9L1841.1 1257.7L1841.3 1264.4L1841.5 1271.2L1841.7 1277.9L1841.8 1284.6L1841.9 1291.3L1842.0 1297.9L1842.0 1304.6L1842.0 1311.2L1842.0 1317.8L1841.9 1324.3L1841.8 1330.8L1841.7 1337.3L1841.5 1343.7L1841.3 1350.1L1841.0 1356.5L1840.8 1362.8L1840.5 1369.0L1840.1 1375.3L1839.8 1381.4L1839.4 1387.5L1839.0 1393.6L1838.5 1399.6L1838.0 1405.6L1837.5 1411.5L1836.9 1417.4L1836.3 1423.2L1835.7 1428.9L1835.1 1434.6L1834.4 1440.2L1833.7 1445.7L1833.0 1451.2L1832.2 1456.6L1831.4 1462.0L1830.6 1467.2L1829.8 1472.4L1828.9 1477.6L1828.0 1482.6L1827.1 1487.6L1826.1 1492.6L1825.2 1497.4L1824.2 1502.2L1823.1 1506.9L1822.1 1511.5L1821.0 1516.0L1819.9 1520.5L1818.8 1524.8L1817.7 1529.1L1816.5 1533.3L1815.3 1537.5L1814.1 1541.5L1812.9 1545.5L1811.6 1549.4L1810.3 1553.2L1809.1 1556.9L1807.7 1560.5L1806.4 1564.1L1805.1 1567.6L1803.7 1570.9L1802.3 1574.2L1800.9 1577.4L1799.5 1580.5L1798.1 1583.6L1796.6 1586.5L1795.2 1589.4L1793.7 1592.2L1792.2 1594.9L1790.7 1597.5L1789.2 1600.0L1787.7 1602.4L1786.1 1604.7L1784.6 1607.0L1783.0 1609.2L1781.4 1611.2L1779.8 1613.2L1778.2 1615.1L1776.6 1617.0L1775.0 1618.7L1773.4 1620.3L1771.7 1621.9L1770.1 1623.4L1768.4 1624.8L1766.8 1626.1L1765.1 1627.3L1763.4 1628.5L1761.8 1629.5L1760.1 1630.5L1758.4 1631.4L1756.7 1632.2L1755.0 1633.0L1753.3 1633.6L1751.6 1634.2L1749.9 1634.7L1748.2 1635.1L1746.4 1635.5L1744.7 1635.7L1743.0 1635.9L1741.3 1636.0L1739.6 1636.0L1737.8 1636.0L1736.1 1635.8L1734.4 1635.6L1732.6 1635.4L1730.9 1635.0L1729.2 1634.6L1727.5 1634.1L1725.8 1633.6L1724.0 1632.9L1722.3 1632.2L1720.6 1631.4L1718.9 1630.6L1717.2 1629.7L1715.5 1628.7L1713.7 1627.7L1712.0 1626.6L1710.3 1625.4L1708.7 1624.1L1707.0 1622.8L1705.3 1621.5L1703.6 1620.0L1701.9 1618.5L1700.2 1617.0L1698.6 1615.3L1696.9 1613.7L1695.3 1611.9L1693.6 1610.1L1692.0 1608.3L1690.3 1606.4L1688.7 1604.4L1687.1 1602.4" stroke="#cd4646" stroke-width="5.5" fill="none"/><path d="M1347.0 1292.4L1417.8 1406.6M1423.8 1309.0L1489.9 1399.1M1499.6 1319.8L1560.6 1391.7M1644.9 1328.5L1697.6 1377.5M1715.2 1329.5L1764.1 1370.6M1781.2 1327.0L1829.3 1363.8M1253.1 1258.1L1264.7 1257.1M1901.5 1315.2L1956.0 1350.6M1259.8 1271.9L1283.6 1269.9M1954.7 1306.2L2017.5 1344.2M1266.8 1286.5L1315.5 1282.4M2000.8 1294.4L2077.8 1337.9M1269.2 1319.4L1409.0 1306.9M2104.8 1244.4L2114.9 1243.5M2076.4 1266.3L2105.3 1280.8M1277.2 1336.7L1484.2 1317.6M2081.3 1262.5L2112.6 1259.7M2100.2 1248.0L2111.5 1253.3M1285.6 1355.1L1587.6 1326.4M2034.1 1284.0L2110.1 1276.8M1289.5 1396.7L2104.7 1314.6" stroke="#fafafa" stroke-width="2.2" fill="none" opacity="0.92"/><path d="M1255.5 1238.9L1344.2 1414.3M1575.0 1327.6L1629.8 1384.5M1261.7 1303.1L1348.9 1295.4M2045.1 1283.0L2104.7 1314.6M1294.6 1374.5L2107.5 1295.1" stroke="#8a8a8a" stroke-width="1.6" fill="none"/><path d="M1314.3 1417.4L2089.8 1336.7" stroke="#f0f0f0" stroke-width="2.2" fill="none"/><path d="M1842.1 1321.1L1879.9 1347.7M1255.8 1244.2L1259.5 1243.9" stroke="#6e6e6e" stroke-width="2.4" fill="none"/><path d="M1681.3 668L1670.5 712L1692.8 712Z" fill="#676767"/><path d="M2151 1173.5L2113 1163L2116 1185Z" fill="#5e5e5e"/><circle cx="1872.5" cy="1341.5" r="12" fill="#666"/><path d="M1880 1333L1893 1355.5L1868 1352Z" fill="#666"/><text x="1669" y="653" font-family="Liberation Sans" font-size="41" fill="#444">Z</text><text x="2159" y="1187" font-family="Liberation Sans" font-size="41" fill="#444">Y</text><text x="1894" y="1381" font-family="Liberation Sans" font-size="41" fill="#444">X</text><rect x="1678.4" y="777.8" width="6" height="6" fill="#111"/><rect x="1685.4" y="763.8" width="11" height="22" fill="#fff" opacity="0.85"/><text x="0" y="0" font-family="Liberation Sans" font-size="22" fill="#0000e8" transform="translate(1686.4 783.8) scale(0.62 1)">4</text><rect x="1680.0" y="997.5" width="6" height="6" fill="#111"/><rect x="1687.0" y="983.5" width="11" height="22" fill="#fff" opacity="0.85"/><text x="0" y="0" font-family="Liberation Sans" font-size="22" fill="#0000e8" transform="translate(1688.0 1003.5) scale(0.62 1)">2</text><rect x="1682.8" y="1407.7" width="6" height="6" fill="#111"/><rect x="1689.8" y="1393.7" width="22" height="22" fill="#fff" opacity="0.85"/><text x="0" y="0" font-family="Liberation Sans" font-size="22" fill="#0000e8" transform="translate(1690.8 1413.7) scale(0.62 1)">-2</text><rect x="1684.1" y="1599.4" width="6" height="6" fill="#111"/><rect x="1691.1" y="1585.4" width="22" height="22" fill="#fff" opacity="0.85"/><text x="0" y="0" font-family="Liberation Sans" font-size="22" fill="#0000e8" transform="translate(1692.1 1605.4) scale(0.62 1)">-4</text><rect x="1752.6" y="1257.5" width="5" height="5" fill="#111"/><path d="M1741.1 1257.0h8" stroke="#22e" stroke-width="1.4"/><rect x="1623.3" y="1166.6" width="5" height="5" fill="#111"/><path d="M1611.8 1166.1h8" stroke="#22e" stroke-width="1.4"/><rect x="1839.4" y="1318.5" width="5" height="5" fill="#111"/><path d="M1827.9 1318.0h8" stroke="#22e" stroke-width="1.4"/><rect x="1475.3" y="1224.1" width="5" height="5" fill="#111"/><path d="M1463.8 1223.6h8" stroke="#22e" stroke-width="1.4"/><rect x="1255.6" y="1241.5" width="5" height="5" fill="#111"/><path d="M1244.1 1241.0h8" stroke="#22e" stroke-width="1.4"/></svg>
<!-- 3D TOOLBAR -->
<div class="a" style="left:2983px;top:347px;width:59px;height:347px;background:#eeeeee;border:1px solid #d0d0d0;border-radius:8px;box-shadow:0 2px 6px rgba(0,0,0,0.18)"></div>
<svg class="a" style="left:2990px;top:355px" width="46" height="330" fill="none" stroke="#000" stroke-width="2">
<circle cx="20.5" cy="20" r="9.3"/><path d="M27 26.5l7 7" stroke-width="3.4" stroke-linecap="round"/><path d="M20.5 15v10M15.5 20h10"/>
<circle cx="20.5" cy="77" r="9.3"/><path d="M27 83.5l7 7" stroke-width="3.4" stroke-linecap="round"/><path d="M15.5 77h10"/>
<path d="M12 135.5a9 9 0 1 0 5 -8" stroke-width="2.2"/><path d="M20.5 123.5l-6 4.5l5.5 4.5" stroke-width="2.2"/>
<rect x="11.5" y="182.5" width="23" height="23" rx="2"/><path d="M23 185v15M17.5 194.5l5.5 5.5l5.5-5.5"/>
<path d="M11.5 263h18v-18h-18zM11.5 245l5-5h18v18l-5 5M29.5 245l5-5" stroke-width="1.8"/><path d="M14.5 259l4-4M18.5 255v-9M18.5 255h8" stroke-width="1.2" stroke-dasharray="2 1.5"/>
<rect x="11.5" y="296.5" width="22" height="22" rx="2"/><path d="M22.5 298v19M13 307.5h19" stroke-width="1.2" stroke-dasharray="2 1.5"/>
</svg>
<!-- RIGHT PANEL -->
<div class="a" style="left:3050px;top:338px;width:6px;height:1745px;background:#d4d4d4"></div>
<div class="a" style="left:3056px;top:337px;width:768px;height:1746px;background:#f0f0f0;border-top:1px solid #fff"></div>
<div class="a" style="left:3795px;top:338px;width:1px;height:1745px;background:#fafafa"></div>
<div class="a" style="left:3821px;top:337px;width:3px;height:1746px;background:#e6e6e6"></div>
<div class="a" style="left:3806px;top:364px;width:6px;height:673px;background:#858585;border-radius:3px"></div>
<div class="a rp" style="left:3069px;top:354px">空间曲线绕z轴旋转而成的曲面的参数方程</div>
<div class="a rp" style="left:3069px;top:390px">空间曲线:</div>
<!-- box 1 -->
<div class="a mb" style="left:3069px;top:424px;width:713px;height:179px"></div>
<svg class="a" style="left:3070px;top:448px" width="24" height="132"><path d="M20 3C12 5 10 10 10 20V52C10 60 8 63 3 66C8 69 10 72 10 80V112C10 122 12 127 20 129" fill="none" stroke="#000" stroke-width="2.4"/></svg>
<div class="a m" style="left:3096px;top:451px"><i>x</i> = <i>φ</i>(<i>t</i>)</div>
<div class="a m" style="left:3096px;top:493px"><i>y</i> = <i>ψ</i>(<i>t</i>)</div>
<div class="a m sp" style="left:3238px;top:493px">(<i>a</i> ≤ <i>t</i> ≤ <i>b</i>)</div>
<div class="a m" style="left:3096px;top:536px"><i>z</i> = <i>ω</i>(<i>t</i>)</div>
<!-- box 2 -->
<div class="a mb" style="left:3069px;top:613px;width:713px;height:180px;overflow:hidden">
<svg style="position:absolute;left:1px;top:16px" width="24" height="146"><path d="M20 3C12 5 10 10 10 20V59C10 67 8 70 3 73C8 76 10 79 10 87V126C10 136 12 141 20 143" fill="none" stroke="#000" stroke-width="2.4"/></svg>
<div class="a m" style="left:27px;top:26px"><i>x</i> = </div>
<svg style="position:absolute;left:84px;top:24px" width="240" height="44"><path d="M2 26l5 -3l9 20l11 -41h205" fill="none" stroke="#000" stroke-width="2"/></svg>
<div class="a m" style="left:106px;top:26px">[<i>φ</i>(<i>t</i>)]<sup style="font-size:20px">2</sup> + [<i>ψ</i>(<i>t</i>)]<sup style="font-size:20px">2</sup></div>
<div class="a m" style="left:322px;top:26px">cos <i>θ</i></div>
<div class="a m" style="left:27px;top:76px"><i>y</i> = </div>
<svg style="position:absolute;left:80px;top:74px" width="240" height="44"><path d="M2 26l5 -3l9 20l11 -41h205" fill="none" stroke="#000" stroke-width="2"/></svg>
<div class="a m" style="left:102px;top:76px">[<i>φ</i>(<i>t</i>)]<sup style="font-size:20px">2</sup> + [<i>ψ</i>(<i>t</i>)]<sup style="font-size:20px">2</sup></div>
<div class="a m" style="left:318px;top:76px">sin <i>θ</i></div>
<div class="a m sp" style="left:407px;top:76px">(<i>b</i> ≤ <i>t</i> ≤ <i>b</i> &nbsp; 0 ≤ <i>θ</i> ≤ 2<i>π</i>)</div>
<div class="a m" style="left:27px;top:122px"><i>z</i> = <i>ω</i>(<i>t</i>)</div>
</div>
<!-- radio sphere -->
<div class="a" style="left:3069px;top:807px;width:19px;height:19px;border-radius:50%;background:#fff;border:5.5px solid #0a5cc0"></div>
<div class="a rp" style="left:3097px;top:805px">球体</div>
<!-- box 3 -->
<div class="a mb" style="left:3069px;top:841px;width:713px;height:150px"></div>
<svg class="a" style="left:3071px;top:860px" width="24" height="112"><path d="M20 3C12 5 10 9 10 18V44C10 51 8 54 3 56C8 58 10 61 10 68V94C10 103 12 107 20 109" fill="none" stroke="#000" stroke-width="2.4"/></svg>
<div class="a m" style="left:3096px;top:860px"><i>x</i> = <i>a</i> sin <i>φ</i> cos <i>θ</i></div>
<div class="a m" style="left:3096px;top:899px"><i>y</i> = <i>a</i> sin <i>φ</i> sin <i>θ</i></div>
<div class="a m" style="left:3096px;top:931px"><i>z</i> = <i>a</i> cos <i>φ</i></div>
<!-- sliders -->
<div class="a rp" style="left:3069px;top:1001px">球体纬度角:</div>
<div class="a rp" style="left:3680px;top:1001px;width:101px;text-align:right">180</div>
<div class="a sl" style="left:3069px;top:1043px;width:713px"></div>
<div class="a" style="left:3765px;top:1036px;width:16px;height:22px;background:#0b78d8"></div>
<div class="a rp" style="left:3069px;top:1069px">球体经度角:</div>
<div class="a rp" style="left:3680px;top:1069px;width:101px;text-align:right">299</div>
<div class="a sl" style="left:3069px;top:1110px;width:713px"></div>
<div class="a" style="left:3647px;top:1104px;width:15px;height:21px;background:#0b78d8"></div>
<!-- radio hyperboloid -->
<div class="a radio" style="left:3069px;top:1170px"></div>
<div class="a rp" style="left:3097px;top:1168px">单叶双曲面</div>
<!-- box 4 -->
<div class="a mb" style="left:3069px;top:1204px;width:713px;height:270px"></div>
<svg class="a" style="left:3071px;top:1224px" width="24" height="113"><path d="M20 3C12 5 10 9 10 18V45C10 52 8 55 3 57C8 59 10 62 10 69V96C10 105 12 109 20 111" fill="none" stroke="#000" stroke-width="2.4"/></svg>
<div class="a m" style="left:3096px;top:1225px"><i>x</i> = 1</div>
<div class="a m" style="left:3096px;top:1261px"><i>y</i> = 1</div>
<div class="a m sp" style="left:3198px;top:1261px">(−4 ≤ <i>t</i> ≤ 4)</div>
<div class="a m" style="left:3096px;top:1299px"><i>z</i> = 4<i>t</i></div>
<svg class="a" style="left:3071px;top:1342px" width="24" height="113"><path d="M20 3C12 5 10 9 10 18V45C10 52 8 55 3 57C8 59 10 62 10 69V96C10 105 12 109 20 111" fill="none" stroke="#000" stroke-width="2.4"/></svg>
<div class="a m" style="left:3096px;top:1343px"><i>x</i> = cos <i>θ</i> − <i>t</i> &nbsp;sin <i>θ</i></div>
<div class="a m" style="left:3096px;top:1380px"><i>y</i> = sin <i>θ</i> + <i>t</i> cos <i>θ</i></div>
<div class="a m" style="left:3096px;top:1417px"><i>z</i> = 2<i>t</i></div>
<div class="a rp" style="left:3069px;top:1485px">旋转角度</div>
<div class="a rp" style="left:3680px;top:1485px;width:101px;text-align:right">360</div>
<div class="a sl" style="left:3069px;top:1526px;width:713px"></div>
<div class="a" style="left:3765px;top:1519px;width:16px;height:22px;background:#c6c6c6"></div>
<!-- radio cubic -->
<div class="a radio" style="left:3069px;top:1585px"></div>
<div class="a rp" style="left:3097px;top:1583px">三次曲面</div>
<!-- box 5 -->
<div class="a mb" style="left:3069px;top:1620px;width:713px;height:300px"></div>
<svg class="a" style="left:3071px;top:1634px" width="24" height="132"><path d="M20 3C12 5 10 10 10 20V52C10 60 8 63 3 66C8 69 10 72 10 80V112C10 122 12 127 20 129" fill="none" stroke="#000" stroke-width="2.4"/></svg>
<div class="a m" style="left:3096px;top:1640px"><i>x</i> = <i>t</i></div>
<div class="a m" style="left:3096px;top:1679px"><i>y</i> = <i>t</i><sup style="font-size:20px">2</sup></div>
<div class="a m sp" style="left:3205px;top:1679px">(−1 ≤ <i>t</i> ≤ 1)</div>
<div class="a m" style="left:3096px;top:1723px"><i>z</i> = <i>t</i><sup style="font-size:20px">3</sup></div>
<svg class="a" style="left:3071px;top:1771px" width="24" height="132"><path d="M20 3C12 5 10 10 10 20V52C10 60 8 63 3 66C8 69 10 72 10 80V112C10 122 12 127 20 129" fill="none" stroke="#000" stroke-width="2.4"/></svg>
<div class="a m" style="left:3096px;top:1778px"><i>x</i> = <i>t</i> cos <i>θ</i> − <i>t</i><sup style="font-size:20px">2</sup> &nbsp;sin <i>θ</i></div>
<div class="a m" style="left:3096px;top:1821px"><i>y</i> = sin <i>θ</i> + <i>t</i><sup style="font-size:20px">2</sup> cos <i>θ</i></div>
<div class="a m sp" style="left:3362px;top:1821px">(−1 ≤ <i>t</i> ≤ 1, 0 ≤ <i>θ</i> ≤ 2<i>π</i>)</div>
<div class="a m" style="left:3096px;top:1867px"><i>z</i> = <i>t</i><sup style="font-size:20px">3</sup></div>
<div class="a rp" style="left:3069px;top:1931px">旋转角度</div>
<div class="a rp" style="left:3680px;top:1931px;width:101px;text-align:right">360</div>
<div class="a sl" style="left:3069px;top:1971px;width:713px"></div>
<div class="a" style="left:3765px;top:1965px;width:16px;height:21px;background:#c6c6c6"></div>
<!-- radio torus -->
<div class="a radio" style="left:3069px;top:2031px"></div>
<div class="a rp" style="left:3097px;top:2029px">圆环面</div>
<div class="a mb" style="left:3069px;top:2065px;width:713px;height:18px"></div>

</body></html>
